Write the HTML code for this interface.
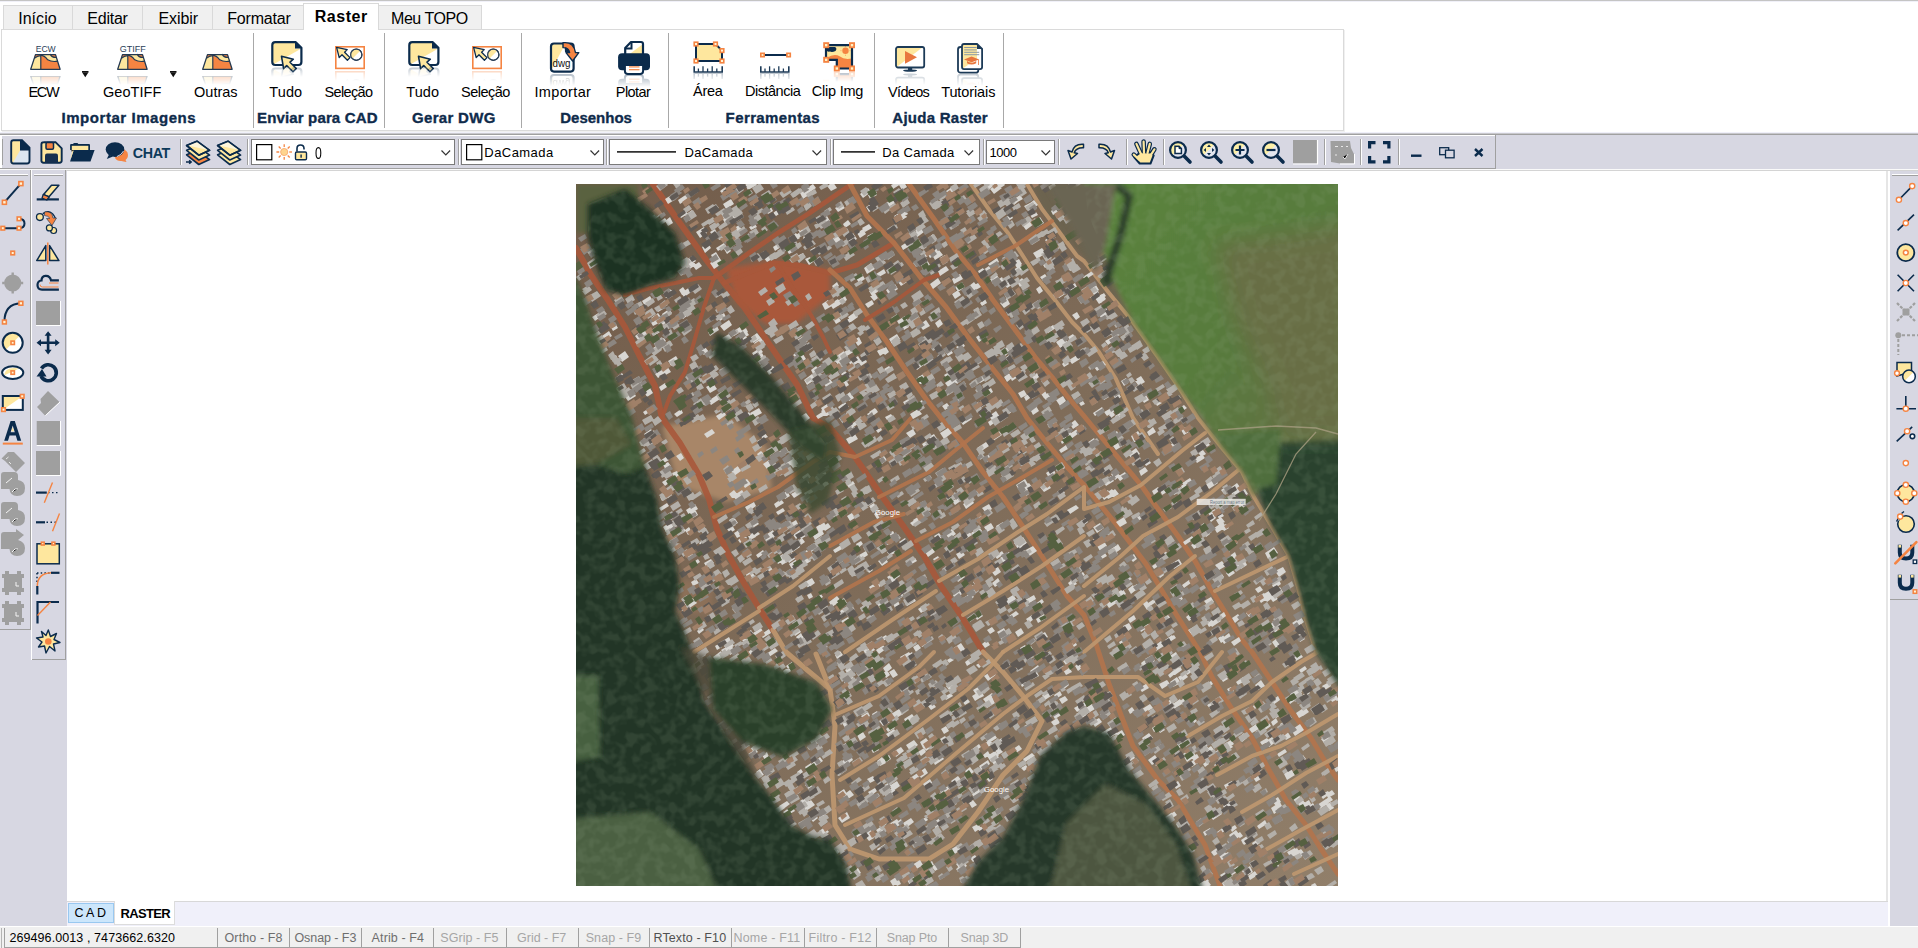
<!DOCTYPE html>
<html><head><meta charset="utf-8"><style>
*{box-sizing:border-box;margin:0;padding:0}
html,body{width:1918px;height:948px;overflow:hidden;background:#fff;font-family:"Liberation Sans", sans-serif}
.a{position:absolute}
.t{position:absolute;white-space:pre}
svg{position:absolute;overflow:visible}
</style></head><body>
<svg style="left:576px;top:184px" width="762" height="702" viewBox="0 0 762 702"><defs>
<clipPath id="cl"><rect width="762" height="702"/></clipPath>
<filter id="bl2" x="-5%" y="-5%" width="110%" height="110%"><feGaussianBlur stdDeviation="2.5"/></filter>
<filter id="bl8" x="-20%" y="-20%" width="140%" height="140%"><feGaussianBlur stdDeviation="10"/></filter>
<filter id="bl1"><feGaussianBlur stdDeviation="0.5"/></filter>
<filter id="leaf" x="0" y="0" width="100%" height="100%">
<feTurbulence type="fractalNoise" baseFrequency="0.1" numOctaves="2" seed="5" result="t"/>
<feColorMatrix in="t" type="matrix" values="0 0 0 0 0.35  0 0 0 0 0.45  0 0 0 0 0.3  -4 0 0 0 2.3" result="c"/>
<feComposite in="c" in2="SourceGraphic" operator="in"/>
</filter>
<filter id="dark" x="0" y="0" width="100%" height="100%">
<feTurbulence type="fractalNoise" baseFrequency="0.12" numOctaves="2" seed="11" result="t"/>
<feColorMatrix in="t" type="matrix" values="0 0 0 0 0  0 0 0 0 0.02  0 0 0 0 0  5 0 0 0 -2.2" result="c"/>
<feComposite in="c" in2="SourceGraphic" operator="in"/>
</filter>
</defs><g clip-path="url(#cl)">
<linearGradient id="gb" x1="0" y1="0" x2="1" y2="1"><stop offset="0" stop-color="#725c4a"/><stop offset="0.45" stop-color="#7e6b58"/><stop offset="1" stop-color="#917f6a"/></linearGradient>
<rect width="762" height="702" fill="url(#gb)"/>
<g filter="url(#bl2)">
<polygon points="0,0 62,0 62,49 0,49" fill="#5a623f"/>
<polygon points="150,84 200,76 254,86 254,112 220,140 190,140 160,118" fill="#a9583a"/>
<polygon points="86,242 150,230 190,262 196,305 150,318 102,302" fill="#a88668"/>
<polygon points="99,394 138,400 135,431 104,428" fill="#8c7058"/>
<polygon points="455,0 505,0 512,30 530,74 538,99 557,138 582,173 602,202 622,234 602,202 582,173 557,138 533,109 508,74 484,49 466,25" fill="#6c6450"/>
</g>
<polyline points="0,64 15,91 32,116 49,143 64,173 79,202 86,234 104,259 123,291 133,315 141,345 153,372 168,399 183,424 197,446" fill="none" stroke="#a8583a" stroke-width="6" stroke-linejoin="round" stroke-linecap="round" opacity="0.9" filter="url(#bl1)"/>
<polyline points="197,446 210,468 230,485 254,505" fill="none" stroke="#bf9870" stroke-width="5" stroke-linejoin="round" stroke-linecap="round" opacity="0.9" filter="url(#bl1)"/>
<polyline points="77,0 94,25 111,49 131,77 148,99 168,123 185,148 202,173 222,202 237,234 254,244 279,273 303,308 328,343 348,372 365,402 382,427 397,451 407,468" fill="none" stroke="#a8583a" stroke-width="6" stroke-linejoin="round" stroke-linecap="round" opacity="0.9" filter="url(#bl1)"/>
<polyline points="407,468 427,488 447,512 466,537 451,567 427,591 402,628 377,660 353,675 303,675 274,665 259,641 256,591 259,542 254,505 240,470" fill="none" stroke="#bf9870" stroke-width="5" stroke-linejoin="round" stroke-linecap="round" opacity="0.9" filter="url(#bl1)"/>
<polyline points="138,94 128,123 118,158 109,188 94,212 86,234" fill="none" stroke="#a8583a" stroke-width="4" stroke-linejoin="round" stroke-linecap="round" opacity="0.9" filter="url(#bl1)"/>
<polyline points="49,111 74,104 99,99 123,94 138,94" fill="none" stroke="#a8583a" stroke-width="4" stroke-linejoin="round" stroke-linecap="round" opacity="0.9" filter="url(#bl1)"/>
<polyline points="138,94 173,69 202,49 232,30 254,15 276,0" fill="none" stroke="#a8583a" stroke-width="5" stroke-linejoin="round" stroke-linecap="round" opacity="0.9" filter="url(#bl1)"/>
<polyline points="148,99 197,79 222,81 254,89 281,81 318,59" fill="none" stroke="#a8583a" stroke-width="5" stroke-linejoin="round" stroke-linecap="round" opacity="0.9" filter="url(#bl1)"/>
<polyline points="202,81 217,104 235,131 247,153 254,168" fill="none" stroke="#a8583a" stroke-width="4" stroke-linejoin="round" stroke-linecap="round" opacity="0.9" filter="url(#bl1)"/>
<polyline points="254,86 274,104 291,131 311,158 331,188 350,215 365,234 387,259 407,288 427,313 447,343 469,377 491,412 508,431 520,460 533,500 557,562 582,596 602,616 614,636 629,661 644,702" fill="none" stroke="#b3744e" stroke-width="5" stroke-linejoin="round" stroke-linecap="round" opacity="0.9" filter="url(#bl1)"/>
<polyline points="274,0 291,32 318,59 345,94 370,123 392,153 417,185 437,210 451,234 471,259 491,283 508,301 540,340 570,380 600,430 624,468 636,493 656,525 676,554 693,586 710,616 730,641 745,665 762,690" fill="none" stroke="#b3744e" stroke-width="5" stroke-linejoin="round" stroke-linecap="round" opacity="0.9" filter="url(#bl1)"/>
<polyline points="333,0 358,35 380,67 400,91 417,116 437,143 459,173 476,193 491,212 508,232 540,271 565,301 582,325 602,352 619,377 636,407 651,431 666,456 676,468 696,498 715,527 735,554 750,579 762,596" fill="none" stroke="#b3744e" stroke-width="5" stroke-linejoin="round" stroke-linecap="round" opacity="0.9" filter="url(#bl1)"/>
<polyline points="395,0 414,27 432,49 447,72 461,94 479,116 496,138 508,150 523,168 540,195 557,234 582,270" fill="none" stroke="#bf9870" stroke-width="4" stroke-linejoin="round" stroke-linecap="round" opacity="0.9" filter="url(#bl1)"/>
<polyline points="451,0 466,25 484,49 501,72 508,77 533,109 557,138 582,173 602,202 622,234 646,264 666,288 678,313 696,343 713,372 723,407 730,436 740,468" fill="none" stroke="#bf9870" stroke-width="4" stroke-linejoin="round" stroke-linecap="round" opacity="0.9" filter="url(#bl1)"/>
<polyline points="289,136 318,118 348,96 363,91" fill="none" stroke="#a8583a" stroke-width="4" stroke-linejoin="round" stroke-linecap="round" opacity="0.9" filter="url(#bl1)"/>
<polyline points="402,81 439,62 476,37" fill="none" stroke="#b3744e" stroke-width="4" stroke-linejoin="round" stroke-linecap="round" opacity="0.9" filter="url(#bl1)"/>
<polyline points="138,333 173,318 202,303 237,278 254,268 279,273 316,256 335,234" fill="none" stroke="#b3744e" stroke-width="4" stroke-linejoin="round" stroke-linecap="round" opacity="0.9" filter="url(#bl1)"/>
<polyline points="303,313 353,288 382,264 407,244" fill="none" stroke="#b3744e" stroke-width="4" stroke-linejoin="round" stroke-linecap="round" opacity="0.9" filter="url(#bl1)"/>
<polyline points="254,362 298,338 328,330" fill="none" stroke="#b3744e" stroke-width="4" stroke-linejoin="round" stroke-linecap="round" opacity="0.9" filter="url(#bl1)"/>
<polyline points="340,357 377,338 412,313 447,293 476,276" fill="none" stroke="#b3744e" stroke-width="4" stroke-linejoin="round" stroke-linecap="round" opacity="0.9" filter="url(#bl1)"/>
<polyline points="254,414 303,387 335,367" fill="none" stroke="#b3744e" stroke-width="4" stroke-linejoin="round" stroke-linecap="round" opacity="0.9" filter="url(#bl1)"/>
<polyline points="363,397 402,375 442,348 471,330 508,303 508,325 533,318 565,301 607,266 629,249" fill="none" stroke="#bf9870" stroke-width="4" stroke-linejoin="round" stroke-linecap="round" opacity="0.9" filter="url(#bl1)"/>
<polyline points="269,468 316,436 360,407" fill="none" stroke="#bf9870" stroke-width="4" stroke-linejoin="round" stroke-linecap="round" opacity="0.9" filter="url(#bl1)"/>
<polyline points="387,431 427,407 466,382 508,352" fill="none" stroke="#bf9870" stroke-width="4" stroke-linejoin="round" stroke-linecap="round" opacity="0.9" filter="url(#bl1)"/>
<polyline points="427,468 464,444 508,412" fill="none" stroke="#bf9870" stroke-width="4" stroke-linejoin="round" stroke-linecap="round" opacity="0.9" filter="url(#bl1)"/>
<polyline points="183,424 217,402 254,372" fill="none" stroke="#bf9870" stroke-width="4" stroke-linejoin="round" stroke-linecap="round" opacity="0.9" filter="url(#bl1)"/>
<polyline points="118,468 153,446 183,427" fill="none" stroke="#bf9870" stroke-width="4" stroke-linejoin="round" stroke-linecap="round" opacity="0.9" filter="url(#bl1)"/>
<polyline points="508,402 545,372 567,352 602,333 636,308 666,283" fill="none" stroke="#bf9870" stroke-width="4" stroke-linejoin="round" stroke-linecap="round" opacity="0.9" filter="url(#bl1)"/>
<polyline points="508,468 557,427 594,392 619,372" fill="none" stroke="#bf9870" stroke-width="4" stroke-linejoin="round" stroke-linecap="round" opacity="0.9" filter="url(#bl1)"/>
<polyline points="639,407 681,387 713,372" fill="none" stroke="#bf9870" stroke-width="4" stroke-linejoin="round" stroke-linecap="round" opacity="0.9" filter="url(#bl1)"/>
<polyline points="261,530 303,512 343,483 358,468" fill="none" stroke="#bf9870" stroke-width="4" stroke-linejoin="round" stroke-linecap="round" opacity="0.9" filter="url(#bl1)"/>
<polyline points="264,596 303,572 353,535 392,505 414,483 427,468" fill="none" stroke="#bf9870" stroke-width="4" stroke-linejoin="round" stroke-linecap="round" opacity="0.9" filter="url(#bl1)"/>
<polyline points="269,641 328,614 377,572 427,530 451,512 476,495 508,493 562,493 589,512 622,498 646,468" fill="none" stroke="#bf9870" stroke-width="4" stroke-linejoin="round" stroke-linecap="round" opacity="0.9" filter="url(#bl1)"/>
<polyline points="612,552 646,532 676,517 696,498 725,478 742,468" fill="none" stroke="#bf9870" stroke-width="4" stroke-linejoin="round" stroke-linecap="round" opacity="0.9" filter="url(#bl1)"/>
<polyline points="641,591 676,572 705,562 730,549 762,530" fill="none" stroke="#bf9870" stroke-width="4" stroke-linejoin="round" stroke-linecap="round" opacity="0.9" filter="url(#bl1)"/>
<polyline points="666,628 696,611 730,589 762,572" fill="none" stroke="#bf9870" stroke-width="4" stroke-linejoin="round" stroke-linecap="round" opacity="0.9" filter="url(#bl1)"/>
<polyline points="691,665 725,646 762,626" fill="none" stroke="#bf9870" stroke-width="4" stroke-linejoin="round" stroke-linecap="round" opacity="0.9" filter="url(#bl1)"/>
<polyline points="718,690 762,670" fill="none" stroke="#bf9870" stroke-width="4" stroke-linejoin="round" stroke-linecap="round" opacity="0.9" filter="url(#bl1)"/>
<g filter="url(#bl1)">
<path d="M439 448l6 -4 3 5 -6 4zM173 341l7 -5 3 4 -8 5zM521 362l7 -5 3 5 -7 5zM301 665l8 -5 2 4 -8 5zM89 310l5 -3 2 4 -4 3zM197 29l8 -6 3 4 -8 5zM316 641l9 -6 2 4 -8 5zM696 401l7 -5 2 4 -7 5zM217 351l5 -4 3 4 -5 4zM481 284l6 -3 2 3 -6 4zM358 352l5 -3 3 4 -5 4zM197 63l6 -4 2 4 -6 4zM516 538l7 -4 3 4 -7 5zM562 215l7 -5 2 3 -7 4zM271 301l6 -4 2 3 -6 4zM311 368l6 -4 3 4 -6 4zM92 177l8 -5 3 5 -8 5zM440 272l5 -4 3 5 -5 4zM190 470l9 -6 3 3 -9 6zM266 577l9 -5 2 4 -8 6zM245 224l6 -4 3 5 -6 4zM741 621l9 -6 3 4 -9 6zM508 525l8 -5 3 5 -8 5zM171 567l7 -5 4 6 -8 5zM356 575l8 -6 4 6 -9 6zM450 435l6 -4 2 4 -5 4zM503 219l4 -2 2 3 -4 2zM464 303l7 -5 4 6 -7 4zM305 166l5 -3 3 5 -4 3zM469 56l9 -6 2 3 -9 6zM267 40l5 -4 3 4 -6 4zM163 563l6 -4 2 3 -6 4zM282 178l7 -4 2 4 -6 4zM103 345l4 -2 3 4 -5 3zM369 349l7 -4 4 5 -7 5zM316 412l8 -6 4 6 -8 5zM190 27l5 -4 2 4 -5 3zM657 322l9 -6 4 6 -9 5zM262 634l9 -6 3 6 -8 5zM594 498l7 -5 4 6 -8 4zM124 167l5 -4 4 5 -5 3zM135 71l5 -3 3 5 -5 4zM378 196l5 -3 2 4 -4 3zM200 328l7 -4 2 3 -7 4zM377 311l5 -3 2 4 -5 3zM88 111l8 -5 2 3 -8 5zM222 46l6 -3 2 3 -5 4zM83 203l6 -4 2 4 -6 4zM376 110l6 -4 3 5 -6 4zM519 114l7 -4 3 6 -6 4zM16 133l8 -5 2 4 -7 5zM412 80l9 -6 2 4 -8 5zM719 506l4 -3 3 5 -4 2zM340 195l7 -5 4 6 -7 4zM243 633l4 -3 4 5 -5 3zM380 163l7 -4 2 3 -6 4zM383 287l7 -5 2 4 -7 5zM462 265l5 -4 2 4 -5 3zM337 336l8 -5 3 5 -8 5zM537 262l8 -5 3 4 -8 5zM395 349l8 -6 4 5 -9 6zM583 540l4 -3 3 4 -5 3zM364 607l8 -5 2 4 -7 5zM676 592l5 -3 4 6 -5 3zM637 614l7 -5 2 4 -6 4zM42 172l7 -5 4 6 -7 5zM253 418l8 -6 4 5 -9 6zM529 310l7 -5 4 6 -8 4zM342 568l6 -4 2 4 -5 4zM552 526l4 -3 3 4 -5 3zM569 475l7 -4 3 6 -6 4zM419 566l4 -3 4 5 -5 3zM128 250l8 -5 3 4 -8 5zM690 557l6 -4 4 5 -7 5zM552 270l8 -6 4 6 -8 5zM535 308l4 -3 4 5 -5 3zM354 100l8 -6 3 5 -8 6zM218 277l4 -2 3 5 -4 3zM73 257l5 -3 4 5 -6 3zM64 148l5 -4 4 6 -6 4zM526 213l5 -3 2 3 -5 3zM307 484l6 -5 3 5 -6 5zM647 564l7 -5 3 4 -8 5zM444 464l5 -3 2 3 -5 4zM493 400l6 -3 2 3 -6 3zM83 324l8 -5 2 3 -8 5zM173 350l7 -4 4 4 -8 5zM59 152l4 -3 3 4 -4 3zM555 252l7 -5 4 6 -8 5zM166 151l5 -3 2 3 -5 3zM239 293l7 -4 2 4 -6 4zM584 306l4 -3 3 5 -5 3zM256 175l4 -3 3 3 -5 4zM270 255l9 -5 3 5 -9 5zM445 304l8 -5 3 4 -8 5zM467 213l5 -4 3 4 -5 3zM147 415l5 -3 2 4 -5 3zM293 107l8 -5 3 4 -8 6zM569 421l9 -6 2 3 -9 6zM89 15l8 -5 3 5 -8 5zM686 411l7 -4 3 6 -6 4zM186 571l5 -3 2 5 -4 3zM415 253l8 -6 3 4 -9 6zM134 48l5 -3 2 4 -4 3zM642 454l5 -3 3 5 -5 3zM479 109l9 -5 3 5 -8 5zM487 486l6 -3 3 5 -6 3zM336 681l8 -5 3 5 -8 5zM701 570l8 -5 2 3 -8 5zM699 387l8 -4 3 5 -7 5zM327 474l9 -6 2 4 -9 5zM35 174l5 -3 2 4 -5 3zM84 156l4 -2 2 3 -4 3zM525 549l10 -6 2 4 -9 6zM296 530l5 -3 2 3 -5 4zM443 497l4 -3 4 6 -5 3zM180 588l4 -3 4 6 -5 2zM442 209l6 -3 3 5 -6 3zM115 398l5 -3 3 4 -6 3zM284 10l8 -6 3 4 -8 6zM750 621l5 -3 3 6 -5 3zM437 86l8 -5 3 4 -8 5zM169 1l8 -6 4 6 -9 5zM428 193l5 -4 3 5 -5 4zM539 550l7 -4 3 5 -7 4zM332 378l7 -4 2 3 -7 4zM552 405l5 -4 3 5 -5 4zM457 69l9 -5 4 5 -9 6zM109 370l5 -3 4 5 -5 3zM567 420l4 -3 4 6 -4 3zM329 419l8 -6 3 4 -9 5zM96 289l5 -2 2 4 -4 3zM320 262l9 -6 2 3 -9 6zM746 502l7 -4 2 4 -6 4zM715 668l6 -4 3 5 -6 3zM409 2l8 -5 2 4 -7 5zM492 251l9 -6 2 4 -8 6zM415 387l7 -4 3 5 -6 4zM601 560l8 -6 3 4 -9 6zM203 622l8 -5 3 3 -8 6zM609 488l9 -6 2 3 -9 6zM679 501l6 -5 4 6 -7 4zM621 262l9 -6 4 5 -10 6zM430 226l6 -4 2 4 -5 4zM166 155l4 -3 2 4 -4 3zM407 515l9 -6 4 5 -9 6zM717 615l6 -4 3 6 -5 3zM323 1l5 -3 3 5 -5 3zM528 228l9 -5 2 4 -8 5zM562 443l8 -6 4 5 -9 6zM695 517l7 -5 2 4 -7 5zM243 291l6 -4 2 4 -6 4zM404 119l5 -4 2 4 -5 3zM310 550l8 -5 3 5 -7 5zM337 180l8 -5 4 5 -8 6zM380 680l9 -6 2 4 -8 6zM334 230l8 -5 4 5 -9 5zM656 382l9 -6 3 4 -9 6zM517 343l7 -4 4 5 -7 5zM396 610l9 -6 2 4 -9 6zM589 456l7 -5 2 3 -7 5zM356 683l5 -4 3 5 -5 3zM605 302l4 -3 4 6 -5 3zM543 458l7 -4 2 4 -7 4zM280 360l5 -3 2 3 -5 4zM284 424l7 -5 2 4 -7 4zM632 334l6 -4 2 4 -5 4zM406 324l7 -4 3 5 -6 4zM576 382l6 -4 2 3 -6 4zM441 98l5 -4 4 5 -6 4zM352 54l5 -4 4 5 -6 4zM134 79l9 -6 4 6 -9 6zM653 688l9 -6 2 4 -9 6zM516 108l5 -3 2 4 -5 3zM695 538l5 -4 2 4 -5 4zM644 493l5 -4 3 6 -5 3zM145 30l7 -5 4 5 -8 5zM500 530l7 -4 4 5 -7 4zM676 659l6 -4 2 4 -6 4zM497 1l6 -4 2 3 -6 4zM224 370l7 -4 2 3 -7 4zM590 456l8 -5 2 3 -8 5zM556 403l5 -3 3 4 -5 3zM398 221l7 -5 4 5 -7 5zM283 371l7 -4 2 4 -6 4zM310 19l6 -4 3 4 -6 4zM592 473l8 -5 2 4 -7 5zM305 637l8 -5 3 4 -8 6zM470 289l7 -5 3 6 -7 4zM109 31l7 -5 4 5 -7 5zM522 113l6 -4 2 3 -6 4zM343 141l7 -5 4 6 -7 4zM270 54l7 -5 4 6 -7 4zM188 354l7 -4 3 4 -7 5zM121 447l5 -4 2 3 -5 4zM128 379l7 -4 3 4 -7 5zM607 570l7 -5 3 5 -7 5zM507 93l9 -6 2 3 -9 6zM393 102l5 -4 3 4 -5 3zM628 417l7 -4 3 5 -6 4zM632 329l7 -4 2 3 -7 4zM164 453l7 -5 4 6 -7 5zM221 72l6 -3 2 3 -5 4zM137 473l8 -6 3 5 -8 5zM293 104l6 -4 2 4 -6 4zM581 368l7 -4 3 5 -7 4zM576 307l6 -4 2 3 -6 5zM318 585l6 -4 2 4 -6 4zM228 425l7 -4 2 3 -7 4zM165 298l6 -3 4 5 -6 4zM251 2l6 -4 4 6 -6 3zM289 503l6 -4 2 4 -6 3zM278 156l5 -3 3 6 -4 3zM199 625l8 -5 2 4 -7 5zM62 201l6 -4 3 4 -7 4zM522 115l6 -3 2 3 -5 4zM156 148l8 -5 2 4 -8 5zM566 554l7 -5 4 5 -8 5zM308 356l4 -3 4 6 -5 2zM319 698l4 -2 2 4 -4 2zM131 194l5 -3 4 6 -5 3zM717 670l8 -5 4 5 -8 5zM672 525l8 -5 2 3 -8 5zM502 244l5 -3 3 5 -5 3zM604 517l7 -5 3 5 -7 4zM627 648l7 -4 2 3 -7 5zM401 114l6 -4 2 3 -6 4zM109 80l7 -5 4 6 -8 5zM226 293l6 -4 3 4 -6 4zM723 486l6 -4 2 3 -6 4zM653 651l7 -5 3 4 -8 5zM654 644l5 -3 2 3 -5 4zM694 414l5 -3 3 4 -5 3zM454 225l6 -3 3 5 -6 4zM139 462l5 -3 2 4 -5 3zM410 594l4 -3 3 4 -4 3zM409 559l5 -3 3 4 -5 3zM259 24l7 -4 3 4 -7 4zM695 677l6 -4 3 5 -5 4zM737 486l5 -3 2 3 -4 3zM421 448l7 -4 2 4 -6 4zM82 188l9 -6 4 6 -9 5zM234 66l5 -3 2 3 -4 4zM635 668l7 -5 3 5 -7 4zM317 568l8 -5 3 4 -8 6zM349 368l7 -4 3 4 -7 5zM103 106l4 -3 4 6 -5 2zM352 522l5 -3 3 4 -5 3zM350 681l6 -4 2 4 -6 4zM396 512l8 -5 3 5 -8 5zM465 210l4 -3 3 5 -4 2zM368 513l7 -4 2 3 -7 4zM693 441l8 -5 3 5 -8 5zM430 33l5 -3 2 4 -5 3zM188 352l9 -6 3 6 -8 5zM641 331l4 -3 3 4 -5 3zM571 248l6 -5 3 5 -7 4zM75 134l7 -5 3 4 -7 5zM438 359l9 -6 4 6 -9 6zM475 538l6 -4 3 5 -6 3zM262 223l7 -5 4 5 -8 5zM663 553l5 -4 3 5 -5 4zM613 579l6 -4 3 4 -6 4zM387 414l8 -5 3 4 -8 5zM401 195l7 -4 3 4 -7 4zM272 133l7 -5 3 5 -7 5zM394 674l5 -3 3 4 -5 3zM486 249l6 -4 3 4 -6 4zM614 536l4 -3 3 4 -4 3zM334 339l8 -5 2 3 -7 5zM728 619l5 -3 2 4 -4 3zM535 290l5 -3 4 5 -5 4zM615 361l5 -3 3 4 -5 3zM126 63l6 -4 3 5 -6 5zM173 43l6 -3 2 3 -6 3zM344 637l6 -4 2 3 -6 4zM237 187l7 -5 3 4 -7 5zM84 313l4 -3 3 4 -5 3zM98 230l7 -5 2 4 -6 4zM243 647l6 -4 4 5 -7 4zM322 98l6 -4 3 4 -6 4zM545 197l5 -3 2 5 -4 3zM105 109l9 -6 3 4 -9 6zM67 255l9 -5 3 5 -9 6zM155 287l7 -5 3 5 -7 5zM408 492l9 -6 3 5 -8 6zM86 298l5 -3 3 3 -5 4zM578 579l7 -4 1 3 -6 4zM308 140l6 -3 3 4 -6 3zM184 251l4 -3 4 5 -5 2zM107 122l6 -4 3 4 -6 4zM80 124l6 -4 3 4 -7 4zM103 31l7 -4 2 3 -7 4zM624 565l6 -4 3 4 -6 4zM597 487l7 -5 2 4 -7 5zM696 617l6 -4 3 5 -5 4zM500 392l7 -4 2 3 -7 4zM565 214l5 -3 3 5 -5 3zM300 598l5 -3 3 5 -4 3zM472 3l6 -4 2 3 -6 4zM169 390l6 -4 3 6 -5 3zM177 449l8 -5 3 5 -8 5zM414 82l7 -4 3 5 -7 4zM559 197l6 -3 3 4 -6 3zM145 458l8 -5 2 4 -7 4zM396 643l6 -3 3 4 -6 4zM323 31l5 -3 3 5 -5 3zM342 196l9 -6 3 4 -9 6zM650 389l6 -4 3 4 -6 4zM639 672l9 -5 4 5 -9 6zM287 466l8 -6 4 6 -9 5zM581 390l5 -3 2 4 -4 3zM464 93l5 -3 3 4 -5 3zM550 573l6 -4 3 5 -6 4zM645 306l6 -4 3 4 -6 4zM246 343l6 -4 3 4 -6 4zM169 323l9 -5 2 4 -8 6zM246 120l6 -4 4 6 -7 4zM308 185l5 -3 3 3 -5 4zM610 433l5 -4 3 5 -5 3zM146 154l7 -4 3 4 -7 4zM412 238l6 -4 3 3 -7 5zM402 645l7 -4 2 4 -6 4zM457 38l7 -5 4 6 -7 4zM303 537l7 -5 4 6 -7 4zM313 399l6 -4 3 4 -6 4zM720 575l7 -4 3 4 -7 4zM722 620l5 -4 4 6 -5 3zM419 372l7 -5 2 3 -7 5zM259 177l8 -5 3 5 -7 5zM402 511l4 -3 2 4 -4 2zM340 220l6 -4 2 4 -5 4zM615 573l6 -3 3 5 -5 3zM158 349l5 -3 4 5 -6 3zM328 535l8 -5 4 5 -9 6zM301 577l5 -4 4 6 -6 3zM144 142l9 -6 3 5 -8 6zM84 277l7 -5 2 4 -7 4zM433 432l7 -5 3 3 -8 5zM392 575l7 -4 3 5 -7 4zM434 193l6 -4 2 4 -6 4zM174 229l9 -5 3 5 -9 5zM213 380l8 -5 3 5 -8 5zM292 608l7 -4 2 3 -6 5zM644 691l7 -4 3 5 -6 4zM376 95l8 -5 3 5 -9 5zM398 431l6 -3 3 4 -6 4zM242 38l9 -6 3 5 -9 6zM309 233l6 -3 2 3 -6 3zM132 217l9 -6 3 4 -9 6zM221 174l6 -4 3 5 -6 4zM608 573l9 -6 3 5 -9 6zM131 513l6 -4 3 4 -6 4zM646 699l5 -3 2 4 -5 3zM326 143l5 -4 2 4 -5 3zM537 211l5 -3 3 5 -5 3zM83 38l6 -4 2 3 -6 4zM602 493l7 -4 3 4 -7 5zM380 370l6 -3 3 4 -6 4zM711 668l8 -4 3 5 -7 5zM535 365l7 -5 3 5 -7 5zM359 637l5 -3 3 5 -5 3zM572 576l7 -5 4 6 -7 4zM421 2l6 -4 2 3 -6 4zM207 628l9 -6 3 5 -9 5zM597 600l5 -3 3 5 -5 3zM68 208l6 -4 3 5 -6 4zM628 567l7 -5 4 5 -8 5zM750 610l6 -4 3 4 -7 4zM140 64l8 -5 2 3 -8 5zM658 310l10 -6 2 3 -9 6zM307 489l4 -3 3 5 -4 3zM153 310l5 -4 4 5 -6 3zM294 112l5 -3 3 5 -4 3zM490 4l9 -6 2 4 -9 5zM117 82l6 -4 3 4 -6 4zM337 50l8 -6 3 4 -8 6zM670 429l6 -4 3 4 -6 4zM240 413l5 -3 2 3 -5 3zM240 232l9 -6 2 4 -9 5zM386 517l5 -3 3 4 -5 3zM289 652l5 -4 4 6 -5 3zM539 413l7 -4 2 3 -7 5zM606 401l7 -5 2 3 -7 5zM621 344l7 -5 3 5 -7 5zM486 180l4 -4 3 4 -5 3zM699 407l5 -4 3 5 -5 4zM589 633l9 -6 3 4 -9 6zM313 488l5 -3 4 6 -5 3zM477 334l5 -3 2 4 -4 3zM655 654l9 -6 3 4 -9 6zM245 227l6 -4 3 5 -5 4zM531 550l7 -5 3 4 -7 5zM423 451l7 -4 4 5 -8 5zM447 575l9 -6 3 3 -10 6zM257 135l5 -3 3 5 -5 3zM491 104l8 -5 3 6 -7 5zM417 99l9 -6 2 4 -9 5zM648 560l7 -4 3 4 -7 5zM529 418l9 -5 4 5 -9 6zM375 597l7 -5 4 5 -7 5zM263 234l8 -5 4 5 -8 6zM607 358l9 -6 2 3 -9 6zM567 277l5 -3 3 5 -5 3zM114 9l6 -4 2 3 -6 4zM316 408l5 -3 4 5 -5 3zM514 358l8 -6 2 3 -8 6zM368 166l5 -3 4 6 -5 3zM364 74l5 -3 3 4 -5 4zM307 575l6 -4 2 4 -6 4zM517 229l9 -6 2 3 -9 6zM221 156l8 -5 3 6 -7 5zM727 507l4 -3 3 5 -4 3zM157 312l9 -6 4 6 -9 5zM147 20l8 -5 3 5 -8 5zM369 199l9 -6 3 5 -9 5zM645 343l5 -3 3 4 -5 3zM211 67l4 -3 2 4 -4 2zM343 73l7 -4 2 3 -7 4zM305 454l5 -3 2 3 -5 3zM408 520l9 -5 2 4 -8 5zM595 521l9 -6 2 5 -8 5zM411 446l5 -3 3 4 -5 3zM262 201l8 -5 3 5 -8 5zM587 521l8 -6 4 6 -8 5zM313 640l8 -5 3 5 -8 5zM688 413l7 -5 3 5 -7 5zM581 544l4 -3 4 5 -5 3zM89 37l5 -4 3 6 -5 3zM480 216l7 -4 3 5 -6 5zM558 335l7 -4 2 3 -7 4zM462 516l7 -5 3 3 -8 5zM229 398l7 -4 3 5 -7 5zM291 230l9 -5 2 3 -8 6zM257 366l8 -5 3 3 -9 5zM149 34l7 -5 4 6 -7 4zM258 665l7 -5 3 5 -7 5zM662 381l7 -4 2 4 -6 4zM318 9l6 -4 3 4 -6 4zM346 260l9 -6 3 5 -9 6zM395 103l7 -4 3 4 -7 4zM286 44l7 -4 3 4 -7 4zM370 502l5 -4 3 5 -5 3zM153 336l5 -3 4 6 -6 3zM116 379l6 -4 2 3 -6 4zM221 588l4 -3 2 3 -4 3zM563 504l7 -4 3 4 -7 4zM563 287l6 -4 3 4 -7 5zM140 473l6 -3 1 3 -5 3zM330 561l8 -5 4 5 -8 6zM618 262l6 -3 3 5 -6 3zM271 332l8 -5 3 5 -8 5zM379 393l6 -5 4 5 -7 5zM294 563l5 -3 4 6 -6 3zM429 416l8 -5 4 5 -8 5zM346 561l6 -4 4 6 -6 4zM598 416l5 -3 2 4 -5 3zM207 487l6 -4 2 4 -6 4zM314 697l6 -4 3 5 -6 4zM624 559l6 -4 4 5 -7 4zM335 62l8 -6 4 6 -9 5zM344 80l7 -4 3 5 -7 4zM172 468l4 -3 2 3 -4 3zM225 232l5 -3 4 5 -5 4zM357 375l5 -3 3 5 -5 3zM315 1l8 -4 2 3 -8 5zM412 652l5 -3 2 4 -4 3zM717 472l6 -4 4 5 -7 4zM385 238l9 -6 2 3 -9 6zM358 642l4 -3 2 3 -4 3zM310 608l7 -5 3 5 -6 5zM220 453l5 -4 2 4 -5 3zM79 190l7 -5 3 4 -7 5zM419 558l7 -4 3 5 -7 5zM493 176l8 -5 3 4 -8 5zM77 186l8 -5 4 6 -8 5zM148 65l4 -3 3 5 -4 3zM189 385l5 -3 3 4 -5 3zM559 256l6 -4 3 5 -6 4zM235 186l5 -4 3 4 -6 4zM600 226l8 -5 3 3 -9 6zM259 172l8 -6 3 5 -8 6zM229 399l6 -4 3 4 -6 4zM227 54l7 -4 2 3 -7 5zM293 403l9 -6 3 5 -9 6zM565 479l5 -4 3 4 -6 4zM228 6l9 -6 3 4 -9 6zM351 69l9 -6 3 6 -9 5zM261 173l8 -5 3 5 -7 5zM217 147l8 -5 2 3 -8 5zM679 405l5 -3 3 4 -5 3zM278 649l6 -4 4 5 -6 4zM229 271l6 -4 4 5 -7 5zM449 466l6 -4 3 5 -6 4zM464 451l5 -3 3 5 -5 3zM483 266l7 -5 2 4 -7 4zM217 171l5 -4 3 4 -5 3zM364 249l8 -5 4 5 -8 6zM660 498l7 -5 2 4 -7 4zM511 106l9 -5 3 5 -8 6zM298 330l5 -4 4 6 -6 3zM151 345l5 -4 3 5 -5 3zM221 457l6 -5 4 6 -7 4zM448 542l6 -3 2 3 -5 4zM263 324l6 -4 3 4 -6 4zM339 46l6 -4 2 3 -6 4zM449 416l9 -5 2 4 -8 5zM376 317l8 -4 2 3 -7 5zM212 54l8 -5 4 5 -8 5zM379 103l7 -5 3 5 -7 5zM484 256l5 -4 3 4 -6 4zM381 684l8 -5 2 3 -8 5zM301 420l4 -3 3 5 -4 2zM371 476l5 -3 2 3 -5 3zM695 682l6 -4 2 4 -6 4zM290 23l8 -5 3 4 -8 6zM237 352l9 -6 2 4 -9 6zM170 392l6 -4 3 4 -6 4zM684 558l7 -4 2 3 -7 4zM592 491l6 -5 2 3 -6 5zM667 497l4 -3 3 4 -5 3zM596 415l8 -5 3 5 -8 5zM460 105l4 -3 3 5 -4 3zM533 231l4 -3 2 3 -4 3zM645 455l8 -6 3 6 -8 5zM75 148l6 -4 3 4 -6 4zM177 175l9 -6 3 5 -9 5zM344 558l6 -4 4 5 -7 5zM666 658l6 -4 2 3 -6 4zM353 253l5 -3 3 5 -5 3zM638 581l8 -5 2 4 -7 5zM325 62l9 -6 3 4 -10 6zM274 241l9 -6 2 3 -9 6zM539 232l5 -3 2 3 -5 4zM521 360l5 -3 4 5 -6 4zM606 299l8 -5 2 3 -8 5zM212 341l8 -5 2 4 -7 5zM549 395l4 -3 3 3 -5 3zM704 540l5 -3 3 6 -5 3zM646 357l5 -3 3 6 -5 3zM729 624l8 -5 3 5 -8 5zM715 546l9 -6 4 6 -9 6zM475 529l8 -5 4 6 -8 5zM678 664l6 -3 2 2 -6 4zM379 216l6 -5 2 4 -6 4zM470 146l7 -5 3 3 -8 5zM566 525l8 -5 3 4 -8 5zM445 309l6 -4 2 5 -5 4zM448 367l9 -5 4 5 -9 6zM220 348l8 -5 3 6 -7 5zM315 530l8 -5 4 5 -8 5zM411 572l8 -5 4 5 -8 6zM656 434l6 -4 3 4 -6 5zM155 46l8 -5 3 5 -8 5zM498 524l9 -5 2 4 -8 5zM262 418l6 -4 3 5 -6 4zM454 487l8 -6 3 5 -8 5zM655 308l8 -5 3 3 -9 6zM233 632l5 -3 4 5 -5 4zM287 645l5 -3 4 5 -6 4zM416 399l6 -5 3 5 -6 4zM356 71l7 -5 4 5 -8 5zM631 521l8 -5 3 5 -7 5zM456 193l5 -4 2 4 -5 4zM467 464l4 -3 3 4 -5 3zM217 449l6 -4 2 3 -6 4zM164 148l6 -4 2 4 -6 4zM374 666l8 -5 3 5 -8 5zM454 31l6 -3 2 3 -6 3zM66 117l8 -5 3 5 -8 5zM265 562l5 -3 3 5 -4 3zM445 584l5 -3 2 3 -4 3zM169 450l6 -4 2 3 -6 4zM84 137l8 -5 2 4 -7 5zM527 297l8 -5 3 5 -8 5zM403 582l9 -6 2 4 -9 6zM577 463l8 -6 3 5 -8 5zM570 537l9 -6 2 3 -9 6zM323 358l6 -4 4 5 -6 4zM156 422l8 -6 2 3 -9 6zM681 642l8 -6 2 4 -8 5zM353 517l5 -3 2 3 -5 3zM26 152l7 -5 3 5 -7 4zM220 51l7 -5 3 4 -8 4zM401 264l9 -6 3 4 -9 6zM342 425l6 -4 3 4 -6 4zM653 305l8 -6 3 4 -9 6zM522 129l9 -5 3 5 -9 5zM103 129l5 -3 3 6 -4 3zM87 281l5 -3 3 4 -5 4zM494 240l5 -4 4 5 -6 4zM437 565l6 -4 3 4 -6 4zM647 622l7 -5 3 5 -7 5zM229 601l5 -3 3 5 -4 3zM595 380l8 -5 3 5 -8 5zM370 7l6 -4 2 4 -5 4zM571 210l4 -3 2 3 -4 3zM312 463l9 -5 2 4 -8 5zM260 118l9 -6 2 4 -9 6zM148 462l7 -5 3 5 -7 4zM265 578l8 -5 1 3 -7 5zM628 502l7 -5 2 3 -7 5zM49 213l8 -6 3 5 -8 5zM281 551l6 -3 3 5 -6 4zM181 270l4 -3 3 3 -5 3zM174 50l6 -4 2 3 -6 4zM269 486l6 -4 2 3 -6 4zM389 587l5 -4 4 5 -6 4zM425 483l7 -5 2 3 -7 5zM144 7l8 -6 4 6 -8 5zM204 377l6 -4 3 4 -7 4zM145 466l7 -4 2 4 -6 4zM151 465l5 -3 3 6 -5 3zM219 359l7 -5 3 4 -7 5zM280 498l5 -2 2 3 -5 3zM587 434l5 -3 4 5 -6 4zM714 510l8 -6 4 6 -9 5zM86 130l7 -5 3 4 -8 5zM331 696l6 -4 3 5 -6 4zM165 458l5 -3 3 4 -5 4zM248 292l6 -4 2 4 -6 4zM389 344l8 -4 2 3 -8 5zM681 413l7 -4 3 6 -6 4zM491 326l9 -5 3 3 -9 6zM184 451l9 -6 2 4 -8 5zM492 399l5 -4 3 4 -5 4zM467 81l6 -4 2 3 -6 4zM272 244l5 -3 2 3 -5 3zM724 528l6 -4 3 4 -6 4zM579 218l5 -3 2 4 -5 3zM105 127l6 -4 3 5 -6 4zM529 157l9 -5 2 3 -8 6zM40 205l5 -4 3 5 -5 3zM630 300l9 -6 3 5 -9 6zM448 22l6 -3 2 3 -5 4zM311 393l10 -6 3 5 -9 6zM209 278l8 -5 3 4 -8 6zM179 324l4 -3 3 5 -4 3zM376 465l9 -6 4 6 -9 6zM226 298l5 -3 3 5 -5 3zM484 502l7 -5 2 4 -6 5zM720 529l6 -4 4 5 -7 4zM228 309l9 -5 2 3 -9 5zM426 167l5 -4 3 5 -5 4zM447 42l8 -6 3 4 -8 6zM721 452l4 -3 4 6 -5 3zM505 337l5 -3 2 4 -4 3zM365 545l5 -3 3 5 -5 3zM270 211l4 -3 4 6 -5 3zM420 342l7 -4 3 4 -8 4zM178 159l7 -5 3 4 -8 5zM368 191l5 -3 3 5 -4 3zM259 471l5 -4 3 4 -6 4zM187 73l5 -4 4 6 -5 3zM228 196l8 -6 4 5 -9 6zM213 365l9 -6 2 4 -9 6zM666 687l8 -5 3 6 -8 5zM400 153l7 -4 3 4 -7 5zM285 532l7 -4 2 4 -6 4zM481 308l5 -4 3 5 -5 4zM206 310l5 -3 3 5 -5 3zM262 609l6 -4 3 5 -6 4zM552 435l6 -4 2 4 -6 4zM638 344l9 -6 3 5 -9 6zM364 555l5 -3 3 4 -5 3zM256 54l5 -3 4 5 -5 4zM269 137l5 -3 2 3 -5 3zM34 142l5 -3 3 5 -5 3zM560 195l5 -3 4 6 -5 3zM450 22l8 -6 4 5 -9 6zM540 409l7 -4 3 5 -6 4zM289 120l7 -4 2 4 -6 4zM706 551l5 -4 4 6 -5 3zM435 17l9 -6 3 4 -9 5zM524 372l5 -3 2 3 -5 3zM397 398l4 -3 2 3 -4 3zM366 222l5 -3 3 4 -5 3zM393 619l4 -3 4 5 -5 3zM665 656l6 -4 2 4 -6 4zM411 556l8 -5 2 3 -8 5zM576 544l7 -5 3 4 -8 5zM313 349l4 -2 3 5 -4 2zM229 75l5 -2 3 5 -4 3zM698 440l6 -4 3 6 -5 4zM266 539l8 -6 3 5 -8 6zM655 458l8 -5 2 4 -7 5zM662 309l7 -4 3 5 -7 4zM622 268l5 -2 3 4 -5 3zM343 459l5 -2 2 4 -4 2zM273 178l9 -6 3 5 -10 6zM268 168l8 -5 3 4 -8 5zM480 158l8 -5 4 6 -8 5zM87 109l7 -4 3 4 -7 4zM744 611l8 -4 2 3 -7 5zM214 280l9 -6 3 5 -9 5zM499 482l4 -3 3 5 -4 3zM327 639l8 -5 3 4 -8 6zM408 274l7 -5 3 5 -7 4zM268 498l8 -6 3 4 -9 6zM318 32l5 -3 4 5 -5 3zM240 343l8 -5 3 6 -8 5zM639 579l5 -3 3 4 -5 4zM487 477l8 -5 2 4 -7 5zM87 343l9 -6 3 6 -9 5zM140 232l8 -5 2 4 -7 5zM478 511l6 -4 2 4 -6 4zM758 584l5 -4 3 5 -6 3zM441 366l5 -4 3 4 -5 3zM602 554l5 -3 3 4 -5 3zM720 516l8 -6 3 4 -9 6zM241 302l9 -6 3 4 -9 6zM415 576l7 -4 3 5 -7 4zM433 418l5 -3 3 4 -6 3zM697 447l9 -6 2 3 -9 6zM362 87l8 -5 3 4 -9 6zM93 301l5 -3 2 4 -4 3zM492 153l5 -3 2 3 -5 3zM377 411l7 -5 2 4 -7 5zM264 329l5 -3 3 3 -6 4zM568 447l5 -4 2 3 -5 4zM395 402l7 -4 3 4 -7 5zM174 154l7 -5 4 5 -8 5zM424 119l7 -5 3 6 -6 4zM120 472l7 -5 3 4 -7 5zM293 322l5 -3 3 6 -4 3zM313 155l8 -5 3 5 -8 5zM424 374l9 -6 3 5 -9 6zM409 554l7 -5 4 5 -8 5zM291 52l6 -3 3 4 -6 4zM190 186l7 -4 3 4 -7 5zM327 218l7 -4 2 3 -7 4zM120 48l8 -5 3 6 -7 5zM483 515l6 -3 3 4 -6 4zM330 249l7 -4 3 5 -6 4zM648 601l8 -4 2 3 -8 5zM596 308l9 -5 2 3 -9 5zM310 545l6 -5 3 4 -7 4zM210 373l6 -4 4 5 -7 5zM199 375l8 -5 3 5 -8 5zM162 356l7 -5 2 3 -7 5zM123 359l7 -5 4 5 -8 5zM334 594l9 -6 3 3 -9 6zM634 631l9 -6 3 5 -9 6zM532 253l9 -6 2 4 -9 6zM165 233l8 -5 2 3 -7 5zM288 84l7 -5 4 6 -8 5zM227 53l7 -5 4 5 -8 5zM406 460l5 -4 3 5 -5 3zM293 9l5 -4 3 4 -6 4zM102 16l9 -6 2 4 -9 6zM227 622l8 -6 4 5 -9 6zM621 699l9 -6 3 4 -9 6zM697 530l6 -3 2 4 -5 3zM491 463l8 -6 2 4 -8 5zM198 320l7 -5 3 4 -8 5zM708 590l7 -5 4 6 -8 5zM408 343l7 -4 3 5 -7 4zM513 80l6 -4 4 5 -6 4zM618 275l8 -5 3 4 -8 5zM511 259l7 -5 3 6 -7 4zM181 257l6 -3 3 4 -6 4zM397 506l5 -3 4 6 -5 3zM689 369l9 -6 4 6 -10 6zM466 511l9 -6 3 5 -9 6zM324 473l9 -5 3 5 -8 6zM540 338l8 -5 3 6 -7 4zM510 109l5 -3 4 5 -5 3zM229 583l6 -4 3 4 -7 4zM696 458l4 -3 4 6 -4 3zM280 94l6 -4 3 5 -6 4zM460 435l8 -5 3 4 -9 5zM215 310l9 -5 2 4 -8 5zM347 600l7 -5 3 5 -7 5zM695 624l9 -6 3 6 -9 6zM342 589l7 -5 3 5 -7 5zM288 483l9 -6 3 5 -9 6zM684 541l7 -5 4 6 -7 5zM324 29l5 -4 3 5 -5 3zM749 616l5 -4 3 4 -6 4zM210 482l6 -4 2 4 -6 3zM100 272l5 -3 3 5 -4 3zM300 466l7 -5 3 4 -7 5zM481 34l6 -4 2 3 -5 4zM651 505l4 -2 3 4 -4 3zM644 673l8 -5 4 5 -8 5zM281 49l6 -4 3 5 -6 4zM265 190l4 -3 3 3 -5 3zM547 442l6 -3 3 5 -5 4zM389 478l7 -5 3 4 -8 5zM712 516l7 -5 2 4 -7 5zM224 9l5 -3 4 5 -6 4zM109 420l8 -6 4 5 -9 6zM77 164l8 -5 3 4 -8 5zM641 433l7 -5 2 4 -7 5zM395 566l8 -6 2 3 -8 6zM594 261l6 -4 4 6 -6 4zM754 515l6 -4 3 5 -6 3zM633 438l9 -6 3 5 -9 6zM270 443l4 -3 2 3 -4 3zM109 346l4 -3 3 5 -4 3zM583 500l8 -4 3 4 -8 5zM187 280l6 -4 4 5 -6 4zM400 481l8 -5 2 3 -7 5zM113 329l6 -4 3 6 -5 3zM290 384l4 -2 3 4 -4 3zM627 580l4 -3 2 3 -4 3zM492 84l5 -4 2 4 -5 3zM525 311l7 -5 3 5 -7 5zM291 595l6 -3 3 4 -6 3zM414 95l7 -4 3 5 -7 4zM745 555l6 -4 3 4 -6 4zM625 702l7 -5 3 4 -8 5zM498 247l6 -4 2 3 -6 4zM302 377l7 -4 3 5 -6 4zM130 203l7 -4 4 6 -7 4zM427 175l6 -4 3 5 -6 4zM260 588l9 -6 2 4 -9 6zM180 371l7 -5 2 3 -7 5zM261 429l7 -5 4 6 -8 5zM641 648l7 -5 2 3 -7 5zM289 649l6 -4 2 4 -6 4zM317 420l5 -3 2 4 -5 3zM248 228l8 -6 3 5 -8 5zM475 27l4 -3 3 4 -5 3zM312 642l5 -3 3 5 -5 4zM299 245l5 -3 2 4 -4 3zM266 612l8 -6 4 5 -9 6zM387 320l9 -5 2 4 -8 6zM612 446l7 -4 4 5 -7 4zM74 137l7 -5 4 6 -8 4zM640 336l5 -3 4 5 -6 3zM172 352l5 -3 3 4 -6 3zM630 438l7 -4 3 5 -7 4zM541 293l8 -5 2 4 -7 5zM414 5l9 -6 3 5 -8 6zM142 133l6 -4 2 4 -6 4zM222 350l5 -3 3 5 -5 3zM716 439l9 -6 3 5 -8 6zM236 579l8 -6 3 4 -9 6zM176 169l8 -5 3 4 -8 6zM293 228l6 -4 2 3 -6 4zM605 246l4 -3 4 5 -5 3zM265 437l7 -4 3 4 -7 4zM639 381l7 -4 4 5 -7 4zM110 326l9 -6 3 5 -9 6zM458 421l8 -6 2 3 -8 6zM413 232l7 -5 4 6 -7 5zM600 640l9 -5 2 3 -9 6zM652 373l7 -5 2 5 -6 4zM440 301l9 -6 3 5 -9 6zM406 209l9 -5 2 4 -8 5zM638 569l4 -3 4 6 -5 3zM292 11l6 -4 3 4 -7 4zM402 87l5 -3 2 4 -5 3zM435 17l6 -4 2 4 -5 4zM68 250l7 -5 4 6 -8 4zM76 32l8 -5 2 3 -8 6zM386 352l7 -5 3 4 -8 5zM39 194l7 -5 2 3 -7 5zM627 349l5 -3 2 4 -4 3zM146 34l7 -5 3 6 -7 4zM232 363l6 -4 3 5 -6 4zM400 604l5 -4 3 5 -5 4zM337 463l5 -3 3 4 -5 4zM639 394l7 -4 2 3 -6 5zM678 363l6 -4 3 4 -6 4zM384 468l4 -3 4 6 -5 3zM506 520l6 -5 2 4 -6 4zM256 102l5 -4 2 4 -5 3zM407 571l5 -4 2 4 -5 3zM673 545l7 -5 3 5 -7 4zM361 637l6 -4 3 5 -6 4zM437 78l6 -3 3 5 -5 4zM107 78l9 -6 4 5 -9 6zM496 131l5 -3 3 5 -4 3zM300 90l8 -5 2 4 -7 4zM327 539l8 -4 2 4 -7 4zM216 64l5 -3 2 3 -5 3zM735 701l4 -2 2 3 -4 3zM359 139l5 -4 3 5 -5 4zM313 602l8 -5 3 5 -7 5zM306 603l7 -5 2 3 -7 5zM672 692l7 -5 3 4 -8 5zM518 183l9 -6 3 4 -9 6zM231 411l4 -2 2 4 -4 2zM226 375l5 -4 4 6 -6 4zM428 100l8 -5 3 4 -8 5zM207 366l5 -4 3 5 -5 3zM132 148l9 -6 2 4 -9 6zM224 617l6 -4 4 5 -7 5zM453 493l8 -5 2 4 -8 4zM303 275l5 -3 3 4 -5 4zM301 167l6 -4 3 5 -6 4zM274 689l8 -5 3 5 -8 5zM321 137l8 -5 3 5 -8 5zM67 228l8 -5 2 3 -8 5zM342 193l9 -5 3 5 -9 5zM254 120l8 -5 3 5 -8 5zM310 106l9 -6 3 5 -9 6zM553 373l5 -3 3 5 -4 3zM407 86l6 -4 4 6 -6 4zM300 646l6 -4 2 4 -5 4zM448 213l8 -5 2 3 -8 6zM247 199l7 -4 3 4 -7 4zM380 685l8 -5 2 3 -8 5z" fill="#d8d6d2"/>
<path d="M298 684l5 -3 3 6 -4 2zM105 82l6 -4 4 5 -6 4zM290 469l5 -3 3 4 -5 3zM670 672l5 -3 2 3 -5 4zM679 548l9 -6 3 5 -8 6zM365 60l5 -3 2 4 -4 3zM654 489l5 -4 3 4 -6 4zM583 375l8 -6 3 4 -9 5zM644 566l8 -5 4 5 -9 5zM334 658l10 -6 3 6 -9 6zM688 550l8 -6 3 5 -8 5zM595 233l9 -5 3 6 -8 5zM297 342l9 -6 4 6 -9 6zM325 362l6 -4 2 4 -6 4zM80 113l4 -3 3 4 -5 3zM185 11l8 -5 3 4 -8 6zM636 612l8 -5 2 4 -8 4zM219 322l5 -3 3 4 -5 3zM411 173l9 -6 3 4 -9 5zM495 503l9 -5 3 4 -9 5zM525 161l4 -3 3 4 -5 2zM199 472l8 -5 3 5 -7 5zM344 576l9 -6 3 5 -9 6zM552 317l8 -6 4 5 -8 6zM495 211l7 -4 3 4 -7 5zM143 64l6 -4 2 3 -6 4zM90 353l8 -5 3 6 -7 5zM678 333l7 -5 2 3 -7 5zM700 579l9 -5 3 6 -8 5zM502 266l6 -4 3 4 -6 4zM264 669l4 -3 4 6 -5 3zM355 263l9 -6 2 4 -8 5zM252 192l9 -6 3 5 -9 5zM693 446l9 -5 2 3 -9 5zM185 45l4 -3 3 4 -4 3zM427 263l8 -6 2 4 -8 5zM182 108l7 -5 3 4 -7 5zM453 458l5 -4 2 3 -5 4zM483 63l5 -3 3 5 -5 3zM266 292l9 -5 3 6 -8 5zM164 285l8 -6 3 4 -9 5zM300 364l7 -4 2 3 -6 4zM589 358l4 -3 3 5 -4 3zM647 699l8 -5 4 5 -8 6zM382 224l5 -3 2 3 -4 3zM170 458l4 -2 2 3 -4 2zM563 230l9 -5 2 4 -8 5zM328 509l7 -5 3 4 -7 5zM527 516l5 -3 3 5 -5 3zM613 446l8 -6 3 5 -8 5zM240 297l4 -3 3 4 -5 3zM371 559l5 -4 2 5 -5 3zM570 529l7 -5 3 4 -8 5zM436 88l7 -4 3 5 -6 4zM140 211l8 -5 4 6 -8 5zM114 173l6 -3 3 4 -6 4zM327 139l7 -5 2 3 -7 5zM370 683l4 -3 3 5 -4 3zM627 365l6 -4 4 6 -7 4zM314 296l8 -5 2 4 -8 5zM220 384l5 -3 3 5 -4 3zM258 107l9 -5 3 5 -9 6zM418 580l5 -4 4 5 -6 4zM276 578l8 -5 3 4 -9 5zM309 72l8 -5 2 4 -7 5zM629 570l9 -5 3 4 -9 6zM643 566l8 -5 3 6 -7 5zM670 366l6 -4 3 5 -6 4zM478 552l5 -3 3 4 -5 4zM451 278l5 -3 4 5 -5 3zM424 450l9 -6 3 5 -9 6zM335 112l9 -6 4 6 -9 6zM543 136l4 -3 4 5 -5 3zM360 201l5 -4 3 4 -6 3zM750 702l9 -6 2 3 -9 6zM396 130l7 -4 3 5 -6 4zM440 141l5 -3 3 5 -4 3zM635 428l7 -5 3 5 -7 5zM233 170l5 -4 3 5 -6 3zM442 8l6 -4 3 5 -6 4zM419 344l6 -4 4 6 -6 4zM77 158l9 -5 3 5 -9 6zM313 551l8 -6 3 5 -8 5zM339 322l8 -5 3 4 -8 5zM434 407l5 -3 4 6 -5 3zM389 364l8 -5 2 4 -7 5zM620 696l8 -6 3 4 -9 6zM216 360l7 -5 2 4 -6 4zM595 216l8 -5 2 3 -8 5zM504 138l7 -4 3 4 -7 5zM582 227l8 -5 2 4 -7 5zM197 70l9 -5 3 4 -9 6zM365 557l6 -4 2 3 -5 4zM264 172l5 -4 2 4 -5 4zM255 110l8 -5 2 4 -8 5zM333 588l8 -5 2 3 -8 5zM443 258l6 -4 3 5 -5 3zM288 462l8 -5 2 4 -7 5zM185 594l6 -4 3 5 -6 4zM556 500l5 -3 2 3 -5 3zM147 213l6 -4 2 3 -6 4zM32 171l5 -4 3 6 -5 3zM693 525l5 -3 3 5 -5 3zM482 382l6 -3 2 3 -6 3zM224 620l5 -3 3 5 -5 3zM337 79l6 -4 3 5 -6 3zM485 441l9 -6 3 5 -9 6zM561 228l5 -3 4 5 -5 4zM276 386l6 -4 4 6 -6 4zM426 244l5 -3 2 3 -5 4zM137 388l5 -3 4 5 -6 3zM612 665l5 -2 2 4 -4 2zM377 614l8 -5 2 3 -8 5zM295 614l7 -5 2 3 -7 5zM263 387l6 -4 2 3 -6 4zM363 258l5 -4 3 4 -6 3zM56 125l7 -5 3 6 -7 5zM452 56l8 -6 4 6 -8 5zM494 542l6 -3 4 5 -6 4zM108 124l8 -5 4 6 -8 5zM574 450l5 -4 4 6 -5 4zM428 110l8 -5 4 5 -9 6zM69 119l8 -5 2 4 -7 5zM237 295l9 -6 2 4 -9 6zM645 358l7 -5 4 6 -7 4zM475 521l6 -4 3 5 -6 4zM356 507l7 -5 2 4 -6 5zM398 367l7 -4 3 5 -7 5zM631 574l4 -3 3 3 -5 3zM514 258l7 -4 2 3 -7 5zM431 40l5 -4 3 5 -5 4zM426 226l6 -3 3 5 -6 4zM294 23l6 -4 3 5 -6 4zM754 660l7 -5 3 4 -7 5zM258 664l7 -5 2 3 -7 5zM501 114l5 -3 4 5 -5 4zM374 376l5 -3 3 4 -5 3zM404 356l6 -4 2 4 -6 3zM367 555l7 -4 3 5 -7 4zM197 21l6 -4 3 5 -6 4zM513 106l6 -3 2 3 -6 4zM326 579l8 -5 4 5 -9 6zM457 321l6 -4 2 4 -6 4zM640 435l5 -4 2 3 -5 4zM392 476l9 -6 3 4 -9 6zM565 450l6 -4 3 5 -6 4zM127 219l4 -3 3 3 -5 3zM146 226l7 -4 2 3 -7 4zM294 272l10 -6 2 4 -9 5zM633 448l8 -5 2 4 -8 5zM204 255l9 -5 3 4 -9 6zM426 249l9 -5 2 3 -9 6zM255 276l8 -5 3 4 -8 5zM243 3l7 -5 3 4 -8 4zM441 281l7 -5 3 5 -7 4zM655 699l8 -6 4 6 -8 6zM256 133l6 -4 3 4 -7 4zM329 140l8 -5 2 3 -8 5zM670 341l7 -5 2 4 -7 4zM737 497l5 -3 4 5 -5 4zM523 420l7 -4 2 4 -6 5zM333 496l5 -4 3 4 -6 4zM186 179l4 -2 3 5 -4 2zM734 482l6 -4 3 5 -5 4zM212 268l8 -5 3 3 -8 6zM353 658l7 -4 2 3 -7 4zM341 222l5 -3 3 5 -5 3zM302 475l5 -2 3 5 -4 3zM342 160l9 -6 3 4 -9 6zM258 469l4 -3 3 4 -4 3zM341 395l8 -5 2 4 -8 5zM393 409l8 -5 2 3 -8 6zM430 128l7 -5 3 4 -8 5zM434 250l8 -5 3 4 -8 5zM362 13l8 -5 2 4 -8 5zM550 191l4 -3 2 3 -4 3zM151 219l7 -5 3 4 -8 5zM624 503l9 -6 3 6 -9 5zM364 178l7 -5 2 4 -7 5zM467 73l6 -4 3 5 -6 4zM49 115l7 -5 3 6 -7 4zM642 575l6 -4 3 4 -6 4zM749 511l8 -5 4 5 -8 5zM346 282l8 -5 4 5 -8 6zM363 293l9 -6 3 5 -9 6zM394 577l8 -6 2 4 -8 6zM325 267l7 -5 4 5 -8 6zM688 387l8 -5 3 5 -8 5zM566 166l6 -4 2 5 -5 3zM499 517l9 -6 3 4 -9 6zM644 555l7 -4 3 4 -7 5zM406 193l6 -4 3 5 -6 4zM142 43l8 -6 2 4 -8 5zM754 495l6 -3 2 4 -5 3zM726 671l8 -5 3 4 -8 6zM372 506l5 -3 4 4 -6 4zM408 519l5 -3 3 5 -5 3zM543 511l6 -4 3 6 -5 4zM87 131l7 -5 2 4 -7 5zM290 385l5 -4 2 3 -6 4zM270 424l6 -4 3 6 -5 3zM150 125l5 -4 4 6 -5 3zM666 361l6 -4 4 6 -6 4zM629 688l4 -3 4 5 -5 3zM115 105l7 -5 4 5 -7 5zM242 639l8 -5 2 4 -7 5zM143 470l6 -5 4 6 -7 4zM240 38l7 -5 4 5 -8 5zM287 471l4 -3 2 4 -4 2zM364 513l5 -4 3 5 -6 3zM493 475l8 -5 3 5 -7 5zM394 471l9 -6 3 5 -9 6zM642 609l7 -4 2 4 -6 4zM114 197l9 -5 3 5 -8 6zM299 418l6 -3 2 3 -6 3zM284 7l6 -4 4 5 -6 4zM89 149l6 -4 2 5 -5 3zM362 692l4 -3 3 4 -5 3zM471 547l8 -6 3 5 -9 5zM332 696l5 -3 2 5 -4 3zM65 259l6 -4 3 4 -6 4zM267 236l8 -5 3 4 -8 5zM252 294l9 -6 3 4 -9 6zM510 349l7 -4 2 4 -6 4zM97 340l8 -5 2 4 -7 4zM164 310l7 -4 4 5 -8 5zM402 604l5 -3 3 6 -5 3zM472 85l5 -4 2 4 -5 3zM595 319l5 -3 3 5 -5 4zM297 156l6 -3 3 5 -5 4zM292 104l5 -3 3 4 -5 4zM369 175l5 -3 3 4 -6 4zM327 540l9 -5 3 4 -9 5zM181 392l9 -5 2 3 -8 6zM287 304l6 -3 3 6 -5 3zM312 23l7 -4 3 5 -6 5zM93 332l5 -3 2 4 -5 2zM741 627l9 -6 4 5 -9 6zM613 390l5 -2 3 5 -5 3zM280 489l8 -5 3 5 -8 5zM603 592l8 -6 4 5 -9 6zM247 596l5 -4 3 4 -6 4zM379 172l6 -4 4 6 -6 4zM244 652l6 -4 3 3 -6 4zM237 77l7 -5 3 5 -7 5zM310 597l8 -5 3 4 -8 6zM240 427l10 -6 2 4 -9 6zM352 572l5 -3 2 3 -5 4zM289 205l6 -4 3 5 -6 4zM192 72l7 -4 3 5 -7 4zM433 625l9 -5 3 4 -9 6zM370 314l9 -6 3 5 -9 6zM225 47l7 -5 3 5 -7 5zM507 375l8 -5 2 3 -7 5zM657 550l8 -5 2 4 -8 5zM147 218l6 -3 2 3 -6 4zM230 10l9 -5 2 4 -9 5zM85 258l5 -3 2 3 -4 3zM529 167l7 -5 3 6 -7 4zM309 526l4 -3 4 5 -4 3zM387 694l5 -3 2 3 -5 3zM465 70l7 -4 3 4 -7 4zM88 160l6 -4 3 5 -6 4zM331 570l5 -3 3 5 -5 3zM114 183l6 -4 4 6 -6 4zM158 233l6 -4 4 5 -7 4zM269 490l7 -4 3 5 -7 4zM192 149l9 -5 3 4 -9 6zM570 238l4 -3 4 6 -4 3zM262 130l6 -4 4 6 -7 4zM120 442l8 -5 3 5 -8 5zM601 286l5 -3 3 5 -5 3zM98 116l6 -4 2 3 -6 4zM404 554l7 -5 2 3 -7 5zM576 487l6 -4 3 4 -6 4zM628 324l9 -5 2 4 -8 5zM302 605l8 -5 3 4 -8 6zM682 525l6 -4 3 4 -6 4zM550 580l5 -3 2 3 -4 3zM520 501l7 -4 3 4 -7 5zM262 418l5 -3 3 6 -4 3zM279 700l7 -4 4 6 -7 4zM637 287l7 -5 4 5 -7 5zM453 255l4 -3 3 5 -4 2zM155 54l7 -5 2 3 -7 5zM413 630l9 -6 3 5 -9 6zM324 19l7 -5 3 5 -7 5zM240 620l7 -4 2 3 -7 4zM460 567l5 -3 4 5 -5 3zM628 473l8 -5 2 4 -7 5zM230 596l8 -5 3 4 -8 5zM625 434l5 -3 3 4 -5 4zM199 104l8 -5 3 6 -7 5zM288 144l4 -3 3 4 -5 2zM634 519l6 -4 2 3 -6 4zM193 404l8 -5 2 3 -7 5zM262 623l8 -5 2 3 -8 5zM268 18l6 -4 3 4 -6 5zM0 93l5 -4 3 4 -5 4zM403 408l5 -3 3 5 -4 3zM484 200l9 -6 3 4 -9 6zM201 343l9 -6 2 4 -9 5zM615 332l8 -6 3 4 -9 6zM318 649l6 -4 3 6 -5 3zM166 458l5 -3 2 4 -5 3zM325 406l9 -6 3 5 -9 6zM357 500l4 -3 3 4 -4 3zM452 576l6 -4 3 4 -6 5zM187 587l9 -5 3 5 -8 6zM515 411l5 -3 2 3 -4 3zM418 645l6 -5 3 5 -6 4zM350 658l6 -4 2 3 -7 4zM468 339l7 -5 3 4 -7 5zM688 458l5 -3 3 5 -5 3zM268 482l7 -5 3 5 -7 4zM623 566l7 -5 3 5 -7 5zM252 229l8 -6 4 5 -9 6zM302 365l6 -4 3 6 -5 3zM264 505l4 -2 3 4 -4 3zM108 128l5 -3 3 5 -5 3zM434 615l5 -4 3 5 -5 3zM395 574l5 -3 2 3 -5 4zM566 566l6 -4 4 5 -7 5zM549 314l6 -4 3 6 -5 4zM315 157l6 -5 4 5 -7 5zM501 345l4 -3 4 6 -5 3zM390 29l5 -4 3 5 -5 3zM117 220l8 -6 4 6 -9 5zM677 397l7 -4 2 3 -6 5zM193 144l6 -4 3 6 -5 3zM439 485l6 -4 2 4 -6 3zM588 472l5 -3 2 4 -4 3zM388 551l8 -5 2 4 -8 5zM368 207l9 -6 4 5 -10 6zM633 530l9 -5 2 3 -8 6zM734 525l9 -6 3 5 -8 6zM179 28l7 -4 2 3 -7 4zM383 536l5 -3 2 3 -5 4zM311 235l6 -4 3 4 -7 4zM90 362l8 -5 3 5 -8 5zM512 283l5 -3 2 5 -4 3zM267 686l8 -5 3 5 -8 5zM380 529l8 -5 3 5 -8 5zM538 141l7 -5 2 3 -7 5zM518 125l7 -4 4 5 -7 5zM353 87l4 -3 3 4 -5 3zM679 630l8 -5 3 4 -8 5zM414 93l6 -5 2 3 -6 5zM99 305l5 -3 3 4 -5 3zM317 8l6 -4 3 4 -6 4zM373 74l8 -5 2 4 -8 6zM141 336l9 -6 2 4 -9 6zM597 237l9 -5 2 3 -9 5zM435 418l10 -5 3 5 -9 6zM618 307l6 -5 3 5 -6 4zM589 620l5 -4 4 6 -6 3zM585 232l10 -6 3 5 -9 6zM695 556l10 -6 3 5 -9 6zM365 589l5 -4 3 4 -6 3zM245 571l9 -6 3 4 -10 6zM402 271l4 -2 3 4 -5 3zM285 419l7 -4 4 5 -7 4zM628 624l6 -4 4 6 -6 4zM549 584l6 -4 3 4 -6 4zM337 450l5 -4 2 3 -5 4zM434 130l7 -5 2 4 -7 5zM558 253l8 -5 4 5 -8 5zM440 359l7 -5 3 4 -7 5zM266 554l6 -4 2 5 -5 3zM437 542l5 -3 2 4 -4 4zM489 476l5 -4 2 4 -5 3zM244 627l9 -6 3 5 -8 6zM399 178l5 -3 2 3 -5 3zM738 486l7 -5 2 4 -7 4zM207 340l7 -4 4 6 -7 4zM669 527l7 -5 2 3 -7 5zM491 82l7 -4 3 4 -8 4zM103 332l5 -3 3 5 -4 3zM419 418l5 -3 3 4 -5 3zM528 395l8 -5 4 6 -8 5zM517 60l6 -3 2 3 -6 3zM298 694l9 -5 2 4 -8 5zM430 162l6 -4 3 5 -6 4zM410 287l7 -5 4 6 -8 5zM664 421l8 -5 3 4 -8 5zM520 400l9 -6 2 4 -8 5zM352 552l4 -3 4 5 -5 3zM202 268l7 -4 2 4 -6 4zM517 78l7 -4 3 6 -6 4zM130 380l6 -4 3 6 -5 3zM403 231l5 -3 3 5 -4 3zM477 359l6 -5 4 6 -6 4zM727 694l8 -5 2 4 -8 5zM382 680l8 -6 3 4 -9 6zM419 520l5 -3 2 3 -5 3zM478 283l8 -5 3 5 -8 5zM444 102l7 -4 3 4 -7 5zM283 487l8 -6 3 5 -8 5zM325 652l9 -6 3 4 -10 6zM307 498l5 -3 3 4 -6 3zM629 297l6 -5 3 4 -7 4zM220 74l7 -5 3 4 -7 6zM426 95l7 -4 3 5 -6 4zM149 33l7 -5 2 4 -7 5zM213 640l5 -3 3 3 -6 4zM337 117l5 -4 4 5 -6 4zM135 184l5 -3 3 4 -5 4zM394 360l6 -4 2 3 -6 4zM324 477l8 -5 4 6 -8 5zM460 517l7 -5 3 4 -8 5zM432 72l7 -5 4 5 -8 5zM650 614l7 -5 2 3 -7 5zM160 48l8 -6 3 5 -8 6zM354 612l5 -4 3 5 -5 3zM323 646l8 -6 3 4 -9 6zM519 310l7 -4 2 3 -7 5zM281 192l8 -6 4 5 -9 6zM471 240l8 -4 2 3 -8 5zM176 563l7 -4 3 4 -8 5zM288 319l9 -6 3 4 -9 6zM736 506l7 -4 2 4 -6 4zM424 82l7 -4 2 3 -6 5zM158 6l7 -5 3 5 -7 5zM387 317l9 -6 3 5 -9 6zM331 50l7 -5 4 6 -8 4zM290 467l5 -2 2 3 -5 3zM479 97l5 -2 3 5 -4 3zM55 201l7 -5 3 5 -7 4zM426 612l5 -3 3 4 -5 3zM449 278l9 -6 2 4 -9 6zM12 112l9 -5 4 5 -9 6zM542 171l6 -4 4 5 -7 4zM191 371l9 -6 2 3 -9 6zM635 560l9 -6 3 5 -9 6zM324 121l5 -3 3 4 -5 3zM437 606l8 -5 3 4 -8 5zM95 141l5 -4 4 5 -6 4zM178 590l5 -3 4 5 -5 3zM693 521l4 -3 4 5 -5 3zM178 33l5 -3 3 5 -5 3zM16 151l8 -5 2 3 -8 5zM338 549l9 -6 3 6 -8 6zM273 556l6 -3 3 5 -5 4zM547 581l5 -3 3 4 -5 3zM579 473l8 -5 3 5 -7 5zM374 3l6 -4 3 5 -6 4zM333 479l5 -3 3 5 -5 3zM293 205l7 -5 4 6 -7 4zM677 585l6 -4 3 5 -6 3zM280 243l8 -5 3 4 -8 5zM418 560l7 -4 3 4 -7 4zM590 544l8 -5 3 5 -8 5zM125 40l8 -5 2 3 -8 5zM388 281l7 -4 2 4 -6 4zM478 483l8 -5 2 5 -7 4zM692 374l7 -4 2 4 -7 4zM453 191l5 -4 2 4 -5 3zM646 307l9 -5 2 4 -8 5zM723 521l9 -6 3 4 -9 6zM501 168l6 -4 2 5 -5 3zM241 38l5 -4 2 4 -5 3zM157 30l7 -5 3 4 -8 5zM130 191l9 -6 4 6 -9 6zM464 302l6 -4 2 4 -5 4zM614 268l8 -5 3 5 -8 5zM480 33l5 -3 3 5 -4 3zM187 473l5 -4 2 3 -5 4zM229 651l9 -6 4 5 -10 6zM649 314l9 -5 2 4 -8 6zM333 585l5 -3 2 3 -5 4zM148 461l8 -6 3 4 -9 5zM383 694l4 -2 3 4 -5 3zM323 406l6 -4 3 4 -7 4zM518 310l7 -4 2 3 -6 4zM6 107l7 -5 3 4 -7 5zM121 469l9 -6 3 5 -9 6zM236 626l6 -4 3 5 -6 4zM103 145l7 -5 3 5 -7 4zM151 27l10 -6 3 6 -9 6zM636 657l5 -4 3 5 -5 3zM747 558l6 -4 3 5 -6 4zM420 160l6 -4 3 6 -6 3zM747 662l8 -5 2 4 -7 5zM512 183l9 -6 2 3 -9 6zM674 539l6 -5 3 4 -7 4zM395 132l7 -4 2 3 -6 5zM283 204l8 -5 3 5 -7 5zM490 373l7 -5 3 5 -7 5zM399 206l6 -4 2 4 -6 3zM332 305l4 -3 3 5 -4 2zM707 404l6 -4 2 4 -6 4zM299 500l7 -4 2 3 -6 4zM253 177l9 -6 2 4 -9 5zM590 209l4 -3 3 4 -4 3zM479 144l6 -4 3 4 -7 5zM580 487l6 -4 4 6 -6 4zM639 571l8 -5 2 3 -8 6zM246 178l7 -5 3 4 -7 5zM367 37l8 -5 2 4 -7 5zM324 527l7 -4 2 3 -7 5zM366 385l4 -3 2 4 -4 3zM647 367l4 -3 3 4 -5 3zM324 506l8 -5 2 3 -8 5zM6 105l5 -3 2 4 -4 3zM409 645l8 -5 3 4 -8 5zM674 414l5 -3 3 5 -5 3zM434 406l7 -4 3 4 -7 4zM622 597l5 -4 3 5 -5 3zM357 301l8 -5 2 3 -7 5zM466 530l10 -6 3 6 -9 6zM421 425l7 -4 3 5 -7 4zM492 0l7 -4 3 5 -6 5zM642 320l8 -5 4 5 -9 5zM222 593l9 -6 3 4 -10 6zM265 315l5 -3 3 5 -5 4zM142 51l8 -5 3 4 -8 6zM173 155l6 -4 2 4 -6 4zM239 34l5 -3 4 5 -6 4zM133 24l7 -4 3 4 -7 4zM37 178l7 -5 2 3 -7 5zM509 284l7 -5 2 4 -7 4zM212 392l8 -5 3 5 -8 5zM218 146l7 -4 2 3 -7 4zM333 149l9 -6 3 6 -8 5zM361 18l5 -4 3 4 -6 4zM239 563l5 -4 3 5 -5 3zM369 499l6 -4 3 5 -6 4zM287 614l9 -6 4 5 -9 6zM213 62l7 -5 2 3 -7 5zM452 148l9 -6 3 5 -9 6zM624 504l8 -5 3 5 -8 5zM646 303l5 -3 2 4 -4 3zM222 639l9 -5 3 5 -8 6zM558 214l9 -5 4 6 -9 5zM372 284l7 -4 3 4 -7 5zM614 487l8 -5 3 5 -8 6zM38 116l7 -5 3 5 -7 5zM409 438l6 -3 3 4 -6 3zM318 82l8 -4 2 3 -7 5zM20 155l6 -4 4 6 -6 4zM394 185l8 -5 2 3 -9 5zM657 384l9 -5 3 3 -9 6zM56 196l7 -4 3 6 -6 4zM181 176l8 -5 3 5 -8 5zM700 576l7 -4 2 3 -7 5zM657 380l9 -6 2 3 -9 6zM271 501l6 -4 3 5 -6 3zM258 293l5 -3 3 4 -5 3zM243 356l9 -6 3 6 -8 5zM669 533l8 -5 3 6 -7 5zM259 307l6 -4 3 4 -7 4zM738 686l7 -4 3 5 -6 4zM405 480l8 -5 2 4 -8 5zM203 9l9 -6 4 5 -9 6zM636 395l9 -6 3 5 -8 6zM335 534l6 -4 3 5 -6 4zM446 127l6 -4 2 4 -5 4zM552 195l4 -2 3 4 -4 3zM407 64l5 -4 4 5 -6 4zM534 149l9 -5 4 5 -9 6zM411 530l8 -6 3 5 -8 6zM335 130l5 -3 3 6 -4 3zM396 345l7 -4 2 3 -7 5zM433 131l5 -4 2 3 -5 4zM86 163l4 -3 3 5 -4 3zM176 443l8 -5 3 5 -8 5zM293 662l8 -5 3 4 -8 6zM292 548l7 -4 2 2 -8 5zM242 462l6 -5 4 6 -6 4zM428 225l8 -5 3 4 -8 6zM658 410l7 -4 2 3 -7 5zM270 184l8 -5 2 4 -7 5zM268 163l8 -6 3 5 -8 5zM532 131l6 -4 4 5 -7 4zM322 458l5 -3 3 5 -4 3zM348 175l5 -4 3 4 -6 4zM399 335l6 -4 2 4 -5 4zM360 242l6 -4 4 6 -6 4zM266 425l5 -3 3 4 -5 3zM275 353l7 -4 4 5 -8 5zM655 571l5 -3 4 5 -6 4zM380 625l8 -5 3 5 -8 5zM468 156l8 -5 3 5 -8 5zM281 149l5 -3 2 3 -4 3zM513 537l6 -3 2 3 -6 4zM171 439l6 -4 2 3 -6 4zM447 475l9 -6 2 4 -9 6zM201 354l7 -5 4 5 -8 5zM330 263l8 -4 2 3 -7 5zM315 81l7 -5 3 4 -8 5zM427 292l8 -4 3 4 -8 5zM165 476l7 -5 4 6 -8 5zM587 438l7 -4 2 3 -7 4zM422 168l7 -5 3 4 -7 5zM285 259l9 -6 3 6 -8 5zM349 155l4 -3 4 5 -5 4zM127 372l4 -3 3 5 -5 2zM751 495l6 -4 3 4 -7 4zM323 202l7 -4 3 5 -7 4zM637 628l7 -5 4 5 -8 5zM743 550l9 -5 4 5 -9 6zM259 378l8 -5 2 3 -7 5zM356 655l9 -6 3 6 -8 5zM376 354l8 -6 2 4 -8 5zM182 305l8 -5 2 4 -8 5zM413 584l6 -4 3 5 -5 4zM169 341l9 -6 3 4 -9 6zM291 493l6 -3 3 6 -5 3zM222 343l9 -6 3 5 -9 6zM607 558l6 -4 3 5 -6 4zM643 663l7 -4 4 5 -7 4zM297 651l8 -5 3 5 -8 5zM104 146l8 -5 4 5 -8 6zM73 147l7 -4 3 5 -6 4zM558 160l6 -4 3 6 -6 4zM356 646l6 -4 4 6 -6 4zM144 443l6 -3 2 3 -6 4zM284 306l6 -4 4 5 -6 4zM68 177l8 -6 3 5 -8 5zM663 691l6 -4 3 3 -7 5zM355 164l9 -5 2 3 -9 5zM161 159l6 -3 3 4 -6 3zM145 111l6 -4 3 4 -6 4zM242 635l8 -6 3 5 -8 5zM410 285l6 -4 2 4 -6 4zM176 19l5 -4 2 4 -5 3zM273 303l5 -3 4 6 -5 3zM484 246l7 -5 3 4 -7 5zM403 5l7 -5 4 6 -8 5zM327 416l7 -5 4 6 -8 5zM588 356l7 -5 4 6 -7 4zM468 488l7 -4 3 5 -7 4zM349 628l5 -4 3 5 -5 3zM380 678l7 -4 3 4 -7 4zM707 536l7 -5 2 3 -7 5zM226 163l7 -5 4 6 -7 4zM40 204l8 -5 3 5 -8 5zM381 604l6 -3 3 5 -5 4zM399 225l5 -3 2 3 -5 4zM717 494l9 -6 3 4 -9 6zM211 142l9 -6 3 5 -9 5zM390 111l7 -4 2 3 -6 5zM207 599l6 -4 3 4 -6 4zM555 279l5 -4 2 4 -5 3zM393 573l9 -6 4 6 -9 6zM655 322l6 -3 3 4 -6 4zM374 503l6 -4 3 5 -6 4zM216 9l9 -5 2 3 -8 6zM259 212l8 -5 3 5 -8 6zM275 498l6 -4 3 6 -5 4zM156 8l6 -4 2 3 -6 4zM63 258l5 -3 3 3 -6 4zM590 470l5 -4 2 3 -5 4zM200 367l6 -4 3 4 -6 4zM220 459l8 -6 4 6 -9 5zM157 35l9 -6 2 4 -9 6zM579 205l8 -5 2 3 -8 5zM213 572l8 -5 2 3 -8 5zM601 481l6 -4 2 3 -6 4zM288 478l8 -5 3 5 -7 5zM694 426l5 -3 3 4 -5 3zM370 455l8 -6 3 5 -8 6zM409 397l7 -5 2 4 -7 4zM267 193l6 -4 4 5 -6 4zM188 147l7 -5 3 3 -8 5zM360 652l5 -3 4 5 -6 3zM300 255l5 -4 2 4 -4 3zM322 663l8 -5 2 4 -8 5zM209 118l9 -6 3 4 -9 6zM300 455l6 -3 2 3 -5 4zM539 418l6 -4 4 6 -6 4zM211 305l7 -5 4 5 -8 5zM230 372l6 -4 3 4 -6 5zM474 77l5 -4 2 4 -5 4zM633 456l7 -4 2 4 -6 4zM262 482l5 -2 3 4 -5 3zM107 295l5 -3 4 6 -5 3zM525 512l9 -5 3 5 -8 6zM344 423l6 -4 3 5 -6 4zM405 230l8 -6 2 4 -8 5zM406 201l5 -3 3 4 -6 3zM263 493l8 -5 3 5 -8 5zM431 184l7 -4 2 3 -7 4zM584 485l8 -5 2 3 -8 5zM354 431l6 -4 2 4 -6 3zM512 199l5 -3 3 5 -4 3zM472 520l7 -4 2 3 -7 5zM120 345l7 -5 3 5 -7 4zM134 392l6 -4 3 6 -6 4zM309 195l9 -6 3 5 -9 5zM348 253l6 -4 2 3 -6 4zM615 449l9 -5 2 3 -9 6zM409 408l7 -5 4 6 -7 5zM644 356l8 -5 4 5 -8 5zM675 604l8 -5 3 5 -7 5zM368 364l6 -4 4 6 -6 4zM340 434l9 -6 2 3 -9 6zM64 154l9 -6 2 4 -9 5zM590 528l7 -5 3 5 -7 4zM192 462l8 -6 3 5 -8 5zM487 35l9 -6 3 5 -9 6zM332 215l6 -4 2 4 -6 4zM506 267l8 -5 4 6 -9 5zM59 158l8 -6 4 5 -9 6zM684 536l7 -5 3 5 -7 5zM255 51l9 -6 3 5 -9 5zM380 662l5 -3 3 3 -6 3zM616 480l5 -4 3 5 -5 4zM687 680l9 -5 2 3 -9 5zM631 608l7 -4 4 5 -7 5zM462 451l4 -3 4 6 -4 3zM330 567l9 -6 3 4 -9 6zM409 200l8 -6 3 5 -8 5zM204 344l6 -4 3 5 -6 4zM359 289l8 -5 3 4 -8 5zM234 452l8 -6 3 4 -8 6zM576 565l9 -5 2 4 -8 6zM208 372l4 -2 4 5 -4 3zM256 104l5 -3 2 3 -5 3zM276 687l4 -2 4 5 -5 3zM447 419l5 -3 3 5 -5 3zM192 139l6 -5 4 6 -7 4zM416 52l8 -5 3 3 -9 6zM638 287l6 -4 4 5 -6 4zM271 657l7 -4 4 5 -7 5zM514 59l6 -4 3 4 -6 4zM399 308l5 -4 4 6 -6 3zM212 74l9 -5 3 5 -8 5zM698 449l7 -5 3 3 -8 5zM535 554l6 -4 2 3 -6 4zM475 152l6 -4 3 4 -6 4zM460 51l6 -4 3 4 -7 4zM430 78l7 -5 4 6 -7 4zM151 397l8 -6 4 6 -8 5zM391 295l6 -3 2 4 -6 4zM534 469l4 -3 3 4 -4 3zM89 347l5 -3 3 3 -5 4zM283 208l5 -3 4 5 -5 3zM492 272l5 -3 2 3 -4 3zM342 127l5 -3 3 5 -5 3zM284 171l7 -5 3 4 -8 5zM654 378l8 -5 4 5 -9 6zM131 37l6 -4 3 4 -7 4zM236 190l7 -5 4 6 -8 5zM257 401l9 -6 2 4 -9 6zM370 530l7 -5 2 4 -6 4zM155 368l5 -3 3 5 -4 3zM336 520l7 -5 4 6 -8 5zM71 251l7 -5 4 6 -8 4zM556 205l9 -6 2 3 -9 6zM222 402l8 -5 3 4 -8 5zM100 206l5 -3 3 4 -5 3zM321 399l5 -3 3 3 -6 4zM358 613l7 -5 2 3 -7 5zM751 551l7 -4 2 4 -6 4zM218 307l5 -3 3 3 -5 3zM105 130l9 -6 3 3 -10 6zM147 285l5 -4 3 6 -5 3zM679 664l7 -4 2 3 -7 4zM627 422l9 -6 3 5 -9 6zM241 68l6 -5 2 3 -6 5zM214 593l9 -5 3 5 -9 6zM254 434l9 -6 2 4 -9 5zM488 113l4 -3 2 4 -4 3zM395 566l6 -4 3 5 -6 4zM466 566l8 -6 3 5 -9 5zM189 147l7 -5 3 4 -7 5zM252 493l5 -3 2 3 -5 4zM321 265l7 -4 3 5 -6 4zM212 448l4 -3 4 5 -5 3zM41 210l8 -5 3 5 -8 5zM259 183l8 -5 2 4 -8 5zM576 217l5 -3 3 4 -5 3zM305 419l6 -4 2 3 -6 4zM410 399l4 -3 3 5 -4 3zM143 186l7 -4 3 4 -7 4zM522 197l9 -6 2 4 -9 6zM683 441l9 -6 3 5 -9 6zM334 133l6 -5 4 6 -7 4zM440 0l7 -4 3 5 -7 4zM586 435l5 -3 4 5 -6 4zM419 29l9 -6 3 6 -9 6zM339 507l5 -3 2 4 -5 3zM316 160l7 -4 2 3 -7 4zM209 27l8 -4 2 3 -8 5zM138 111l7 -4 2 3 -7 4zM688 641l5 -3 3 5 -5 3zM230 598l7 -5 3 5 -7 5zM398 586l5 -3 4 5 -5 3zM594 405l7 -5 3 4 -7 4zM345 176l4 -3 4 6 -5 3zM193 279l5 -3 3 5 -5 3zM141 52l4 -2 3 3 -5 3zM444 252l7 -5 4 6 -7 4zM326 570l4 -2 4 5 -5 3zM114 235l8 -5 3 4 -8 5zM441 580l7 -4 3 4 -7 4zM254 328l7 -5 4 6 -7 5zM591 523l6 -4 2 3 -6 4zM505 47l6 -4 3 3 -6 4zM464 49l7 -4 2 3 -6 5zM718 672l6 -3 2 4 -5 3zM601 499l5 -4 3 5 -5 4zM402 268l4 -3 3 4 -5 3zM524 296l8 -4 3 4 -8 5zM466 509l5 -3 2 3 -5 3zM547 462l6 -4 3 5 -6 4zM212 362l6 -4 4 6 -7 4zM103 61l9 -5 3 4 -9 5zM678 584l9 -6 2 4 -9 6zM307 608l4 -3 4 6 -5 3zM344 646l8 -5 2 4 -7 5zM558 411l8 -6 4 5 -9 6zM548 148l7 -5 2 4 -7 5zM208 375l6 -4 3 3 -7 5zM666 598l9 -6 2 4 -8 6zM179 161l8 -5 3 5 -8 5zM731 692l5 -3 3 4 -6 3zM536 412l6 -5 4 6 -7 4zM656 422l7 -4 3 4 -7 4zM378 118l9 -6 3 4 -9 6zM287 363l6 -4 2 4 -6 4zM531 539l9 -6 2 5 -8 5zM161 374l5 -4 3 5 -5 4zM420 31l8 -6 3 5 -8 6zM444 38l8 -6 3 5 -8 6zM750 498l8 -6 3 5 -8 5zM745 589l7 -5 2 4 -7 5zM645 693l9 -6 3 5 -9 6zM395 198l6 -4 4 4 -7 5zM595 441l5 -3 2 3 -5 3zM374 82l5 -3 3 4 -5 3zM380 306l5 -3 4 5 -5 3zM301 79l7 -4 2 4 -7 4zM720 446l5 -4 4 6 -5 3zM282 433l6 -4 2 4 -6 4zM216 606l6 -4 3 6 -6 4zM235 607l7 -5 4 6 -8 5zM326 362l9 -6 3 5 -9 6zM476 334l6 -3 2 4 -5 3zM115 487l9 -6 2 4 -9 6zM397 1l7 -5 2 4 -7 4zM596 227l6 -4 2 4 -6 3zM189 383l4 -3 2 4 -4 3zM600 307l5 -4 2 4 -5 4zM380 598l9 -6 3 5 -10 6zM285 194l9 -5 3 4 -8 6zM176 4l8 -5 4 6 -8 5zM248 65l6 -4 2 3 -6 4zM701 543l7 -5 2 4 -7 5zM308 187l8 -5 2 4 -8 5zM613 314l9 -6 2 4 -9 5zM83 288l8 -5 3 6 -8 5zM411 286l8 -5 3 4 -8 6zM139 126l5 -4 3 4 -6 3zM639 444l4 -2 4 5 -5 3zM640 617l9 -6 2 3 -9 6zM638 397l6 -4 2 4 -6 4zM543 231l5 -3 2 4 -5 3zM283 322l6 -4 4 5 -6 4zM315 535l6 -4 2 4 -5 4zM452 185l5 -3 2 3 -5 3zM658 598l6 -3 3 4 -6 4zM604 615l7 -5 2 4 -6 4zM197 482l4 -3 3 4 -5 3zM105 369l6 -4 2 4 -6 4zM415 236l7 -4 4 5 -7 5zM563 513l5 -3 4 5 -6 4zM112 118l6 -4 4 5 -7 4zM329 377l8 -5 3 3 -9 6zM247 395l5 -3 3 5 -4 3zM273 389l8 -5 3 5 -8 4zM435 385l7 -5 3 5 -7 5zM490 506l7 -4 2 3 -7 5zM163 562l8 -5 3 5 -8 5zM353 19l6 -3 3 6 -5 3zM488 80l9 -6 3 6 -8 5zM512 531l8 -5 3 5 -8 5zM620 538l6 -4 3 4 -6 4zM312 277l7 -4 3 5 -6 5zM600 607l4 -3 4 6 -5 2zM421 18l7 -4 4 5 -8 5zM542 325l5 -3 2 4 -4 3zM388 183l6 -4 3 6 -5 3zM426 74l5 -3 3 5 -5 3zM624 438l6 -3 3 4 -6 4zM105 425l7 -5 4 6 -8 4zM94 365l9 -6 2 4 -9 6zM595 483l8 -6 3 4 -9 6zM639 515l5 -3 4 5 -5 3zM695 410l9 -6 3 5 -8 6zM155 557l5 -3 2 4 -5 3zM514 217l5 -3 3 4 -5 3zM638 398l5 -3 3 5 -4 4zM638 551l6 -4 3 5 -6 4zM373 619l5 -4 3 5 -5 3zM517 63l5 -3 3 5 -5 3zM258 130l6 -3 3 4 -6 4zM261 665l8 -5 3 4 -8 5zM261 536l7 -5 4 5 -7 5zM511 57l6 -3 3 5 -5 4zM329 462l7 -5 2 4 -7 5zM269 298l5 -3 2 4 -5 3zM533 368l5 -4 4 6 -5 3zM195 285l5 -3 3 6 -4 3zM644 563l7 -5 3 5 -7 4zM638 322l8 -5 3 4 -8 5zM306 426l8 -6 3 6 -8 5zM398 658l6 -3 4 5 -6 4zM154 149l7 -4 2 4 -7 4zM94 322l8 -5 3 5 -8 5zM68 257l4 -3 4 6 -5 3zM152 57l9 -6 4 6 -9 6zM443 87l7 -5 3 4 -8 6zM40 180l4 -3 2 3 -4 3zM389 136l6 -4 3 4 -7 5zM605 639l5 -4 4 6 -6 4zM364 642l6 -4 3 5 -6 4zM67 281l9 -6 4 6 -9 5zM178 162l8 -5 3 6 -7 5zM645 492l7 -5 3 4 -8 5zM491 201l5 -3 4 5 -5 4zM229 112l4 -3 3 5 -4 3zM245 433l8 -6 3 5 -8 6zM627 575l6 -4 3 6 -5 3zM507 52l7 -4 4 5 -8 5zM491 369l10 -5 2 3 -9 6zM385 172l7 -4 4 5 -7 5zM294 325l6 -5 3 5 -6 4zM92 359l6 -4 3 5 -6 4zM453 211l5 -4 3 5 -5 3zM624 502l7 -4 3 5 -7 4zM272 475l8 -6 3 4 -9 5zM500 340l6 -4 3 6 -5 3zM643 544l8 -5 3 6 -7 5zM182 464l8 -5 3 5 -8 5zM235 373l9 -6 2 4 -8 6zM460 471l7 -4 4 5 -7 5zM664 495l9 -6 3 5 -9 5zM510 266l8 -5 3 6 -7 4zM234 557l7 -4 3 5 -7 5zM290 258l9 -6 2 5 -9 6zM555 332l8 -4 2 3 -8 5zM468 80l7 -5 4 6 -8 5zM86 142l8 -6 4 6 -9 5zM190 266l9 -5 4 5 -9 6zM375 343l7 -4 2 3 -7 5zM651 678l4 -3 4 6 -5 3zM87 333l9 -6 3 4 -9 6zM380 203l8 -6 2 3 -8 6zM66 236l9 -5 3 5 -9 5zM240 66l6 -4 3 5 -6 3zM417 544l7 -5 3 4 -7 4zM621 586l6 -4 3 5 -6 4zM187 600l8 -6 3 6 -8 5zM536 466l9 -6 3 5 -9 5zM678 493l5 -4 3 4 -6 4zM565 558l5 -3 4 5 -5 3zM488 405l9 -6 3 5 -9 6zM714 497l6 -4 3 5 -6 4zM262 130l7 -5 4 6 -8 4zM241 65l6 -4 3 4 -6 4zM285 524l9 -6 3 4 -9 6zM265 511l8 -4 3 5 -7 5zM549 571l7 -4 3 5 -6 4zM219 415l6 -5 3 5 -6 4zM624 258l8 -5 3 5 -8 5zM427 284l8 -5 2 3 -8 5zM443 187l5 -3 2 4 -5 3zM433 99l9 -6 3 5 -9 6zM343 36l6 -4 4 5 -7 4zM281 144l5 -3 3 4 -5 3zM157 230l8 -5 3 5 -7 5zM581 248l6 -3 2 3 -6 4zM504 166l6 -3 2 3 -6 4zM624 684l4 -3 3 5 -4 3zM180 73l8 -6 3 6 -8 5zM301 296l6 -4 2 3 -6 4zM662 553l9 -5 3 4 -9 6zM683 396l5 -3 4 5 -5 4zM537 253l7 -4 4 5 -7 4zM381 297l7 -5 3 5 -7 4zM262 489l5 -3 4 6 -5 2zM131 432l6 -4 3 5 -6 3zM344 76l5 -3 3 4 -5 4zM451 594l7 -5 2 4 -7 4zM332 53l6 -4 3 4 -6 4zM229 315l5 -3 3 4 -6 3zM590 205l9 -5 3 5 -8 6zM355 20l7 -4 4 6 -7 4zM545 326l5 -3 3 5 -5 2zM280 540l8 -5 3 5 -7 5zM728 465l8 -5 4 5 -9 5zM301 185l5 -3 3 5 -5 3zM333 141l9 -5 2 4 -8 5zM124 357l7 -5 3 5 -7 5zM520 396l10 -6 2 4 -9 6zM443 98l8 -5 3 4 -8 5zM124 403l9 -5 2 3 -8 6zM414 168l8 -6 4 6 -9 5zM342 322l7 -4 3 5 -6 4zM593 255l4 -3 4 5 -5 3zM261 537l8 -5 2 3 -8 5zM613 565l6 -4 3 6 -5 3zM366 507l4 -3 3 3 -5 3zM228 615l8 -6 3 4 -8 5zM245 553l6 -4 3 4 -6 4zM202 577l8 -5 3 5 -8 5zM171 326l4 -3 4 5 -5 3zM156 425l4 -3 3 5 -4 2zM290 434l7 -5 2 4 -7 4zM345 490l5 -3 2 3 -4 3zM327 503l7 -4 2 3 -7 5zM465 561l8 -5 3 4 -8 6zM365 478l5 -3 3 5 -4 3zM138 368l8 -5 4 5 -8 5zM701 625l8 -5 2 3 -8 5zM748 514l7 -5 4 5 -8 5zM188 455l5 -4 4 6 -5 3zM137 367l8 -5 2 3 -8 5zM543 228l8 -5 2 3 -8 6zM260 21l5 -4 3 5 -5 3zM468 520l5 -4 2 3 -6 4zM214 10l9 -6 3 4 -9 6zM362 453l4 -3 4 4 -5 4zM54 200l4 -2 4 6 -5 2zM454 198l6 -4 2 4 -6 3zM706 480l8 -5 2 4 -7 5zM405 58l4 -3 4 6 -4 2zM62 268l6 -4 2 3 -6 4zM11 68l7 -4 2 4 -6 4zM544 153l6 -4 3 4 -6 4zM500 442l6 -4 3 4 -6 4zM541 484l6 -4 2 3 -6 5zM131 171l8 -5 2 4 -7 5zM268 537l6 -5 3 5 -6 4zM598 569l5 -3 2 4 -4 3zM150 239l6 -3 2 3 -6 4zM125 347l5 -3 3 5 -5 3zM348 175l6 -4 4 5 -6 4zM334 126l9 -6 3 6 -9 5zM673 652l7 -5 2 4 -6 5zM438 273l9 -6 2 3 -9 6zM406 67l8 -5 2 3 -8 6zM272 142l5 -3 4 5 -6 3zM306 645l8 -5 3 3 -9 6zM687 421l4 -3 4 6 -5 3zM500 157l5 -4 3 5 -5 4zM303 642l5 -3 2 4 -5 3zM366 632l8 -5 2 4 -7 5zM251 384l8 -5 3 6 -7 5zM320 311l6 -4 2 3 -6 4zM324 691l8 -5 4 6 -8 5zM117 480l6 -4 4 5 -6 4zM248 27l6 -4 2 3 -6 4zM614 517l6 -4 3 4 -6 4zM113 181l6 -4 2 3 -6 4zM20 131l8 -5 3 4 -8 6zM598 535l8 -6 2 4 -7 5zM112 211l5 -3 2 3 -5 3zM390 27l6 -3 4 5 -6 4zM421 28l4 -3 3 5 -4 3zM457 273l7 -4 3 4 -7 5zM687 465l5 -3 2 3 -5 3zM352 500l4 -3 3 4 -5 3zM569 239l9 -5 3 5 -9 5zM384 139l9 -6 2 4 -8 5zM493 84l7 -4 3 5 -6 4zM564 172l5 -4 4 6 -5 3zM665 480l5 -3 3 4 -5 4zM528 132l6 -4 3 4 -6 4zM426 480l5 -3 3 5 -4 3zM211 349l7 -4 2 3 -7 4zM477 142l9 -6 3 5 -9 6zM221 625l6 -4 2 4 -5 4zM354 129l9 -6 2 5 -8 5zM289 94l5 -3 3 5 -5 3zM207 370l7 -5 2 3 -7 5zM98 349l8 -6 3 5 -9 5zM240 185l5 -4 4 6 -6 4zM632 627l7 -4 3 4 -7 5zM227 63l8 -6 2 4 -8 5zM436 530l5 -3 3 5 -5 4zM403 30l5 -4 3 4 -6 4zM441 267l9 -5 3 5 -8 5zM86 290l7 -5 4 6 -7 4zM352 54l6 -4 4 6 -6 4zM557 590l7 -5 4 5 -8 5zM212 597l6 -3 2 3 -5 4zM75 278l8 -5 3 4 -9 6zM343 347l6 -3 2 3 -6 3zM432 338l5 -4 3 5 -5 3zM213 390l9 -6 3 6 -8 5zM330 461l9 -6 2 5 -8 5zM139 404l4 -2 3 4 -4 3zM298 102l9 -5 3 4 -9 6zM620 638l5 -4 3 5 -5 4zM270 242l4 -3 2 4 -4 3zM126 192l6 -4 2 4 -5 4zM590 634l6 -4 3 6 -6 4zM343 690l7 -4 3 5 -6 4zM492 439l7 -4 3 4 -7 5zM277 527l9 -5 4 5 -9 6zM486 161l7 -5 4 6 -7 5zM378 599l5 -3 2 3 -4 3zM439 411l5 -3 3 4 -5 3zM214 574l4 -3 4 5 -5 3zM88 109l5 -3 4 6 -5 3zM706 587l7 -5 2 3 -7 5zM299 74l8 -4 3 5 -7 5zM716 513l8 -5 3 4 -8 6zM176 237l6 -5 4 5 -7 5zM579 523l8 -5 3 3 -8 6zM121 477l5 -4 2 4 -5 4zM471 476l6 -5 3 5 -6 4zM436 541l5 -3 3 5 -5 3zM234 362l6 -4 3 5 -6 4zM90 333l5 -3 3 4 -5 4zM454 78l9 -5 2 4 -8 5zM619 359l6 -4 4 5 -7 4zM95 358l4 -3 3 5 -4 3zM523 76l6 -4 2 3 -6 4zM580 389l10 -6 2 4 -9 6zM478 251l8 -5 3 4 -8 5zM636 292l8 -5 3 4 -8 6zM151 291l6 -3 3 4 -6 4zM436 616l8 -5 2 3 -8 5zM176 263l7 -4 3 4 -7 5zM231 58l5 -3 4 5 -5 3zM76 237l6 -5 4 5 -7 5zM206 65l5 -3 2 3 -5 3zM587 241l8 -5 3 3 -8 6zM369 185l5 -3 4 5 -6 4zM362 332l6 -4 2 4 -5 3zM228 332l4 -3 4 5 -5 3zM330 211l5 -4 2 4 -5 4zM109 193l8 -5 4 5 -8 5zM347 295l7 -4 2 3 -7 4zM475 155l5 -3 2 4 -4 3zM310 596l9 -6 3 5 -9 6zM440 165l6 -5 3 5 -6 4zM495 84l6 -4 4 5 -7 4zM546 330l8 -5 3 5 -8 5zM166 220l7 -5 2 3 -7 5zM397 126l5 -3 2 3 -5 3zM715 421l7 -4 3 4 -7 5zM486 176l6 -5 3 6 -6 4zM571 424l4 -3 3 4 -5 3zM661 639l5 -3 3 4 -5 3zM80 2l9 -5 3 4 -8 6zM629 604l8 -5 3 4 -8 5zM538 168l6 -4 3 5 -5 4zM666 479l4 -3 2 3 -4 3zM568 463l8 -6 3 4 -9 5zM278 378l9 -6 2 3 -10 6zM722 500l9 -6 2 3 -9 6zM418 220l7 -5 3 5 -7 5zM391 434l7 -5 3 4 -7 5zM361 172l7 -5 2 4 -7 5zM321 276l8 -5 3 6 -8 5zM133 42l8 -5 3 4 -8 6zM400 507l5 -3 3 5 -5 3zM562 559l7 -5 3 5 -7 5zM474 334l6 -4 4 5 -6 4zM356 81l6 -3 3 4 -5 4zM209 582l8 -6 3 5 -8 5zM568 397l5 -3 3 4 -5 3zM575 604l6 -4 2 5 -5 3zM383 14l5 -3 3 4 -5 4zM579 419l8 -5 4 5 -8 5zM562 403l6 -4 3 5 -6 4zM308 454l8 -5 3 6 -7 4zM551 164l7 -4 3 5 -7 4zM672 353l8 -5 2 4 -7 5zM517 64l8 -5 4 5 -9 6zM278 100l7 -4 2 3 -7 4zM271 69l4 -3 4 5 -5 3zM273 94l7 -5 3 4 -8 5zM531 462l7 -5 2 4 -7 4zM47 207l6 -4 3 6 -5 3zM222 379l6 -4 4 6 -7 4zM224 43l6 -4 3 4 -6 4zM408 169l8 -5 3 4 -8 5zM72 178l8 -6 3 4 -9 6zM184 182l6 -4 2 3 -6 4zM548 511l6 -4 2 4 -5 3zM171 9l4 -3 2 3 -4 3zM122 233l5 -3 3 5 -5 3zM177 16l5 -3 2 3 -5 3zM407 -1l4 -2 3 4 -4 3zM177 34l5 -4 2 3 -5 4zM425 291l8 -5 3 4 -8 5zM525 286l9 -6 3 5 -9 6zM260 587l7 -5 3 5 -7 5zM244 425l7 -4 2 3 -7 4zM253 391l9 -5 2 4 -8 5zM460 122l7 -5 3 4 -8 5zM337 340l9 -6 2 3 -9 6zM453 122l9 -6 3 4 -9 6zM280 236l5 -4 3 5 -5 3zM572 601l8 -6 3 4 -9 5zM513 539l7 -4 2 3 -7 4zM105 415l6 -4 3 5 -6 4zM302 399l6 -4 3 4 -6 4zM352 133l7 -5 3 6 -7 4zM449 23l8 -5 4 6 -8 5zM137 447l6 -4 2 4 -6 4zM297 545l6 -4 2 4 -6 4zM300 598l7 -5 4 5 -8 5zM263 117l4 -3 3 4 -4 3zM711 658l6 -4 4 5 -6 5zM653 619l5 -3 4 5 -5 3zM682 521l5 -4 3 3 -6 4zM421 562l7 -5 3 5 -7 4zM377 244l7 -4 2 4 -7 4zM598 362l5 -3 3 4 -5 4zM369 303l7 -4 2 4 -6 4zM404 504l7 -4 3 5 -6 5zM335 242l4 -3 3 4 -5 3zM151 294l7 -5 3 5 -7 5zM172 387l7 -4 3 3 -7 5zM226 458l7 -5 3 5 -7 4zM260 479l6 -3 3 4 -6 4zM299 579l5 -3 2 4 -5 3zM78 124l7 -4 2 4 -6 4zM549 581l5 -3 2 4 -4 3zM344 331l8 -6 3 5 -8 5zM380 313l8 -5 3 5 -7 5zM320 657l5 -4 3 5 -5 3zM602 410l8 -5 2 3 -8 6zM729 495l7 -4 3 4 -7 4zM212 615l9 -6 3 6 -9 5zM640 324l8 -6 4 5 -9 6zM286 642l9 -6 4 6 -9 5zM556 276l7 -5 2 4 -7 5zM375 540l7 -4 2 3 -7 5zM713 644l6 -5 3 5 -6 4zM199 259l6 -4 3 4 -7 4zM623 404l5 -3 2 3 -5 3zM379 281l6 -3 3 5 -6 4zM695 398l9 -6 2 4 -9 5zM270 499l8 -5 3 5 -8 6zM587 325l7 -4 2 3 -7 4zM362 259l9 -6 3 5 -9 6zM455 37l4 -3 4 6 -4 3zM153 337l4 -3 2 3 -4 3zM348 458l8 -6 2 3 -8 6zM343 327l9 -6 3 5 -8 5zM390 486l8 -5 4 5 -8 5zM545 482l5 -4 3 5 -5 4zM277 332l5 -3 2 3 -5 3zM709 514l8 -5 2 3 -8 5zM538 451l7 -5 3 4 -8 5zM542 449l5 -3 3 5 -4 3zM158 461l7 -4 2 3 -7 4zM339 44l8 -5 3 4 -8 5zM270 444l7 -4 3 5 -7 5zM457 262l6 -4 3 5 -6 3zM238 357l8 -5 3 4 -8 5zM697 435l8 -5 2 4 -8 5zM267 72l7 -4 3 4 -7 5zM340 449l4 -3 4 5 -5 3zM548 241l9 -6 3 5 -9 6zM345 518l8 -5 3 5 -8 5zM176 461l5 -4 3 4 -5 4zM645 538l4 -3 4 5 -5 3zM208 389l6 -4 3 4 -6 4zM693 529l9 -5 4 6 -9 5zM106 79l6 -4 2 4 -6 4zM310 223l6 -4 3 4 -7 4zM242 41l7 -4 3 4 -7 4zM431 426l9 -6 2 3 -9 6zM445 602l4 -3 4 5 -5 3zM637 546l8 -5 4 4 -9 6zM650 360l9 -5 3 4 -9 5zM117 457l6 -4 4 6 -6 4zM508 146l7 -4 2 3 -6 4zM412 370l9 -5 3 5 -8 6zM271 385l5 -4 4 6 -6 4zM303 635l5 -3 4 5 -5 3zM684 608l6 -4 2 4 -5 3zM114 358l7 -4 3 4 -7 5zM225 628l6 -3 2 4 -5 4zM425 570l5 -3 3 5 -5 3zM285 604l7 -4 2 4 -6 4zM90 350l4 -3 4 5 -5 3zM330 318l8 -5 3 5 -8 5zM681 444l6 -4 2 4 -6 4zM440 3l7 -4 3 4 -7 5zM290 83l5 -4 4 4 -6 4zM392 604l5 -3 4 6 -5 3zM482 547l8 -5 3 5 -8 5zM471 48l8 -5 3 5 -7 5zM446 370l8 -5 2 3 -8 5zM577 278l6 -4 3 5 -5 4zM507 358l6 -3 4 5 -6 4zM438 163l7 -4 4 5 -7 5zM547 270l7 -5 3 4 -7 5zM317 353l5 -3 3 4 -5 4zM146 388l5 -3 3 5 -5 4zM396 442l9 -6 4 6 -9 6zM600 551l9 -6 3 6 -9 5zM214 449l8 -5 2 3 -8 5zM428 19l8 -5 3 5 -7 5zM152 52l9 -6 3 5 -9 6zM400 524l8 -5 2 4 -7 5zM483 443l9 -6 3 4 -9 6zM343 62l9 -6 2 3 -9 6zM80 179l4 -3 3 5 -4 2zM144 420l7 -5 3 3 -8 5zM262 431l9 -6 2 4 -9 5zM194 615l7 -5 4 6 -7 4zM412 587l9 -6 2 4 -9 5zM283 144l5 -3 3 4 -5 3zM167 359l8 -5 3 5 -8 5zM345 234l6 -4 2 3 -6 4zM300 215l8 -5 2 3 -8 5zM699 556l9 -6 3 4 -9 5zM582 244l7 -4 2 3 -7 5zM480 310l6 -4 4 6 -6 4zM641 491l8 -5 4 5 -8 5zM248 398l4 -3 3 4 -5 3zM679 656l7 -4 2 4 -6 4zM370 541l7 -5 3 4 -8 5zM283 527l6 -4 3 5 -6 3zM434 600l8 -5 3 6 -7 5zM228 340l5 -4 3 4 -6 3zM268 491l8 -6 4 6 -8 5zM531 350l6 -4 3 5 -6 4zM499 22l7 -4 2 4 -6 4zM414 575l6 -4 2 4 -6 4zM143 209l7 -4 2 3 -6 4zM400 265l6 -4 2 3 -6 4zM275 599l8 -6 3 3 -9 6zM534 236l8 -5 3 4 -8 5zM273 496l5 -3 4 5 -5 3zM423 583l5 -4 2 3 -5 4zM385 571l8 -5 2 3 -8 5zM229 196l5 -3 2 2 -5 4zM730 487l8 -6 4 6 -9 5zM614 527l6 -3 2 3 -6 4zM377 523l7 -5 2 4 -7 4zM206 288l8 -6 4 6 -9 5zM149 544l6 -3 3 5 -5 3zM521 301l8 -5 2 3 -8 5zM581 578l7 -5 2 3 -7 5zM89 305l6 -4 3 5 -6 4zM275 309l5 -3 3 5 -5 3zM335 537l5 -3 2 3 -5 3zM465 228l8 -6 3 5 -8 5zM306 498l6 -4 3 6 -5 3zM129 25l8 -5 4 5 -9 5zM231 563l6 -4 2 4 -6 3zM405 636l6 -3 3 4 -6 4zM201 283l9 -5 4 5 -9 6zM23 165l6 -4 3 5 -6 4zM678 350l9 -6 3 5 -9 5zM279 618l8 -5 3 6 -7 5zM247 452l8 -6 3 4 -9 5zM313 268l9 -6 4 6 -9 6zM107 447l7 -4 2 4 -7 4zM466 492l6 -3 2 3 -5 4zM232 53l4 -3 2 4 -4 2zM494 396l5 -3 3 4 -5 3zM488 476l9 -6 3 4 -9 6zM115 313l9 -6 2 3 -9 6zM401 34l8 -5 3 5 -7 5zM306 26l6 -3 2 3 -5 4zM720 505l7 -4 2 4 -6 4zM294 475l8 -5 4 6 -8 5zM520 90l6 -4 3 4 -6 4zM281 382l9 -5 4 6 -9 5zM661 439l5 -3 3 4 -6 3zM138 227l5 -3 2 3 -5 3zM528 455l6 -4 2 4 -5 4zM189 478l6 -4 2 3 -6 4zM103 78l8 -5 4 5 -9 6zM436 23l7 -4 2 4 -7 4zM519 70l8 -5 3 4 -8 5zM424 265l7 -4 3 5 -7 4zM437 356l8 -5 3 5 -8 6zM372 635l4 -3 4 5 -5 3zM625 350l9 -6 2 4 -9 6zM284 461l5 -3 3 6 -5 3zM679 363l5 -4 3 5 -5 3zM124 195l7 -5 3 6 -7 4zM600 639l5 -3 3 5 -4 3zM618 359l9 -6 3 5 -9 6zM158 66l6 -3 3 5 -5 4zM195 441l9 -6 3 5 -9 6zM665 497l6 -4 3 5 -6 4zM321 208l4 -3 3 5 -4 3zM468 470l6 -3 2 3 -5 4zM99 3l5 -3 3 5 -4 3zM604 490l7 -5 2 3 -7 5zM71 175l7 -5 4 6 -7 4zM35 175l5 -3 2 3 -5 3zM219 61l5 -3 2 4 -4 3zM479 347l8 -5 2 3 -8 6zM595 229l5 -4 2 4 -5 3zM203 482l4 -3 3 4 -4 3zM91 306l8 -6 3 4 -9 5zM605 587l8 -5 2 4 -7 5zM448 35l5 -3 3 4 -5 3zM465 197l5 -3 4 5 -5 4zM284 424l7 -4 2 4 -7 4zM349 493l5 -3 2 3 -5 3zM11 79l7 -5 4 6 -8 5zM375 533l8 -5 2 3 -8 6zM211 602l5 -3 3 5 -5 3zM422 233l7 -5 3 5 -7 5zM435 388l8 -5 2 3 -8 5zM281 37l4 -3 4 5 -5 3zM201 67l9 -6 2 4 -9 6zM507 418l8 -6 3 5 -8 5zM698 635l6 -4 3 5 -7 4zM93 178l5 -3 3 5 -4 3zM610 534l4 -3 4 6 -5 3zM614 492l7 -4 3 4 -7 5zM449 538l10 -6 3 5 -10 6zM628 392l9 -5 2 3 -9 6zM409 328l5 -3 3 4 -5 4zM320 576l8 -6 3 5 -8 5zM450 578l7 -5 3 5 -7 5zM458 452l8 -5 3 6 -8 5zM440 193l8 -5 4 5 -9 5zM280 465l9 -6 3 4 -9 6zM342 74l6 -3 3 4 -6 4zM647 358l7 -4 3 4 -7 5zM752 555l5 -3 3 5 -5 4zM334 535l6 -4 3 6 -6 4zM719 617l6 -5 3 4 -7 5zM733 614l4 -3 3 5 -4 3zM248 450l9 -5 3 5 -9 5zM385 615l7 -4 3 5 -7 5zM94 338l8 -5 4 5 -8 6zM546 402l8 -5 3 3 -9 6zM342 30l5 -4 3 6 -5 4zM198 599l7 -5 4 6 -8 5zM209 437l8 -6 3 5 -8 5zM84 120l5 -4 3 5 -5 3zM101 87l8 -5 4 5 -8 5zM343 61l5 -3 3 5 -4 3zM139 30l9 -6 3 3 -9 6zM593 514l5 -4 4 6 -6 4zM660 377l7 -5 4 5 -8 5zM312 101l5 -3 2 4 -4 3zM153 475l9 -6 2 3 -9 6zM216 221l8 -6 2 4 -8 5zM534 408l7 -5 2 4 -7 4zM586 473l4 -3 3 4 -5 3zM750 546l6 -4 3 4 -6 4zM315 134l6 -4 2 3 -6 4zM396 441l8 -5 2 4 -7 5zM239 553l5 -3 3 3 -5 3zM620 605l9 -6 4 5 -9 6zM448 504l9 -6 2 3 -9 6zM200 287l9 -5 4 5 -9 5zM139 542l9 -6 3 6 -8 6zM414 561l7 -5 3 6 -7 4zM365 78l4 -3 3 3 -5 3zM68 129l8 -5 4 6 -8 5zM216 388l10 -6 3 5 -9 6zM503 395l8 -5 2 3 -8 5zM477 111l8 -6 3 4 -8 6zM545 243l9 -6 2 4 -9 5zM354 500l6 -4 2 4 -5 4zM149 397l9 -5 2 4 -8 5zM468 146l6 -4 3 3 -7 5zM594 408l8 -5 3 5 -8 5zM356 481l9 -6 2 4 -8 6zM707 403l9 -6 2 5 -8 5zM268 516l5 -4 4 6 -5 3zM665 527l8 -4 2 3 -7 5zM566 460l8 -6 3 4 -9 6zM474 379l8 -5 3 5 -7 5zM334 570l7 -5 3 5 -7 4zM249 181l6 -5 3 4 -7 4zM364 506l5 -3 3 4 -5 3zM311 45l8 -5 2 3 -8 5zM482 503l4 -3 4 6 -4 2zM521 247l9 -6 3 5 -9 5zM145 416l6 -4 3 4 -6 4zM236 652l9 -6 2 4 -8 5zM332 307l8 -6 4 6 -9 6zM205 372l5 -3 2 4 -5 3zM397 586l5 -3 3 4 -5 3zM274 376l9 -5 2 3 -9 6zM661 511l8 -5 2 4 -7 5zM515 145l7 -4 3 5 -7 4zM584 614l9 -6 3 4 -9 5zM227 21l6 -4 3 5 -6 5zM500 384l8 -5 3 5 -8 5zM316 451l6 -3 2 3 -6 4zM148 469l5 -4 3 4 -6 3zM224 163l6 -4 4 5 -7 4zM543 146l9 -6 2 4 -9 6zM408 224l9 -6 3 5 -9 6zM222 628l6 -4 2 3 -6 4zM754 619l7 -4 2 4 -7 4zM169 370l5 -3 2 4 -5 3zM334 63l5 -4 3 5 -5 4zM74 167l9 -6 3 5 -8 6zM179 273l7 -4 3 5 -6 4zM97 0l6 -3 2 3 -5 4zM277 128l7 -4 3 4 -7 5zM610 482l9 -6 4 6 -9 5zM246 214l8 -5 2 3 -8 5zM746 488l6 -4 3 5 -6 4zM265 48l6 -4 3 5 -6 4zM46 211l9 -6 2 4 -9 6zM83 311l9 -6 4 6 -9 6zM589 449l7 -5 3 4 -7 5zM417 163l5 -3 2 5 -4 3zM349 259l5 -3 4 5 -5 3zM238 41l5 -3 2 4 -5 3zM305 608l8 -5 3 4 -9 5zM222 622l5 -3 3 4 -5 3zM166 378l8 -5 3 4 -8 5zM673 679l5 -3 3 5 -5 3zM310 86l8 -5 3 3 -9 6zM270 146l7 -5 2 4 -7 4zM401 140l5 -3 3 5 -5 3zM344 495l8 -5 2 3 -8 6zM83 133l5 -3 3 4 -5 3zM691 651l8 -5 2 4 -7 5zM393 200l5 -4 3 5 -5 3zM730 537l8 -4 3 5 -7 5zM283 541l8 -5 3 5 -8 5zM603 460l5 -3 3 4 -5 3zM344 155l8 -5 2 4 -7 5zM173 48l7 -4 3 5 -6 4zM353 211l9 -5 3 5 -9 5zM138 133l7 -4 3 4 -7 4zM176 220l5 -4 2 5 -4 3zM263 360l9 -6 3 6 -9 6zM155 48l5 -3 2 3 -5 3zM312 86l9 -6 3 5 -9 6zM745 649l8 -6 2 3 -8 6zM75 272l5 -3 4 5 -6 3zM144 209l6 -4 2 5 -5 3zM458 560l8 -5 4 6 -9 5zM235 196l7 -4 3 5 -7 4zM543 381l5 -4 4 5 -6 4zM531 367l5 -3 3 4 -6 3zM345 424l8 -5 2 4 -7 5zM348 632l9 -6 2 3 -9 6zM370 290l5 -3 3 5 -4 3zM415 639l5 -4 3 4 -6 4zM311 210l7 -4 3 4 -7 5zM208 610l9 -6 3 5 -9 6zM177 387l8 -4 2 3 -7 5zM351 562l4 -3 3 4 -4 3zM190 117l6 -4 3 5 -6 4zM336 494l7 -4 3 5 -7 5zM371 41l8 -5 4 5 -8 5zM156 409l5 -3 3 4 -6 3zM275 692l7 -4 3 3 -7 5zM121 480l5 -3 3 3 -6 4zM409 220l8 -5 3 4 -8 6zM310 373l5 -4 2 3 -6 4zM527 151l9 -5 2 3 -9 5zM270 228l7 -5 3 5 -7 5zM58 121l7 -4 2 4 -6 4zM668 347l5 -3 2 3 -5 3zM696 438l4 -3 3 4 -5 3zM675 585l7 -4 4 5 -7 5zM742 524l7 -4 3 5 -6 4zM426 14l5 -3 3 5 -5 2zM349 688l7 -5 3 5 -7 5zM261 579l5 -3 2 4 -5 3zM374 497l8 -6 4 6 -9 5zM314 43l6 -3 2 4 -5 3zM356 330l8 -5 3 5 -8 5zM570 356l6 -4 4 5 -6 4zM197 156l9 -5 2 4 -8 5zM173 255l5 -4 3 6 -5 3zM609 423l8 -5 3 5 -8 6zM533 469l5 -3 2 3 -4 3zM638 546l5 -3 3 5 -4 3zM174 394l5 -3 3 3 -6 4zM434 341l5 -4 3 5 -5 4zM232 421l7 -5 3 5 -7 4zM174 74l8 -5 2 3 -8 6zM349 194l7 -5 3 6 -7 4zM352 577l9 -5 3 3 -9 6zM264 59l7 -4 3 4 -7 4zM392 663l8 -6 2 4 -7 5zM502 527l8 -5 4 6 -8 5zM235 175l8 -5 4 5 -8 6zM509 168l10 -6 3 5 -9 6zM506 194l8 -6 3 5 -8 5zM328 437l9 -5 2 3 -8 5zM216 439l8 -5 3 5 -8 5zM709 698l7 -5 4 6 -7 4zM384 46l5 -3 3 5 -5 3zM109 31l8 -5 4 6 -8 5zM120 203l5 -4 3 5 -6 3zM733 608l8 -5 2 4 -7 5zM422 458l6 -3 2 3 -6 3zM505 106l9 -6 3 4 -9 6zM117 393l7 -4 2 3 -7 5zM96 330l9 -6 2 3 -9 6zM347 697l8 -5 3 5 -8 5zM725 564l7 -5 2 3 -7 5zM444 183l5 -3 3 4 -5 3zM343 69l5 -3 3 4 -5 3zM556 577l4 -3 3 3 -5 3zM450 124l5 -4 2 3 -5 4zM279 238l4 -2 4 4 -5 3zM626 326l6 -4 4 6 -6 3zM217 151l6 -4 3 5 -6 4zM110 312l7 -4 3 5 -7 4zM363 532l9 -6 2 3 -9 6zM351 259l9 -6 3 5 -9 6zM482 96l4 -3 4 5 -5 3zM203 254l8 -5 3 4 -8 6zM282 319l4 -3 4 5 -5 3zM202 269l8 -6 3 5 -9 5zM418 378l7 -4 2 4 -6 4zM229 142l7 -5 3 4 -7 5zM199 59l8 -5 3 5 -8 5zM705 666l7 -5 3 4 -7 4zM512 108l7 -5 3 4 -8 4zM492 156l7 -5 2 4 -7 4zM339 180l7 -5 2 3 -7 5zM151 341l6 -4 3 4 -7 4zM522 90l7 -5 3 5 -7 5zM554 466l6 -4 3 4 -6 4zM250 226l6 -4 3 4 -6 4zM589 618l5 -3 3 5 -4 3zM327 601l7 -5 3 6 -6 4zM646 552l5 -3 3 5 -5 3zM107 25l6 -4 3 4 -6 4zM330 58l8 -6 4 5 -9 6zM290 201l6 -4 4 5 -7 4zM651 657l7 -5 3 5 -8 4zM234 221l7 -5 2 4 -7 5zM562 483l4 -3 2 4 -4 3zM414 560l8 -6 3 5 -8 6zM508 279l7 -4 2 3 -7 4zM428 633l9 -6 3 5 -9 6zM519 271l6 -4 2 3 -6 4zM389 56l9 -6 3 4 -9 6zM290 349l4 -3 4 5 -5 3zM251 277l8 -5 2 3 -8 5zM498 532l5 -4 4 6 -6 3zM168 53l5 -4 2 4 -5 3zM623 447l6 -4 2 3 -7 4zM653 469l7 -5 4 6 -8 5zM193 615l9 -6 2 3 -9 6zM594 475l7 -5 4 5 -8 5zM476 63l7 -4 3 4 -7 4zM169 222l6 -3 3 5 -5 4zM481 61l6 -4 2 4 -6 3zM311 401l6 -3 2 3 -6 4zM80 136l7 -5 4 5 -8 5zM448 439l5 -3 4 6 -5 3zM203 390l5 -3 2 3 -5 4zM519 311l7 -5 3 5 -6 5zM316 627l5 -4 3 3 -6 4zM725 523l8 -5 2 4 -8 5zM524 530l8 -5 3 5 -8 6zM458 511l7 -5 3 3 -8 5z" fill="#b3afa9"/>
<path d="M274 41l7 -4 2 3 -7 4zM320 580l5 -3 2 4 -5 3zM514 300l6 -4 3 5 -6 3zM550 203l9 -5 2 3 -9 6zM367 27l8 -5 3 6 -8 5zM185 274l5 -3 2 4 -4 3zM73 254l5 -3 3 6 -4 2zM164 159l5 -3 3 3 -5 4zM625 689l7 -5 3 4 -8 5zM94 11l9 -6 3 4 -9 6zM218 169l8 -4 2 3 -7 5zM264 321l7 -4 4 5 -7 5zM134 4l9 -6 2 4 -8 5zM548 390l6 -3 3 4 -6 4zM422 174l6 -4 3 5 -5 4zM462 355l7 -5 3 5 -7 5zM520 297l5 -3 4 6 -5 3zM358 655l4 -3 4 5 -5 3zM473 516l8 -5 2 3 -8 6zM378 586l9 -5 3 5 -8 5zM420 441l8 -5 3 5 -7 5zM367 17l4 -3 3 4 -4 3zM216 260l6 -4 4 6 -6 4zM191 400l9 -6 3 6 -9 5zM545 455l8 -5 2 4 -8 5zM229 15l7 -4 3 5 -7 4zM606 519l8 -6 3 5 -8 6zM414 44l5 -3 2 4 -4 3zM210 217l9 -6 3 4 -9 6zM348 113l4 -3 3 5 -4 3zM473 215l6 -4 3 4 -6 4zM498 314l6 -4 2 3 -6 4zM367 165l8 -5 4 5 -8 5zM479 253l9 -6 3 5 -9 6zM296 559l5 -4 4 6 -5 4zM77 250l5 -3 3 4 -5 4zM592 282l6 -3 2 3 -6 3zM554 176l8 -6 2 3 -8 6zM103 140l8 -5 2 5 -7 5zM639 523l6 -5 3 6 -6 4zM198 388l6 -4 4 5 -7 4zM541 257l5 -3 4 5 -6 4zM328 542l6 -4 3 5 -6 4zM15 144l5 -4 4 6 -6 3zM285 620l5 -3 3 4 -5 3zM377 444l7 -4 2 3 -7 5zM303 521l8 -6 3 4 -9 6zM341 221l8 -5 2 3 -8 5zM591 501l8 -5 2 4 -7 5zM587 569l7 -5 3 4 -8 5zM263 448l9 -5 3 5 -8 6zM546 197l5 -3 3 4 -5 3zM596 588l5 -3 4 5 -5 3zM280 295l9 -6 2 4 -9 6zM471 238l8 -5 3 4 -9 5zM396 541l6 -4 2 4 -5 4zM599 232l6 -3 3 3 -6 4zM225 3l5 -3 3 6 -5 3zM450 477l5 -3 4 5 -6 3zM226 296l6 -4 2 4 -5 4zM428 27l5 -4 4 6 -5 3zM366 42l6 -4 3 4 -6 4zM510 102l9 -5 2 4 -8 5zM247 426l9 -6 3 5 -9 6zM141 127l8 -5 3 4 -8 5zM335 68l8 -5 4 5 -9 6zM339 239l8 -5 3 4 -8 5zM105 155l4 -3 4 5 -5 3zM146 55l5 -3 3 5 -5 3zM279 417l4 -3 3 4 -4 3zM660 670l7 -5 3 5 -7 4zM144 12l7 -4 3 4 -7 5zM659 503l5 -3 2 4 -5 2zM588 237l5 -3 3 4 -5 3zM690 573l9 -5 2 3 -9 5zM726 656l5 -4 3 4 -5 4zM274 372l5 -3 2 4 -4 3zM214 215l8 -5 2 4 -8 4zM306 203l5 -4 3 3 -6 4zM536 323l7 -4 3 5 -7 4zM322 639l4 -3 2 3 -4 3zM447 247l9 -6 3 5 -9 6zM71 263l6 -4 3 4 -6 4zM666 677l6 -4 3 4 -7 4zM475 422l6 -3 4 5 -6 4zM487 374l9 -6 3 4 -9 6zM339 269l4 -2 4 5 -5 3zM234 632l9 -6 2 4 -8 6zM635 401l7 -5 3 4 -8 5zM588 200l4 -3 4 5 -5 3zM521 519l9 -6 3 5 -9 6zM507 167l5 -4 3 4 -5 4zM586 589l6 -3 2 3 -6 4zM626 634l5 -3 2 4 -5 3zM498 261l7 -4 3 4 -7 5zM628 274l5 -3 4 5 -5 4zM448 149l6 -4 3 5 -5 4zM445 30l5 -3 3 4 -5 3zM436 273l6 -4 2 3 -6 4zM421 541l9 -5 3 5 -8 6zM98 6l8 -6 3 4 -9 6zM415 657l6 -4 4 6 -6 4zM585 302l8 -6 2 3 -8 6zM99 132l7 -5 3 6 -7 4zM250 348l7 -5 3 4 -7 4zM376 446l5 -4 4 5 -6 4zM424 288l8 -6 4 6 -9 5zM366 625l5 -4 3 5 -5 4zM307 102l9 -6 2 3 -9 6zM396 431l8 -5 2 4 -8 5zM73 251l8 -6 3 5 -8 5zM242 171l8 -6 2 4 -8 5zM276 500l5 -4 3 4 -6 4zM447 324l6 -4 4 5 -7 5zM356 625l7 -4 3 4 -7 4zM560 281l5 -3 3 5 -4 3zM425 39l7 -5 4 5 -8 5zM233 180l8 -6 3 5 -8 5zM149 37l7 -5 3 4 -7 5zM274 561l5 -3 4 6 -5 3zM335 616l5 -3 3 4 -5 3zM219 164l7 -5 3 4 -8 5zM411 65l6 -4 4 5 -7 4zM223 49l7 -4 2 3 -7 5zM596 419l7 -5 2 4 -7 4zM348 645l4 -3 4 6 -4 3zM684 523l8 -5 3 5 -8 5zM188 589l6 -4 2 4 -6 3zM369 10l4 -3 4 6 -5 3zM703 628l7 -5 2 4 -7 4zM722 625l5 -3 3 5 -5 3zM98 237l5 -3 2 4 -4 3zM532 430l6 -4 2 4 -5 3zM167 442l6 -4 2 4 -6 4zM151 9l8 -5 4 5 -9 5zM674 375l4 -3 3 3 -5 3zM91 140l7 -4 3 5 -7 4zM419 576l6 -4 3 5 -6 4zM400 74l8 -5 3 4 -9 5zM274 378l9 -5 2 3 -9 6zM157 57l6 -3 3 5 -5 4zM387 17l7 -5 3 6 -6 4zM728 539l8 -6 3 5 -8 5zM663 414l5 -4 2 3 -5 4zM708 681l5 -4 3 4 -5 3zM502 396l5 -3 2 4 -5 3zM385 106l9 -5 4 5 -9 6zM382 365l6 -4 3 6 -6 3zM358 501l8 -6 3 4 -8 6zM78 160l9 -5 3 4 -9 5zM495 268l8 -5 2 3 -8 6zM432 74l7 -5 3 6 -7 4zM421 101l8 -5 3 5 -7 5zM455 182l5 -4 3 4 -6 4zM635 648l4 -3 4 6 -5 3zM603 475l5 -3 3 4 -5 3zM143 222l6 -4 3 3 -7 5zM330 682l7 -4 3 6 -6 4zM264 443l9 -6 3 4 -9 6zM261 374l8 -6 4 5 -9 6zM598 403l6 -4 4 6 -7 4zM595 360l4 -3 4 6 -4 2zM196 428l5 -4 3 6 -5 3zM276 646l9 -6 4 6 -9 6zM645 626l5 -3 2 5 -4 3zM684 431l10 -6 3 5 -9 6zM609 480l8 -6 2 4 -8 5zM419 284l5 -3 2 3 -5 4zM428 5l7 -4 3 6 -6 4zM378 403l7 -4 3 4 -7 5zM631 317l7 -4 3 5 -6 5zM751 645l5 -3 3 4 -5 4zM707 572l7 -4 2 3 -7 5zM391 339l6 -4 3 4 -6 4zM591 362l5 -3 4 5 -6 4zM251 76l8 -5 3 5 -8 5zM434 226l5 -3 2 4 -4 2zM529 364l9 -6 3 3 -10 6zM463 121l6 -5 3 4 -7 5zM512 383l7 -5 3 6 -7 4zM695 635l9 -5 3 6 -8 5zM266 570l4 -3 3 4 -5 3zM363 265l7 -5 2 4 -7 5zM188 583l7 -4 4 4 -7 5zM146 27l8 -5 3 5 -8 5zM490 261l6 -4 2 3 -6 5zM232 52l9 -6 3 4 -9 6zM306 464l7 -4 3 4 -7 4zM667 686l5 -3 3 5 -5 3zM485 462l7 -5 2 3 -7 5zM548 258l5 -3 3 4 -5 4zM319 660l8 -6 3 4 -9 5zM523 413l8 -5 3 4 -8 5zM607 348l5 -3 2 3 -5 3zM616 428l5 -3 4 6 -5 3zM631 616l5 -3 4 5 -6 4zM189 16l4 -3 4 5 -5 3zM473 421l8 -6 4 5 -9 6zM486 465l9 -5 3 5 -9 6zM369 235l9 -6 4 6 -9 6zM129 54l6 -4 2 3 -6 4zM228 345l6 -4 3 4 -6 4zM438 9l6 -4 3 4 -7 4zM302 72l8 -5 4 5 -8 5zM464 232l7 -4 4 6 -7 4zM691 399l9 -6 2 3 -10 6zM415 511l9 -6 3 5 -9 6zM532 372l7 -5 3 4 -7 5zM242 199l9 -6 3 5 -9 5zM284 648l9 -6 2 4 -9 6zM498 216l7 -4 3 4 -7 4zM351 640l8 -5 4 5 -9 6zM390 409l7 -5 3 6 -6 4zM263 292l5 -3 4 6 -5 3zM341 502l6 -4 3 5 -6 4zM368 27l8 -6 2 4 -8 5zM546 241l8 -5 4 5 -9 6zM376 466l5 -3 3 5 -5 3zM525 347l7 -5 2 4 -6 4zM345 454l7 -5 4 6 -7 5zM94 299l6 -4 3 4 -7 4zM483 240l4 -3 3 4 -5 3zM125 214l7 -4 4 5 -7 5zM320 646l5 -4 4 6 -6 3zM83 31l5 -3 2 3 -5 4zM128 170l7 -5 2 5 -6 4zM398 389l7 -4 3 4 -7 4zM111 374l8 -5 2 3 -8 5zM272 619l8 -5 2 5 -7 4zM397 211l8 -5 3 5 -8 5zM313 663l6 -4 2 4 -5 4zM405 402l5 -3 4 6 -5 3zM330 692l6 -4 3 4 -6 4zM355 332l7 -5 4 5 -8 5zM151 242l5 -3 2 4 -4 3zM4 65l9 -5 3 5 -8 6zM198 357l4 -3 3 4 -5 3zM362 638l7 -4 3 5 -7 4zM166 462l5 -3 2 3 -5 3zM378 394l5 -3 2 3 -4 3zM448 372l4 -3 2 3 -4 3zM453 57l8 -5 2 4 -8 5zM398 240l9 -6 2 4 -9 6zM405 590l10 -6 3 5 -9 6zM757 561l5 -4 4 5 -6 4zM49 121l7 -5 2 4 -6 5zM401 273l4 -3 2 3 -5 3zM433 605l5 -3 3 4 -5 4zM76 185l9 -5 3 5 -9 5zM122 168l4 -3 3 4 -5 3zM347 329l5 -3 3 5 -5 3zM598 534l7 -4 4 6 -7 4zM86 151l5 -3 3 4 -5 3zM679 396l7 -5 2 3 -7 5zM267 677l7 -5 3 4 -7 5zM450 459l7 -5 2 3 -7 5zM435 128l6 -4 2 3 -6 4zM370 229l7 -5 4 5 -8 5zM525 90l6 -4 4 5 -6 4zM385 499l7 -5 2 4 -7 5zM456 520l6 -4 3 5 -5 4zM720 453l6 -3 3 4 -6 4zM623 555l9 -5 4 5 -9 5zM646 374l8 -4 2 4 -7 5zM397 336l5 -3 2 3 -5 3zM309 497l6 -4 3 4 -6 4zM64 257l9 -6 3 4 -9 6zM661 433l7 -5 3 4 -7 5zM490 390l5 -4 2 3 -5 4zM479 22l5 -3 3 5 -5 3zM80 333l9 -6 3 4 -9 6zM316 353l5 -2 3 5 -4 3zM499 365l4 -3 4 6 -4 3zM570 475l6 -4 3 5 -6 4zM229 635l7 -4 2 4 -7 4zM578 195l7 -4 3 4 -8 4zM1 87l6 -4 2 4 -6 4zM476 383l8 -5 3 4 -8 5zM201 387l4 -2 4 5 -4 3zM373 470l5 -4 4 6 -6 3zM432 516l7 -5 3 5 -8 4zM384 403l7 -5 2 3 -7 5zM560 395l5 -3 2 4 -4 3zM519 128l9 -6 3 5 -9 6zM187 352l4 -3 3 4 -5 3zM387 414l7 -4 3 5 -6 4zM208 363l5 -4 2 3 -5 4zM659 505l5 -4 3 5 -5 3zM700 456l7 -5 4 5 -7 5zM460 459l6 -4 2 3 -6 4zM503 178l7 -4 3 5 -7 5zM717 431l9 -5 3 6 -8 5zM619 675l8 -5 3 4 -8 5zM425 220l8 -5 2 3 -8 5zM266 673l9 -6 3 4 -9 6zM639 569l8 -5 3 5 -8 5zM450 155l5 -3 3 5 -5 3zM285 479l9 -5 2 4 -8 5zM183 237l7 -4 3 3 -8 5zM490 4l8 -5 3 4 -8 6zM331 218l8 -5 4 6 -8 5zM712 546l6 -4 3 4 -6 4zM412 650l4 -2 4 5 -5 3zM755 507l7 -5 4 6 -8 5zM664 506l6 -4 3 5 -6 3zM511 260l8 -5 3 4 -8 5zM376 153l5 -4 4 6 -6 3zM188 26l5 -3 2 4 -5 3zM262 616l9 -5 3 5 -9 5zM303 478l9 -6 3 4 -9 6zM546 522l5 -3 3 3 -6 4zM686 630l8 -5 3 4 -9 6zM640 292l9 -6 3 5 -9 6zM717 468l5 -3 2 3 -4 3zM622 591l8 -6 2 5 -8 5zM280 494l6 -4 2 4 -6 4zM477 451l5 -3 3 4 -5 4zM464 129l7 -4 3 5 -6 5zM180 236l9 -6 2 3 -9 6zM147 222l4 -3 3 4 -5 3zM567 355l9 -6 4 6 -9 6zM557 550l8 -5 2 3 -8 5zM450 223l8 -6 4 5 -8 6zM277 321l7 -4 4 5 -7 5zM429 435l7 -4 3 5 -6 4zM379 166l6 -4 4 5 -7 4zM401 39l9 -6 2 4 -9 5zM77 156l6 -3 2 4 -5 3zM434 438l5 -4 3 4 -6 4zM268 573l7 -4 2 4 -6 4zM427 433l5 -3 4 5 -5 3zM300 176l7 -4 3 4 -7 4zM442 598l7 -5 3 4 -7 5zM622 374l6 -4 3 5 -6 4zM106 87l7 -4 2 3 -7 5zM558 482l5 -3 2 3 -5 3zM116 18l7 -5 3 6 -6 4zM313 312l9 -5 2 3 -8 6zM407 455l6 -4 3 5 -6 3zM565 361l8 -5 3 4 -8 5zM314 657l9 -6 3 5 -9 6zM450 543l4 -3 4 5 -5 3zM274 208l8 -6 3 4 -9 6zM172 36l5 -3 3 5 -5 3zM277 499l5 -3 4 5 -6 3zM403 386l5 -3 2 3 -5 4zM311 104l7 -5 3 5 -7 4zM703 416l8 -6 3 5 -8 5zM391 664l6 -4 2 3 -6 4zM297 619l6 -4 3 5 -6 4zM293 540l7 -4 4 5 -7 5zM706 682l6 -4 3 4 -6 4zM64 199l5 -3 3 4 -5 3zM61 151l4 -3 3 4 -5 2zM38 153l7 -4 2 3 -7 4zM226 347l9 -6 4 6 -9 6zM313 300l6 -5 2 4 -6 4zM185 27l6 -5 3 5 -6 4zM446 425l4 -3 2 3 -4 3zM684 563l9 -6 2 4 -9 6zM560 468l7 -4 3 4 -7 4zM258 60l8 -5 3 5 -8 5zM518 354l6 -4 4 5 -7 4zM289 194l4 -3 3 6 -4 3zM185 473l7 -5 3 6 -7 5zM668 326l9 -5 2 3 -8 6zM111 332l8 -4 2 3 -7 5zM305 268l4 -3 3 4 -5 3zM246 258l7 -6 3 5 -8 5zM388 234l7 -5 2 4 -7 4zM482 547l9 -6 4 6 -9 6zM242 419l5 -4 3 5 -5 4zM326 412l7 -4 2 3 -7 4zM426 186l5 -3 3 6 -5 3zM606 406l5 -3 4 5 -6 3zM363 693l9 -6 2 3 -10 6zM403 634l5 -3 3 5 -5 3zM490 342l5 -2 3 5 -4 3zM691 387l8 -4 3 5 -7 4zM372 193l7 -4 3 5 -6 4zM675 495l9 -5 3 4 -9 6zM659 638l9 -6 3 5 -8 6zM635 446l7 -5 2 4 -6 4zM247 468l4 -2 4 5 -5 3zM472 180l8 -5 3 4 -8 5zM166 368l6 -4 2 5 -5 3zM223 339l7 -4 3 5 -6 4zM303 521l9 -6 3 6 -8 6zM319 580l6 -4 2 4 -6 4zM228 181l8 -5 2 4 -8 5zM377 585l8 -5 3 5 -8 5zM89 230l5 -3 3 6 -4 3zM667 586l9 -6 3 5 -9 5zM683 459l9 -6 4 5 -9 6zM407 328l5 -3 3 4 -5 3zM240 291l6 -4 4 5 -6 4zM109 11l5 -3 3 4 -5 3zM600 465l5 -4 3 4 -6 3zM673 431l6 -4 3 5 -6 3zM247 73l8 -5 2 3 -7 5zM523 349l8 -5 3 5 -8 5zM271 162l7 -4 3 6 -6 4zM510 388l8 -6 3 4 -9 5zM447 545l5 -4 3 3 -6 4zM378 120l5 -4 4 6 -6 3zM121 414l9 -6 3 5 -9 5zM303 376l7 -4 2 3 -6 5zM322 632l9 -6 2 4 -8 5zM100 337l4 -3 3 5 -4 3zM260 73l7 -4 3 3 -7 5zM499 158l8 -6 4 5 -9 6zM348 173l7 -4 3 5 -7 4zM408 88l9 -5 3 4 -9 6zM337 264l5 -3 3 4 -5 3zM143 224l6 -4 4 6 -7 4zM357 432l6 -4 3 5 -6 4zM532 294l6 -3 2 3 -6 4zM538 540l5 -3 2 3 -5 3zM467 71l5 -4 3 4 -6 3zM596 230l8 -5 2 3 -8 5zM286 600l6 -4 2 4 -5 4zM361 313l4 -3 3 4 -5 3zM403 299l7 -4 2 3 -7 4zM279 390l7 -5 3 4 -7 6zM288 246l7 -5 3 4 -8 5zM238 577l4 -3 3 4 -4 3zM222 640l9 -6 3 5 -9 6zM488 233l7 -4 2 5 -6 4zM390 311l9 -6 3 5 -9 6zM582 386l6 -3 2 3 -6 4zM681 692l5 -3 3 4 -5 4zM556 587l8 -6 2 4 -8 5zM565 566l8 -4 3 5 -7 5zM447 15l7 -5 3 6 -7 4zM643 450l9 -6 2 3 -9 6zM219 468l8 -5 2 3 -8 5zM701 665l9 -6 4 5 -10 6zM715 679l6 -4 2 3 -6 4zM284 192l5 -3 3 5 -5 3zM478 523l6 -4 3 5 -6 4zM640 667l8 -5 3 5 -8 6zM93 139l9 -6 2 4 -9 6zM413 82l8 -5 3 5 -8 5zM450 265l5 -3 3 6 -4 3zM168 559l4 -3 2 4 -4 3zM515 327l7 -5 3 5 -7 4zM254 438l9 -6 3 5 -9 6zM264 563l7 -4 3 6 -6 3zM302 24l9 -6 3 6 -8 5zM295 690l7 -5 3 5 -7 4zM406 192l8 -5 2 3 -8 5zM286 506l4 -3 3 5 -4 3zM745 551l7 -4 3 5 -7 4zM251 221l5 -4 3 4 -6 4zM384 596l4 -3 4 5 -5 3zM543 399l9 -5 3 4 -9 6zM222 191l6 -4 3 5 -6 4zM311 521l5 -3 3 4 -5 3zM311 205l5 -3 2 4 -4 3zM520 181l6 -4 4 6 -6 4zM688 362l7 -5 3 5 -7 5zM600 420l9 -6 3 4 -9 6zM674 489l6 -4 3 4 -6 4zM329 380l5 -4 3 4 -5 3zM95 332l6 -4 3 4 -6 3zM350 509l9 -5 3 5 -9 6zM345 59l5 -3 3 5 -5 3zM357 153l8 -5 2 4 -7 5zM307 355l4 -3 4 6 -5 3zM447 154l8 -5 4 6 -8 5zM279 605l6 -4 2 4 -6 3zM395 403l5 -3 2 3 -5 4zM463 355l5 -4 2 4 -5 3zM202 269l5 -3 3 5 -5 3zM279 487l9 -6 3 4 -9 6zM57 136l6 -4 4 6 -6 4zM715 608l5 -3 3 4 -6 3zM226 151l8 -6 2 4 -8 5zM621 557l5 -4 3 5 -5 3zM81 1l6 -4 3 5 -5 4zM174 338l6 -4 3 4 -7 4zM333 133l7 -5 3 4 -8 5zM110 290l7 -4 3 4 -7 5zM368 208l7 -5 2 3 -7 5zM316 125l5 -3 3 5 -4 3zM366 349l7 -5 3 4 -8 5zM378 210l6 -5 3 4 -7 4zM181 571l7 -4 2 3 -7 5zM271 16l6 -4 4 6 -6 4zM112 320l4 -3 4 5 -5 3zM207 111l7 -4 4 5 -7 5zM193 85l5 -3 2 3 -5 4zM304 664l6 -4 3 4 -6 4zM304 694l6 -4 3 5 -6 4zM381 284l8 -5 2 4 -7 5zM353 497l4 -2 3 4 -4 2zM707 573l5 -3 2 4 -4 3zM221 157l6 -4 3 5 -6 4zM703 666l7 -5 3 3 -8 5zM645 365l6 -3 3 5 -5 4zM221 26l5 -4 3 4 -6 4zM565 240l5 -3 2 3 -5 3zM344 72l4 -2 3 5 -4 2zM664 683l5 -4 3 4 -6 3zM13 70l4 -3 3 4 -5 3zM725 518l7 -4 3 4 -7 5zM331 45l6 -3 3 4 -6 4zM475 24l5 -4 3 4 -6 4zM487 243l8 -5 2 3 -8 5zM598 411l6 -4 3 5 -6 4zM441 546l7 -4 2 4 -6 4zM520 129l9 -6 2 4 -8 6zM392 533l5 -3 2 3 -5 4zM93 139l6 -4 3 5 -6 4zM209 449l7 -5 2 3 -7 4zM140 543l8 -5 2 3 -7 5zM662 595l6 -4 2 4 -6 4zM517 428l8 -6 3 4 -9 6zM556 528l9 -6 3 4 -9 6zM236 427l7 -4 3 4 -7 5zM244 34l5 -3 2 4 -5 3zM294 214l8 -6 4 6 -9 5zM390 337l4 -3 4 6 -5 3zM390 191l6 -4 4 6 -7 4zM474 68l7 -5 2 3 -7 5zM255 239l5 -4 4 6 -6 3zM342 383l6 -4 3 6 -5 3zM157 301l8 -5 4 5 -9 6zM626 518l5 -4 3 5 -5 3zM211 357l5 -3 3 5 -5 3zM485 153l5 -4 3 6 -4 3zM725 670l5 -3 4 5 -5 3zM289 364l9 -5 3 4 -9 6zM395 220l5 -3 3 6 -4 3zM640 315l7 -5 2 3 -7 5zM256 197l6 -3 3 5 -6 4zM545 486l7 -4 3 4 -7 5zM156 431l7 -4 3 4 -7 5zM637 386l4 -3 3 4 -4 3zM228 598l5 -3 3 6 -5 3zM347 204l7 -5 3 5 -6 5zM111 405l7 -4 3 5 -7 4zM585 268l9 -6 3 5 -9 5zM308 402l6 -4 2 4 -6 4zM730 498l5 -3 4 5 -6 4zM57 245l9 -6 3 6 -9 6zM242 50l7 -5 3 5 -8 4zM226 153l7 -5 3 6 -6 4zM568 476l5 -3 2 4 -4 3zM576 413l6 -4 2 4 -6 4zM194 376l9 -6 2 4 -9 6zM629 346l8 -5 3 4 -8 5zM260 476l9 -6 3 4 -9 6zM185 369l5 -3 3 4 -5 3zM605 465l8 -6 2 4 -8 5zM271 248l7 -5 4 5 -7 5zM599 556l6 -4 3 5 -6 4zM439 39l7 -4 2 3 -7 5zM231 51l5 -3 4 5 -5 3zM122 395l6 -5 4 5 -7 5zM282 537l8 -5 3 4 -9 5zM238 186l9 -5 3 4 -9 6zM222 16l4 -3 3 4 -4 3zM135 108l5 -3 4 5 -5 3zM143 276l8 -5 3 5 -7 5zM203 63l5 -3 3 5 -4 3zM383 663l8 -5 3 6 -8 5zM502 197l8 -5 4 5 -9 6zM665 318l6 -4 4 5 -7 4zM55 123l6 -4 4 6 -6 4zM158 564l5 -3 4 5 -6 4zM559 470l5 -3 2 4 -4 3zM472 317l6 -4 3 5 -6 3zM254 200l7 -4 3 4 -7 4zM114 193l9 -6 3 5 -9 5zM362 634l7 -4 3 5 -7 4zM535 180l8 -5 3 4 -8 5zM579 379l7 -5 4 5 -8 5zM340 78l7 -5 3 5 -7 5zM499 533l5 -3 4 5 -5 4zM412 270l8 -6 3 5 -8 6zM328 148l4 -3 3 5 -4 2zM105 123l8 -5 2 4 -8 5zM250 57l6 -4 4 6 -6 4zM697 431l7 -5 3 4 -8 5zM371 602l7 -5 3 5 -7 4zM358 680l9 -6 4 6 -9 6zM171 347l7 -4 3 3 -7 5zM194 431l5 -3 3 4 -5 3zM685 449l4 -3 3 4 -5 3zM363 388l5 -3 3 4 -5 4zM190 357l7 -4 2 3 -6 5zM501 474l8 -5 2 3 -8 6zM447 500l6 -4 3 4 -7 4zM240 48l4 -3 4 6 -5 3zM384 407l4 -3 2 3 -4 3zM450 246l5 -3 3 4 -6 3zM533 224l9 -6 2 4 -9 6zM73 136l8 -5 3 3 -9 5zM401 503l9 -6 3 5 -8 6zM387 571l10 -6 3 6 -9 6zM354 17l7 -5 2 3 -7 5zM369 584l5 -4 3 3 -6 4zM105 144l9 -5 3 5 -9 5zM270 455l6 -3 3 5 -6 3zM444 37l5 -3 2 4 -5 3zM374 396l6 -4 3 4 -6 3zM481 501l9 -6 3 5 -9 6zM555 337l6 -4 3 4 -6 4zM243 396l8 -5 3 6 -8 5zM343 432l7 -5 2 4 -7 4zM400 195l5 -3 2 4 -5 3zM299 594l7 -4 3 4 -6 4zM436 420l5 -3 3 5 -5 3zM235 305l10 -6 2 4 -9 6zM211 387l5 -3 3 5 -5 3zM519 332l7 -4 2 3 -7 5zM158 266l4 -3 3 4 -5 3zM337 78l6 -4 3 5 -5 4zM560 445l7 -5 2 4 -7 4zM342 276l6 -4 3 4 -6 4zM446 107l5 -3 3 5 -5 3zM401 210l7 -4 2 3 -7 5zM466 95l8 -5 2 4 -8 5zM172 359l6 -4 4 5 -6 4zM418 324l8 -6 4 5 -9 6zM337 313l9 -6 2 3 -9 6zM491 386l5 -3 2 3 -5 3zM262 585l6 -4 3 5 -6 4zM404 124l5 -3 2 3 -5 3zM628 557l7 -4 3 5 -6 4zM286 61l5 -2 2 4 -4 3zM482 474l9 -5 2 3 -8 6zM605 592l7 -5 3 5 -7 4zM233 209l6 -4 3 6 -6 4zM115 214l5 -3 3 5 -5 3zM379 417l8 -4 3 5 -8 5zM49 228l8 -5 3 5 -7 5zM729 538l6 -4 3 5 -6 4zM716 610l6 -4 2 3 -6 4zM264 380l7 -5 3 6 -7 4zM505 116l5 -3 4 5 -5 3zM628 691l5 -4 3 4 -6 3zM79 160l8 -5 4 5 -9 6zM70 225l8 -5 4 5 -9 6zM280 223l9 -6 3 5 -9 6zM570 207l5 -3 2 4 -4 3zM131 407l5 -4 2 3 -5 4zM605 653l7 -5 3 5 -7 4zM314 84l9 -6 2 3 -9 6zM420 400l4 -3 3 4 -4 3zM462 159l7 -5 2 4 -7 4zM70 269l6 -3 2 2 -6 4zM397 351l7 -5 3 4 -8 5zM133 391l5 -2 2 4 -4 3zM306 605l7 -5 2 3 -7 5zM513 305l9 -6 2 3 -9 6zM216 179l9 -6 4 6 -9 6zM243 285l7 -4 3 5 -7 4zM152 340l7 -4 2 3 -7 4zM250 485l8 -6 3 5 -9 5zM544 163l9 -5 3 4 -9 6zM622 535l5 -3 2 4 -4 3zM526 527l4 -3 2 4 -4 2zM387 346l6 -4 4 5 -7 4zM144 239l7 -5 2 4 -7 4zM208 463l9 -6 2 3 -9 6zM472 318l6 -3 3 4 -6 3zM349 604l8 -6 4 6 -8 5zM223 369l6 -3 2 4 -5 3zM433 188l6 -4 4 6 -7 4zM582 562l5 -3 2 4 -4 3zM169 55l4 -3 3 4 -5 3zM617 420l5 -4 3 4 -6 4zM271 60l5 -3 4 6 -5 3zM365 230l6 -4 3 4 -6 4zM487 29l5 -3 3 5 -5 3zM416 435l7 -5 3 4 -8 5zM141 206l8 -5 2 3 -8 5zM289 693l5 -3 3 5 -5 3zM377 446l7 -4 3 5 -6 4zM324 646l6 -4 3 4 -6 4zM545 385l7 -5 2 4 -7 5zM325 153l8 -5 3 4 -8 6zM580 542l5 -3 4 5 -5 4zM548 375l8 -5 3 4 -8 5zM423 12l6 -3 3 5 -5 4zM33 140l5 -4 3 5 -5 3zM350 205l8 -6 3 3 -9 6zM586 525l7 -5 3 5 -7 5zM464 195l6 -3 2 3 -5 4zM61 196l8 -5 2 3 -8 5zM442 243l8 -5 2 4 -7 5zM107 117l6 -4 3 5 -6 4zM310 111l8 -6 4 5 -9 6zM371 106l7 -5 2 3 -7 5zM199 582l8 -6 4 5 -9 6zM111 462l5 -3 3 4 -5 3zM427 373l6 -4 3 5 -6 3zM696 429l7 -5 4 5 -8 5zM557 551l8 -5 3 5 -7 5zM724 518l6 -4 4 5 -7 4zM630 459l4 -3 3 4 -5 3zM215 46l4 -3 3 4 -5 3zM656 476l4 -3 2 3 -4 3zM726 514l7 -4 3 4 -7 5zM638 329l8 -5 3 4 -9 5zM280 568l6 -3 3 5 -5 3zM301 192l9 -5 2 4 -8 6zM572 474l4 -3 3 4 -4 3zM388 189l6 -4 4 6 -7 4zM430 223l6 -4 4 5 -6 4zM535 149l7 -5 3 4 -8 5zM448 147l6 -4 2 4 -5 3zM314 642l5 -3 4 5 -5 4zM308 405l5 -3 3 4 -5 3zM379 528l7 -4 3 4 -7 5zM249 235l9 -5 2 3 -8 6zM221 269l6 -3 3 4 -6 4zM500 248l9 -6 2 3 -9 6zM470 476l5 -4 2 4 -5 3zM637 552l7 -4 3 4 -7 5zM348 275l6 -4 3 4 -6 4zM230 202l7 -4 3 5 -7 4zM240 461l9 -6 3 6 -8 5zM579 520l6 -4 3 4 -6 5zM668 605l8 -6 3 5 -8 5zM163 48l7 -4 2 3 -7 5zM563 242l8 -6 2 4 -8 5zM253 328l4 -2 3 5 -4 2zM582 610l5 -3 2 3 -4 3zM332 56l8 -5 3 4 -8 5zM120 164l5 -4 3 5 -5 4zM206 580l6 -4 3 4 -7 4zM464 2l9 -6 2 4 -9 6zM69 169l8 -5 2 3 -8 5zM401 350l9 -5 2 4 -9 5zM527 347l5 -3 2 4 -5 3zM749 657l8 -5 2 4 -7 5zM267 248l8 -5 2 3 -8 5zM579 540l9 -5 3 5 -8 6zM385 612l6 -3 3 4 -6 4zM87 108l6 -4 2 4 -6 4zM611 299l7 -4 3 5 -7 4zM247 440l5 -3 2 4 -4 3zM109 89l4 -4 4 6 -5 3zM406 232l5 -3 3 5 -4 3zM186 588l8 -6 3 4 -8 5zM557 484l6 -3 2 3 -6 4zM338 177l8 -6 3 5 -8 6zM531 141l8 -5 2 3 -8 5zM486 271l9 -6 4 6 -9 6zM624 515l7 -4 2 4 -6 5zM237 366l9 -6 4 5 -9 6zM342 9l9 -5 2 3 -9 6zM326 289l8 -5 3 5 -8 5zM263 126l7 -4 4 5 -8 5zM342 397l7 -5 4 6 -7 5zM193 595l7 -5 3 5 -7 4zM376 206l6 -3 3 4 -6 3zM253 78l7 -4 4 6 -7 4zM317 412l6 -4 3 5 -6 3zM415 97l7 -4 4 5 -7 5zM539 251l7 -5 2 4 -7 5zM434 91l4 -3 2 3 -4 3zM163 297l5 -3 4 5 -6 3zM543 466l5 -3 3 6 -4 3zM269 147l4 -3 3 3 -5 3zM608 235l9 -6 3 5 -9 6zM500 392l5 -4 3 5 -5 4zM203 341l9 -5 3 5 -9 5zM257 144l8 -5 3 5 -8 5zM674 453l5 -4 4 6 -6 4zM672 459l8 -5 4 5 -9 6zM610 565l5 -3 3 5 -5 3zM425 76l9 -5 3 4 -9 6zM366 589l5 -3 2 4 -5 3zM604 236l5 -3 2 4 -4 3zM232 605l6 -4 3 5 -6 4zM468 336l5 -4 3 5 -6 3zM437 468l5 -3 2 3 -5 3zM441 475l7 -4 2 3 -7 4zM423 287l6 -4 2 3 -6 4zM359 260l5 -3 3 4 -5 4zM243 393l5 -3 4 6 -5 3zM121 425l5 -3 3 4 -5 3zM193 273l9 -6 3 4 -9 6zM186 345l5 -3 3 4 -5 3zM356 10l6 -4 3 6 -5 3zM705 404l7 -4 3 5 -7 4zM385 677l9 -6 2 3 -9 6zM628 431l5 -3 3 4 -5 3zM388 55l5 -3 2 4 -4 3zM354 162l8 -5 2 3 -8 5zM574 518l8 -5 3 4 -8 5zM500 20l7 -5 2 4 -6 5zM329 400l8 -6 3 4 -9 6zM481 436l6 -3 4 5 -6 4zM519 204l9 -6 3 5 -9 5zM332 308l6 -4 2 4 -6 4zM361 323l6 -3 2 3 -6 3zM32 135l6 -4 3 4 -6 5zM510 422l8 -5 2 4 -7 5zM353 69l5 -3 3 4 -5 4zM339 656l9 -5 3 4 -9 6zM349 200l9 -6 2 5 -8 5zM498 404l5 -3 3 4 -5 3zM261 185l9 -5 3 5 -9 5zM651 655l7 -5 4 5 -8 5zM298 411l7 -4 2 3 -7 4zM380 16l6 -4 4 5 -6 4zM281 537l6 -4 2 3 -6 4zM352 341l5 -3 3 5 -4 3zM331 444l5 -3 2 4 -4 3zM208 306l8 -5 2 4 -7 5zM671 579l8 -6 3 5 -8 6zM469 458l7 -4 2 3 -7 4zM230 364l8 -5 3 4 -8 5zM155 422l9 -6 4 6 -9 6zM538 326l5 -4 3 6 -4 3zM396 606l6 -5 2 3 -6 5zM389 457l5 -4 3 5 -6 3zM360 572l8 -5 3 4 -8 5zM561 546l4 -3 3 4 -5 3zM441 304l6 -3 3 5 -5 4zM672 456l9 -6 2 3 -9 6zM244 181l5 -3 4 5 -5 4zM323 524l8 -5 3 5 -8 5zM102 88l8 -5 2 4 -7 4zM690 618l8 -6 3 5 -8 6zM370 636l7 -5 3 4 -7 5zM170 346l7 -4 2 4 -7 4zM342 658l5 -3 2 4 -5 3zM533 540l7 -4 3 4 -7 5zM594 415l8 -5 3 6 -7 5zM402 354l9 -6 3 6 -8 5zM314 460l5 -4 2 3 -5 4zM568 466l9 -6 4 5 -9 6zM444 370l6 -4 2 4 -6 4zM246 452l6 -3 3 4 -6 4zM283 480l4 -3 2 3 -4 3zM235 371l5 -3 3 5 -4 3zM246 145l5 -3 3 4 -5 3zM161 412l6 -3 3 5 -6 3zM342 320l7 -4 3 5 -7 5zM617 597l6 -4 3 5 -6 4zM412 127l6 -4 2 4 -5 4zM374 41l9 -6 2 4 -8 6zM510 318l4 -3 3 4 -5 3zM296 153l5 -4 2 4 -4 3zM438 370l8 -5 3 4 -8 5zM326 508l5 -3 3 5 -5 3zM646 323l5 -4 2 3 -5 4zM347 462l8 -5 2 3 -8 5zM535 288l5 -4 4 5 -6 4zM388 344l5 -4 3 3 -6 4zM129 354l8 -5 3 5 -8 6zM101 407l5 -4 2 4 -5 3zM375 90l5 -3 4 5 -5 3zM519 229l8 -5 2 4 -7 5zM706 675l9 -5 3 3 -9 6zM663 364l6 -4 2 3 -6 4zM167 55l8 -6 2 4 -8 6zM244 354l7 -5 3 4 -8 5zM372 329l9 -5 2 3 -9 5zM69 163l5 -4 3 5 -5 3zM726 611l4 -3 3 4 -5 3zM310 612l5 -4 3 5 -5 3zM334 239l8 -5 2 3 -9 5zM337 660l8 -5 2 4 -8 5zM354 187l8 -5 3 4 -8 5zM218 18l7 -4 3 4 -7 5zM407 376l8 -6 3 4 -8 6zM295 191l6 -4 3 5 -6 3zM333 389l6 -4 2 3 -6 5zM558 529l8 -6 4 6 -9 5zM320 274l5 -3 3 4 -6 3zM684 608l5 -3 2 4 -4 3zM373 218l8 -4 3 5 -7 4zM318 692l6 -4 3 6 -6 3zM390 189l6 -4 2 4 -5 4zM699 627l7 -5 2 3 -7 5zM268 375l7 -5 3 6 -6 4zM384 696l5 -3 3 4 -5 3zM673 588l8 -6 2 4 -8 5zM338 640l9 -6 4 5 -9 6zM106 441l9 -6 2 4 -9 5zM486 467l7 -4 3 5 -6 5zM176 333l8 -5 3 4 -8 5zM439 496l5 -3 4 6 -5 3zM360 56l8 -5 2 3 -8 5zM294 239l9 -6 3 5 -9 5zM393 343l6 -4 3 4 -6 4zM251 483l9 -6 2 4 -9 6zM220 487l5 -3 3 5 -5 3zM569 478l6 -4 3 5 -6 4zM355 433l7 -5 2 3 -8 5zM148 548l5 -4 3 4 -5 4zM349 546l6 -4 3 4 -7 5zM669 374l9 -6 3 5 -8 6zM303 208l8 -5 3 4 -9 5zM492 452l5 -3 2 4 -4 3zM216 119l5 -3 3 4 -5 3zM669 651l9 -5 2 4 -8 5zM400 518l5 -3 3 4 -5 4zM250 332l5 -3 3 5 -5 3zM408 552l8 -5 4 4 -9 6zM515 385l7 -5 3 4 -7 5zM427 478l5 -3 3 4 -5 4zM395 108l5 -3 3 3 -6 4zM465 402l6 -4 3 5 -6 4zM61 130l6 -4 2 4 -6 3zM637 614l8 -5 2 3 -8 5zM717 576l9 -6 3 5 -9 6zM398 176l5 -4 3 5 -5 3zM500 279l9 -6 3 5 -9 6zM339 141l7 -4 3 4 -7 5zM144 541l5 -3 3 5 -5 3zM360 289l9 -6 3 5 -9 6zM358 62l6 -4 3 5 -5 4zM324 268l9 -5 2 4 -8 5zM345 365l8 -5 3 5 -7 5zM20 126l6 -4 3 4 -6 4zM330 598l7 -4 2 4 -6 4zM629 433l5 -3 3 5 -4 3zM331 621l8 -5 3 6 -8 5zM319 96l8 -6 3 4 -9 6zM183 178l8 -5 3 3 -8 5zM453 478l7 -5 3 5 -7 5zM525 275l5 -3 4 4 -6 4zM487 434l9 -5 3 5 -8 5zM355 158l4 -3 3 5 -4 3zM236 213l5 -3 2 4 -4 3zM174 465l6 -4 2 4 -5 3zM129 446l8 -5 3 5 -7 5zM381 28l5 -3 2 4 -5 3zM403 125l6 -3 3 5 -5 3zM256 284l7 -5 2 3 -7 5zM93 360l6 -3 2 3 -6 3zM719 516l6 -4 3 5 -6 3zM496 538l5 -3 3 5 -4 3zM163 24l7 -5 2 3 -7 5zM321 28l7 -5 2 4 -7 5zM432 420l8 -5 3 4 -8 5zM259 512l5 -3 3 5 -5 3zM393 681l6 -3 3 4 -6 4zM518 77l6 -4 2 4 -7 3zM224 314l8 -5 2 3 -8 6zM410 282l5 -4 3 4 -5 4zM218 622l7 -5 4 6 -7 5zM685 465l7 -5 3 5 -7 5zM208 332l7 -4 4 5 -7 5zM684 670l6 -4 2 3 -5 4zM382 4l8 -5 3 4 -8 5zM377 311l7 -4 2 4 -6 5zM573 566l6 -3 2 3 -6 4zM141 123l5 -4 4 5 -6 4zM161 346l7 -4 3 4 -7 4zM363 565l7 -5 2 4 -7 5zM252 463l9 -6 3 4 -9 6zM714 443l7 -5 4 6 -7 4zM190 574l8 -5 2 3 -8 5zM519 344l6 -4 3 4 -6 3zM259 507l8 -6 2 4 -8 5zM581 523l9 -6 3 4 -9 6zM59 127l8 -6 3 5 -9 5zM457 41l6 -4 2 4 -6 3zM309 398l5 -4 3 6 -5 3zM516 378l7 -5 2 4 -7 5zM262 549l7 -5 3 4 -8 5zM442 311l9 -5 3 3 -9 6zM680 361l4 -3 3 4 -4 3zM496 387l6 -4 3 4 -7 4zM539 140l6 -4 3 4 -6 4zM213 257l5 -3 2 3 -5 4zM425 371l6 -3 2 4 -5 4zM138 50l8 -5 3 5 -8 5zM361 103l6 -4 3 5 -6 3zM648 687l8 -5 4 5 -9 6zM613 534l4 -3 3 4 -5 3zM500 16l5 -3 4 5 -5 3zM522 135l7 -4 2 3 -7 4zM303 417l7 -4 2 3 -7 5zM338 622l5 -3 3 5 -5 4zM485 340l8 -5 2 3 -8 5zM213 147l7 -4 2 3 -7 4zM184 178l6 -4 3 5 -6 4zM425 455l8 -5 3 5 -7 5zM433 16l6 -4 3 4 -7 4zM211 361l9 -6 3 5 -9 6zM472 180l7 -5 2 4 -7 4zM495 27l4 -3 4 6 -4 3zM512 196l8 -5 2 4 -7 4zM547 576l6 -4 2 3 -6 4zM406 274l5 -3 3 5 -5 3zM154 466l8 -5 4 5 -9 6zM223 157l5 -3 3 5 -5 4zM159 425l5 -3 2 3 -5 3zM459 431l8 -6 2 4 -8 5zM394 201l5 -4 2 4 -5 3zM496 507l8 -5 4 5 -9 5zM68 244l8 -5 2 4 -8 5zM374 472l7 -4 3 4 -7 4zM614 603l6 -4 3 4 -6 4zM171 15l9 -5 2 3 -9 5zM546 422l7 -5 4 6 -8 5zM313 417l9 -6 3 5 -9 6zM429 604l9 -5 3 4 -9 6zM402 10l9 -6 4 5 -9 6zM433 136l8 -5 3 4 -8 6zM563 331l5 -4 3 6 -5 3zM116 460l8 -5 3 4 -8 5zM200 56l8 -5 3 4 -9 5zM128 218l4 -3 3 4 -5 3zM324 230l4 -3 2 4 -4 3zM513 261l8 -5 3 4 -8 5zM546 467l6 -4 2 3 -6 4zM174 299l7 -5 2 4 -6 4zM376 456l7 -4 3 5 -7 4zM747 513l9 -5 3 4 -9 6zM513 182l9 -6 3 4 -9 6zM452 154l5 -4 3 4 -5 4zM485 389l5 -3 3 5 -5 3zM559 260l9 -6 3 5 -9 6zM213 345l8 -5 4 5 -8 6zM127 476l7 -5 4 6 -7 4zM529 408l5 -3 3 4 -5 3zM397 600l7 -5 3 4 -7 4zM344 87l6 -4 3 4 -6 4zM82 339l6 -3 2 3 -5 4zM680 451l4 -3 3 5 -5 2zM381 686l7 -5 4 6 -7 4zM472 210l9 -6 3 6 -8 6zM595 264l8 -6 3 5 -8 6zM557 389l4 -3 4 5 -4 3zM471 504l5 -3 2 3 -5 3zM588 305l8 -5 2 3 -8 6zM117 187l8 -6 2 4 -8 5zM188 339l9 -6 4 6 -9 6zM751 563l5 -3 4 6 -5 3zM489 25l7 -5 3 5 -7 5zM377 167l9 -6 4 6 -9 6zM648 662l9 -6 2 4 -8 6zM371 470l8 -5 4 5 -8 5zM399 203l5 -3 3 4 -5 4zM196 342l7 -5 3 5 -7 5zM509 537l7 -5 3 4 -8 5zM191 41l7 -5 2 3 -7 5zM435 128l5 -3 4 5 -6 4zM222 297l4 -3 2 3 -4 3zM635 296l7 -5 3 5 -7 5zM391 359l5 -3 3 4 -6 3zM453 24l6 -4 2 5 -5 3zM341 155l5 -3 3 3 -6 4zM317 35l4 -4 4 6 -5 3zM731 606l6 -4 3 4 -7 4zM156 332l7 -5 2 3 -7 5zM390 133l5 -4 4 6 -6 3zM210 388l8 -5 2 3 -8 5zM418 646l8 -5 4 5 -9 5zM327 25l5 -4 3 5 -5 3zM368 468l8 -6 3 5 -8 5zM671 595l4 -3 3 4 -5 3zM613 405l8 -5 3 4 -8 6zM346 118l8 -6 2 3 -8 6zM280 528l6 -4 3 4 -6 4zM110 11l5 -4 2 3 -5 4zM427 71l9 -6 3 5 -8 6zM206 275l8 -6 3 6 -8 5zM5 116l7 -4 3 6 -6 4zM735 623l7 -4 3 4 -7 5zM610 245l6 -3 2 4 -5 3zM451 490l8 -5 2 3 -7 5zM636 392l8 -5 2 3 -8 5zM101 122l8 -6 4 6 -8 5zM259 21l4 -3 2 3 -4 3zM380 196l9 -6 2 3 -9 6zM297 459l9 -6 2 3 -9 6zM159 254l7 -5 3 3 -8 6zM342 241l9 -6 3 5 -9 6zM296 81l8 -5 4 5 -8 5zM89 124l4 -2 3 4 -4 2zM240 63l9 -5 3 5 -8 6zM183 374l6 -4 2 3 -5 4zM403 154l6 -4 3 3 -6 4zM104 308l9 -6 3 4 -9 6zM367 371l4 -3 3 4 -5 3zM165 349l7 -4 2 3 -6 4zM241 567l5 -3 3 6 -4 3zM619 639l7 -5 3 4 -8 5zM651 357l6 -3 3 4 -5 4zM578 559l6 -4 2 4 -6 4zM107 199l6 -4 3 4 -6 4zM346 87l9 -6 3 5 -9 6zM204 266l5 -3 3 5 -5 3zM275 648l7 -5 3 5 -7 5zM283 473l6 -4 4 6 -7 4zM502 291l8 -6 3 5 -8 5zM142 459l6 -3 2 3 -6 3zM220 470l7 -4 2 4 -6 5zM623 283l8 -5 3 4 -8 5zM100 367l6 -4 3 4 -6 5zM427 109l5 -3 4 5 -5 3zM715 570l7 -5 4 6 -7 4zM31 160l7 -5 3 4 -8 5zM362 604l6 -4 3 5 -6 3zM651 467l7 -4 3 5 -7 4zM178 171l4 -3 3 5 -4 2zM223 274l5 -4 2 5 -4 3zM304 341l7 -4 3 5 -7 4zM162 162l6 -4 3 5 -6 4zM190 15l7 -5 4 6 -7 4zM457 217l6 -4 4 5 -7 4zM94 357l7 -4 2 4 -7 5zM200 20l9 -6 3 4 -9 6zM142 430l7 -5 3 5 -7 4zM220 456l5 -3 3 6 -4 2zM290 690l8 -5 3 4 -8 5zM441 301l7 -4 3 5 -7 4zM346 684l9 -6 2 5 -8 5zM410 53l7 -5 2 3 -7 5zM487 371l5 -3 2 3 -5 3zM73 253l6 -4 2 4 -6 4zM160 39l5 -3 4 5 -5 3zM366 180l5 -3 3 5 -5 3zM591 244l4 -3 2 4 -4 3zM666 327l4 -3 3 5 -4 3zM254 280l7 -5 3 5 -7 5zM244 30l8 -5 3 5 -8 4zM377 221l5 -3 2 3 -5 3zM496 95l7 -5 3 4 -7 5zM521 368l9 -6 3 5 -9 6zM533 156l8 -5 4 5 -8 6zM361 168l6 -3 2 4 -5 4zM648 456l9 -5 2 3 -9 5zM386 122l9 -6 2 3 -9 6zM391 342l6 -4 4 6 -6 3zM199 364l6 -4 3 5 -6 4zM344 265l6 -4 3 4 -6 5zM423 611l7 -5 3 4 -8 5zM200 312l8 -5 3 6 -8 5zM301 105l7 -5 3 4 -7 5zM269 420l5 -3 4 5 -5 3zM466 233l9 -6 3 4 -9 6zM361 570l4 -3 3 4 -5 3zM21 133l7 -4 2 4 -6 4zM362 492l4 -3 3 5 -4 2zM639 484l6 -4 3 3 -7 5zM374 240l8 -5 3 4 -9 6zM398 395l6 -4 4 5 -6 4zM351 570l5 -3 3 4 -5 3zM156 64l8 -6 3 5 -8 5zM387 611l6 -4 3 4 -6 4zM241 628l6 -4 4 5 -7 4zM205 283l7 -4 3 3 -8 5zM294 372l9 -6 2 3 -9 6zM127 395l8 -5 3 6 -7 5zM269 545l8 -6 3 4 -8 6zM214 66l6 -4 2 3 -6 4zM307 614l7 -5 3 5 -7 4zM583 441l9 -6 3 5 -9 6zM590 594l6 -3 3 4 -6 4zM435 535l6 -3 2 3 -6 3zM128 517l9 -5 3 4 -9 6zM234 18l8 -6 3 6 -8 5zM301 215l7 -5 4 5 -8 5zM337 470l7 -5 3 5 -6 5zM483 222l9 -6 2 4 -9 6zM260 374l9 -6 3 5 -9 6zM488 248l7 -4 2 3 -7 4zM363 457l5 -3 2 4 -4 3zM200 444l5 -3 2 3 -5 4zM461 472l8 -5 4 5 -8 5zM523 532l6 -4 3 5 -5 3zM88 163l5 -3 3 6 -5 3zM696 438l6 -4 3 5 -6 4zM629 342l6 -4 3 5 -6 4zM296 537l5 -3 3 5 -5 3zM486 116l4 -3 2 4 -4 3zM146 31l5 -3 3 4 -5 3zM324 516l8 -6 3 4 -9 6zM279 679l4 -3 4 5 -5 3zM712 469l7 -4 3 6 -6 4zM455 296l5 -3 3 5 -5 3zM319 424l8 -6 2 3 -8 6zM340 395l7 -4 3 5 -7 4zM437 176l9 -5 3 4 -9 6zM289 637l7 -5 2 4 -7 4zM48 224l8 -6 2 4 -8 5zM426 35l5 -3 3 5 -5 3zM483 546l6 -3 3 4 -6 4zM329 305l7 -5 3 5 -7 5zM628 372l9 -6 4 5 -9 6zM74 110l8 -5 4 5 -8 5zM380 212l6 -3 3 5 -5 4zM694 361l9 -6 2 3 -9 6zM417 145l7 -4 2 3 -6 5zM496 469l9 -6 2 5 -9 5zM357 296l8 -5 2 4 -8 4zM542 384l5 -3 3 4 -5 3zM378 312l5 -4 3 4 -6 3zM446 548l5 -3 4 6 -5 3zM54 198l9 -6 2 5 -8 5zM375 415l8 -6 3 4 -8 6zM618 427l10 -6 2 3 -9 6zM420 262l7 -4 3 5 -7 5zM689 516l8 -5 3 5 -8 5zM512 280l5 -3 3 5 -4 3zM240 134l8 -5 3 5 -8 5zM396 613l8 -5 2 3 -7 5zM291 615l7 -5 3 5 -7 5zM319 144l6 -4 3 5 -6 4zM154 226l7 -4 3 4 -7 4zM172 52l6 -4 2 4 -6 4zM535 207l6 -4 4 6 -6 4zM648 304l6 -3 3 5 -6 4zM455 581l6 -5 3 5 -6 4zM354 518l5 -3 2 4 -5 3zM593 299l6 -3 3 5 -6 3zM502 92l4 -3 3 3 -5 3zM427 388l6 -4 3 4 -7 4zM373 617l8 -5 3 5 -8 5zM295 502l5 -4 3 4 -6 3zM633 267l5 -4 2 4 -5 3zM295 532l8 -5 3 3 -9 6zM391 35l6 -4 3 5 -6 4zM290 436l8 -5 3 4 -8 6zM153 406l8 -5 3 6 -8 5zM545 292l6 -3 2 4 -5 3zM164 220l4 -3 3 4 -5 2zM714 463l6 -4 3 5 -6 4zM374 472l6 -4 3 4 -6 4zM329 219l5 -3 2 4 -4 3zM266 574l7 -5 3 5 -7 4zM340 582l8 -6 3 5 -8 5zM225 426l8 -6 4 6 -8 6zM711 506l9 -6 3 5 -9 5zM376 214l9 -6 2 4 -9 5zM267 451l7 -5 3 4 -8 5zM459 394l9 -6 3 4 -9 6zM344 239l6 -4 2 3 -6 4zM229 640l5 -3 3 5 -5 4zM365 229l10 -6 2 4 -9 6zM549 152l6 -4 2 4 -5 4zM344 279l8 -6 4 5 -9 6zM352 355l4 -3 3 4 -5 3zM91 360l6 -3 3 5 -5 3zM445 411l5 -4 4 6 -6 3zM462 78l5 -3 3 4 -5 3zM312 216l6 -4 4 6 -6 4zM555 467l5 -4 2 4 -5 3zM246 460l8 -5 2 3 -8 5zM575 608l8 -5 3 4 -9 5zM330 499l7 -4 2 3 -7 5zM323 257l9 -5 3 4 -9 6zM128 137l7 -5 3 4 -8 5zM531 251l8 -5 3 6 -8 5zM291 199l6 -4 3 6 -6 3zM646 644l6 -4 4 5 -6 4zM84 122l4 -3 2 4 -4 3zM307 72l9 -6 3 5 -9 5zM191 344l5 -3 2 4 -5 3zM210 614l9 -5 3 4 -9 6zM134 266l6 -4 2 4 -6 4zM21 162l8 -5 3 5 -8 6zM541 146l6 -4 4 6 -7 4zM335 285l7 -5 4 5 -8 5zM248 280l9 -6 3 5 -9 6zM102 125l7 -5 3 5 -7 5zM574 480l7 -4 2 4 -6 4zM266 495l6 -4 4 5 -6 4zM303 220l6 -3 3 5 -6 3zM268 94l9 -5 2 4 -9 5zM8 99l6 -4 3 5 -6 4zM437 390l9 -5 3 4 -9 5zM151 300l5 -3 3 4 -5 3zM121 270l5 -3 2 3 -5 4zM273 602l7 -5 3 6 -7 4zM600 531l7 -4 3 4 -8 5zM268 543l9 -6 3 6 -8 5zM122 399l7 -5 3 4 -8 6zM487 237l8 -5 2 3 -8 5zM225 2l6 -4 3 5 -6 4zM501 289l6 -4 2 3 -6 5zM619 565l7 -4 1 3 -6 4zM375 189l6 -4 3 5 -6 4zM514 503l5 -4 2 4 -5 3zM258 462l9 -6 2 4 -9 6zM501 114l7 -4 4 5 -7 4zM138 441l8 -6 4 5 -9 5zM38 119l8 -5 3 3 -9 6zM646 673l8 -5 2 4 -7 5zM259 521l9 -6 3 4 -9 6zM744 646l9 -6 3 3 -10 6zM95 152l7 -5 3 4 -8 5zM408 626l8 -5 3 5 -8 5zM148 286l7 -5 3 5 -7 5zM557 226l6 -4 3 6 -5 4zM379 635l6 -4 3 4 -6 4zM374 159l5 -4 3 5 -6 3zM339 73l4 -3 3 4 -5 3zM656 698l8 -6 2 4 -8 5zM142 188l9 -6 4 5 -9 6zM474 485l7 -5 3 4 -7 5zM749 647l6 -4 3 6 -5 3zM311 126l6 -4 2 3 -6 4zM700 674l7 -5 3 4 -7 5zM223 339l7 -5 3 4 -7 5zM157 317l9 -6 3 5 -9 6zM645 358l6 -4 2 4 -6 4zM115 408l5 -4 3 3 -6 4zM496 456l4 -3 3 4 -5 3zM517 198l5 -3 3 4 -6 3zM342 690l7 -5 3 5 -7 5zM457 120l7 -5 3 5 -7 5zM245 41l8 -5 3 5 -7 5zM166 245l7 -5 2 5 -6 4zM579 613l8 -5 3 5 -8 5zM346 494l6 -4 3 3 -7 5zM447 426l8 -6 3 4 -9 6zM356 133l7 -5 2 5 -6 4zM620 502l5 -3 3 5 -5 3zM139 413l8 -5 3 6 -7 5zM381 312l8 -5 3 4 -8 5zM103 437l7 -5 2 4 -7 5zM210 179l8 -4 3 4 -8 5zM351 702l9 -5 3 4 -9 6zM552 419l5 -3 2 3 -5 3zM268 531l5 -3 4 6 -5 3zM473 61l8 -5 2 3 -7 5zM486 107l5 -4 3 5 -5 3zM259 560l6 -4 3 6 -5 3zM160 248l9 -5 3 4 -9 6zM150 205l5 -3 2 3 -5 4zM346 46l9 -5 3 5 -9 5zM348 124l8 -5 3 4 -9 6zM224 373l7 -5 3 5 -7 4zM359 412l6 -4 4 5 -6 5zM551 144l4 -3 3 5 -4 3zM264 583l8 -6 3 4 -9 6zM747 651l7 -5 3 4 -7 5zM524 354l5 -3 4 5 -5 3zM527 193l8 -5 3 6 -7 5zM466 222l8 -5 2 3 -8 5zM358 298l6 -4 4 6 -6 3zM407 139l6 -5 3 5 -6 4zM309 471l8 -6 3 4 -9 5zM486 82l4 -2 3 5 -4 3zM387 540l4 -3 4 5 -5 3zM370 204l9 -6 3 6 -9 6zM419 627l7 -5 2 4 -7 5zM336 119l7 -4 3 3 -8 5zM49 128l9 -6 2 4 -8 6zM99 307l6 -4 3 5 -6 4zM173 72l6 -4 4 5 -6 4zM363 497l6 -5 2 4 -6 4zM405 185l7 -5 3 5 -7 4zM396 130l4 -3 3 4 -5 3zM371 223l7 -4 4 5 -8 5zM469 294l8 -5 3 5 -7 5zM660 402l6 -4 2 3 -6 4zM662 694l6 -4 3 6 -5 4zM93 346l5 -4 3 4 -6 4zM702 544l8 -5 2 4 -8 5zM503 506l7 -4 2 4 -6 4zM242 184l8 -5 3 5 -8 5zM234 574l8 -6 2 4 -8 5zM706 543l8 -5 4 5 -8 6zM288 250l9 -6 2 4 -9 5zM292 614l9 -5 2 3 -8 6zM516 521l9 -6 3 5 -9 6zM271 122l5 -3 3 6 -5 3zM525 213l9 -6 2 4 -9 5zM329 667l6 -4 4 5 -7 4zM525 202l9 -6 3 6 -9 6zM503 50l5 -4 3 4 -6 4zM378 472l9 -6 4 6 -9 6zM460 453l6 -4 3 3 -7 4zM272 121l4 -3 2 3 -4 3zM274 484l8 -5 3 5 -7 5zM484 18l6 -4 2 4 -6 4zM253 500l9 -6 3 5 -9 6zM309 595l6 -5 4 5 -7 5zM423 55l8 -5 2 3 -8 5zM312 353l8 -5 3 5 -8 5zM321 437l7 -4 3 5 -7 5zM377 53l9 -6 3 5 -9 6zM152 149l6 -4 3 4 -6 4zM178 471l9 -6 3 6 -8 5zM379 203l9 -6 3 6 -9 5zM580 209l4 -2 2 3 -4 2zM86 286l8 -5 3 4 -8 5zM286 214l8 -6 3 4 -9 6zM172 571l7 -5 3 5 -7 4zM452 585l9 -5 2 3 -8 6zM470 89l7 -5 3 4 -8 5zM305 514l5 -3 4 6 -5 3zM263 177l8 -5 4 5 -8 6zM612 345l6 -4 3 6 -6 3zM287 57l6 -4 3 5 -6 4zM391 23l8 -5 3 4 -8 6zM110 191l8 -4 3 5 -7 5zM591 308l9 -6 3 5 -9 6zM572 182l5 -3 2 3 -5 4zM220 281l8 -5 2 4 -8 4zM193 42l7 -4 3 4 -7 5zM677 550l5 -3 3 5 -5 3zM651 508l5 -3 3 5 -4 3zM100 344l6 -4 2 5 -6 3zM373 550l5 -3 3 5 -5 3zM546 246l5 -3 3 4 -6 3zM475 529l7 -5 3 4 -8 5zM123 503l6 -4 4 5 -6 3zM129 405l9 -6 3 4 -9 6zM335 23l5 -3 3 4 -5 3zM217 174l5 -4 3 5 -5 4zM523 528l7 -5 3 5 -7 5zM279 182l4 -3 2 3 -4 3zM264 215l7 -5 4 5 -8 5zM373 382l5 -4 2 4 -5 3zM107 34l5 -4 3 5 -5 4zM377 207l6 -4 3 5 -6 4zM567 488l6 -4 3 4 -6 4zM477 447l8 -5 3 4 -8 6zM446 544l9 -5 2 3 -9 5zM370 355l6 -4 3 3 -6 4zM148 64l7 -4 2 4 -6 4zM712 696l4 -3 4 6 -5 3zM566 262l6 -4 3 4 -7 4zM324 318l4 -2 2 3 -4 2zM615 585l7 -5 3 4 -7 5zM334 656l8 -5 2 4 -8 5zM192 285l9 -5 2 3 -9 6zM136 142l8 -6 2 4 -8 5zM468 228l4 -2 3 4 -5 3zM228 436l8 -5 2 4 -7 5zM379 277l6 -4 2 3 -6 4zM542 415l5 -3 2 4 -5 3zM551 261l6 -4 4 5 -7 4zM333 571l6 -3 3 4 -6 4zM595 579l6 -4 4 5 -7 4zM263 233l6 -4 3 5 -6 4zM609 334l9 -5 2 4 -8 5zM406 662l9 -5 2 3 -8 6zM272 561l8 -5 3 6 -7 4zM291 584l9 -6 3 5 -9 6zM193 -1l5 -3 4 6 -5 3zM331 65l9 -6 3 4 -9 6zM363 484l6 -4 2 4 -6 4zM118 116l6 -5 3 5 -7 4zM225 571l6 -4 3 6 -5 4zM293 644l5 -4 3 5 -5 3zM329 179l9 -6 2 4 -9 6zM558 502l6 -4 4 6 -7 4zM568 434l6 -3 2 3 -6 4zM324 13l6 -4 3 5 -6 4zM534 179l9 -5 4 5 -9 6zM248 204l6 -4 2 4 -6 4zM172 32l7 -5 2 4 -7 5zM399 115l6 -5 3 5 -6 4zM667 672l9 -6 3 5 -9 6zM746 655l6 -3 3 5 -5 3zM364 36l8 -5 4 5 -8 5zM240 557l8 -5 4 6 -8 5zM231 562l8 -5 3 5 -7 5zM651 379l5 -4 4 5 -6 4zM298 95l5 -4 3 4 -6 4zM101 61l5 -3 4 5 -6 4zM459 485l9 -6 2 4 -8 6zM706 626l6 -4 3 5 -6 3zM431 168l9 -5 3 5 -9 6zM587 250l8 -5 3 5 -8 5zM269 428l7 -5 4 6 -8 4zM360 221l6 -4 2 3 -6 4zM530 520l5 -3 3 4 -5 3zM595 527l8 -5 2 3 -8 5zM298 278l9 -5 3 4 -9 6zM196 56l6 -4 4 6 -6 3zM51 208l6 -4 3 6 -6 4zM431 569l7 -5 2 4 -7 4zM328 393l5 -4 3 5 -5 4zM344 692l8 -5 3 5 -8 5zM476 311l10 -6 1 3 -9 6zM242 193l8 -5 2 4 -8 5zM268 158l8 -6 3 5 -8 6zM423 341l9 -6 3 5 -9 6zM185 404l6 -4 4 6 -6 4zM361 505l5 -4 3 4 -6 4zM173 39l7 -4 3 4 -7 4zM503 487l6 -4 3 4 -6 5zM286 361l7 -4 4 5 -7 5zM422 450l6 -4 3 5 -7 4zM633 646l4 -2 2 3 -4 2zM248 109l5 -3 2 3 -5 3zM116 226l8 -5 3 5 -8 5zM566 210l5 -3 2 3 -5 3zM95 13l5 -4 3 4 -5 4zM83 133l8 -4 2 4 -7 4zM467 95l4 -2 4 5 -5 3zM146 134l7 -4 2 3 -7 4zM343 336l7 -5 2 4 -6 4zM431 223l6 -3 3 5 -5 3zM557 403l9 -6 3 4 -9 6zM375 407l6 -4 3 4 -6 4zM356 598l5 -4 4 6 -5 3zM426 597l8 -5 2 4 -7 5zM429 10l7 -5 4 6 -7 4zM318 274l5 -4 3 5 -5 3zM370 625l7 -5 3 4 -8 5zM57 204l7 -5 3 5 -7 5zM452 420l7 -4 3 4 -7 5zM2 54l7 -4 2 4 -6 4zM413 526l6 -4 3 5 -6 4zM196 200l9 -6 3 5 -9 6zM292 92l7 -5 4 6 -8 5zM438 164l4 -3 3 5 -4 3zM629 648l8 -5 2 4 -7 5zM242 302l4 -3 3 5 -4 3zM502 523l5 -4 2 4 -5 3zM356 258l6 -4 2 4 -6 4zM159 153l8 -6 3 5 -8 5zM609 279l9 -6 3 4 -9 6zM467 529l8 -5 3 5 -7 5zM296 6l5 -4 2 4 -5 3zM368 468l6 -4 3 4 -6 4zM486 93l7 -5 4 6 -7 4zM241 466l8 -5 3 4 -8 6zM429 244l9 -5 3 5 -8 6zM335 303l7 -5 3 5 -7 4zM410 48l5 -3 3 4 -5 3zM393 294l8 -5 3 6 -7 5zM665 507l5 -3 2 4 -5 3zM188 17l8 -6 2 4 -8 5zM216 159l5 -3 3 4 -5 4zM285 572l6 -3 2 4 -5 3zM529 168l9 -6 2 3 -9 6zM460 558l6 -5 3 4 -7 4zM424 294l4 -3 3 5 -4 3zM518 373l5 -3 4 5 -6 3zM657 547l9 -6 3 5 -9 5zM319 9l8 -5 3 5 -8 5zM287 361l8 -5 4 5 -8 5zM373 54l8 -5 3 6 -7 5zM117 209l6 -4 3 6 -5 3zM349 294l4 -3 3 4 -4 3zM307 347l5 -3 4 5 -5 3zM382 501l8 -6 3 4 -9 5zM303 649l5 -3 3 5 -5 3zM423 115l5 -3 3 5 -5 3zM346 57l9 -5 4 5 -9 6zM443 331l7 -5 3 4 -7 5zM495 282l8 -6 3 5 -8 5zM373 438l9 -6 3 5 -8 6zM359 12l10 -6 2 4 -9 6zM628 392l9 -6 3 6 -8 6zM610 539l6 -4 3 6 -5 3zM441 276l8 -5 4 6 -9 5zM431 175l4 -3 3 5 -5 3zM585 224l5 -3 2 3 -5 3zM364 352l4 -3 4 5 -4 3zM472 241l5 -3 3 3 -5 4zM290 233l6 -5 2 4 -6 4zM604 590l7 -5 4 5 -7 5zM470 215l5 -4 3 5 -5 3zM456 566l6 -4 2 4 -6 4zM193 457l5 -4 2 4 -5 3zM189 292l8 -5 3 5 -8 5zM133 75l7 -5 3 5 -7 4zM713 468l5 -3 3 5 -5 2zM388 577l5 -4 4 6 -6 3zM375 258l5 -3 4 6 -5 3zM405 583l6 -4 2 3 -6 4zM513 433l8 -5 3 5 -8 5zM192 277l8 -5 3 4 -8 6zM379 676l8 -6 3 5 -7 6zM231 316l8 -6 3 4 -8 6zM304 536l8 -5 4 5 -8 5zM431 279l6 -4 2 4 -6 4zM366 323l9 -5 2 4 -8 5zM282 623l8 -6 2 3 -8 6zM531 523l7 -5 2 4 -7 5z" fill="#8c8680"/>
<path d="M681 590l7 -5 3 5 -7 5zM471 358l5 -3 4 6 -5 3zM373 586l6 -4 3 4 -6 4zM227 164l7 -5 3 4 -7 5zM93 331l6 -3 2 3 -6 4zM358 164l5 -4 4 6 -6 3zM253 296l7 -5 3 4 -8 4zM234 576l5 -4 2 4 -5 3zM542 223l6 -4 2 3 -6 3zM279 608l7 -4 2 4 -6 4zM513 130l6 -4 2 4 -6 4zM708 478l9 -5 2 3 -9 6zM270 537l7 -4 2 3 -7 5zM232 209l4 -2 4 5 -5 3zM172 27l6 -4 4 5 -6 4zM375 78l7 -5 2 3 -7 5zM501 520l5 -3 2 4 -5 4zM71 270l9 -6 4 5 -9 6zM291 23l6 -4 4 5 -6 4zM391 71l7 -5 3 5 -7 5zM478 9l5 -3 3 6 -4 3zM187 71l5 -3 2 3 -5 4zM384 342l8 -6 2 3 -8 6zM379 190l6 -4 4 5 -7 5zM688 429l7 -4 3 4 -7 5zM132 26l8 -5 4 5 -8 5zM93 13l8 -5 2 4 -7 5zM346 653l6 -3 4 6 -6 3zM230 302l8 -6 3 4 -9 6zM568 556l7 -4 2 3 -7 4zM711 475l6 -4 3 5 -6 3zM548 208l9 -6 2 3 -9 6zM431 96l5 -3 4 5 -6 3zM447 604l5 -3 3 4 -5 3zM331 43l6 -4 3 5 -6 4zM643 576l6 -4 4 5 -7 4zM625 359l5 -3 4 5 -5 3zM124 367l9 -5 3 4 -9 6zM380 160l7 -4 2 3 -6 4zM60 125l9 -5 2 3 -8 6zM501 246l6 -4 3 5 -6 4zM321 361l9 -6 2 3 -9 6zM310 142l5 -4 3 3 -6 4zM124 49l4 -3 4 6 -4 3zM647 553l7 -5 2 4 -6 4zM388 295l6 -3 2 4 -5 4zM414 562l5 -3 3 6 -4 3zM347 692l4 -3 2 4 -4 3zM711 478l5 -4 4 5 -6 4zM125 46l5 -3 3 4 -6 3zM193 16l5 -3 2 3 -5 4zM669 687l4 -3 2 4 -4 3zM367 96l6 -4 3 3 -7 4zM260 151l9 -6 4 6 -9 6zM637 552l9 -6 2 3 -9 6zM316 35l5 -4 4 6 -6 4zM423 562l6 -5 3 5 -6 5zM311 462l6 -4 4 6 -6 3zM338 175l7 -6 3 4 -8 5zM436 164l7 -5 3 5 -7 5zM161 232l9 -5 4 5 -9 6zM542 244l5 -3 4 5 -5 4zM174 346l9 -5 3 4 -8 6zM608 474l7 -4 3 6 -6 4zM572 330l7 -5 3 5 -7 5zM228 453l9 -6 3 5 -9 6zM597 588l5 -4 3 5 -5 4zM162 556l5 -3 3 5 -5 3zM381 297l4 -3 3 5 -4 2zM735 525l9 -6 4 6 -9 6zM442 265l4 -3 4 5 -4 3zM508 500l6 -3 3 5 -5 3zM169 276l8 -6 3 5 -8 6zM628 570l6 -4 3 3 -7 4zM460 456l8 -6 4 5 -9 6zM242 66l7 -5 3 6 -6 4zM704 535l9 -5 3 5 -8 6zM245 541l8 -6 3 6 -8 5zM328 482l8 -5 3 5 -7 5zM276 367l4 -3 3 3 -5 4zM483 332l9 -5 2 3 -9 6zM274 369l8 -5 2 3 -8 5zM60 113l5 -3 3 5 -5 3zM705 393l4 -3 2 4 -4 3zM289 502l6 -3 3 5 -5 4zM548 155l5 -4 3 5 -5 3zM351 435l6 -4 2 3 -6 4zM455 202l7 -4 3 5 -6 4zM672 529l5 -3 4 5 -6 4zM642 616l5 -3 3 5 -5 3zM413 319l6 -4 3 6 -6 3zM353 64l5 -3 2 4 -4 3zM148 411l8 -5 3 5 -7 5zM303 249l6 -4 3 4 -6 4zM264 517l4 -3 3 4 -4 3zM423 100l6 -4 2 4 -5 4zM281 189l9 -6 3 6 -9 5zM621 696l7 -5 3 4 -8 5zM659 311l8 -5 2 3 -8 6zM301 667l7 -4 2 3 -6 5zM622 676l8 -5 3 3 -9 6zM371 188l6 -4 3 4 -6 4zM718 445l7 -5 4 6 -7 4zM153 355l4 -3 4 5 -5 3zM720 698l10 -6 3 5 -9 6zM290 236l8 -5 2 4 -8 5zM382 234l5 -3 3 5 -4 3zM384 118l8 -5 2 5 -7 5zM199 470l5 -3 3 4 -5 4zM526 407l9 -6 2 3 -9 6zM662 699l6 -4 3 5 -6 4zM207 353l6 -4 3 4 -7 4zM137 373l5 -4 4 5 -6 4zM571 515l6 -4 2 4 -5 3zM645 626l6 -5 2 4 -6 4zM514 439l5 -4 2 3 -5 4zM596 322l9 -6 2 4 -8 6zM385 351l4 -3 3 5 -4 3zM354 357l8 -6 3 4 -8 5zM639 330l5 -4 2 4 -5 3zM244 419l6 -3 2 3 -6 4zM338 613l5 -3 3 4 -5 3zM193 432l6 -3 2 4 -5 3zM299 134l8 -5 3 5 -8 5zM184 405l6 -4 3 4 -6 4zM260 563l5 -3 3 5 -5 3zM247 109l5 -3 3 4 -5 3zM244 586l9 -5 2 3 -8 6zM651 623l5 -3 3 5 -5 3zM580 215l5 -3 3 3 -5 3zM619 264l8 -6 3 4 -9 5zM531 210l8 -5 3 4 -8 5zM292 541l6 -4 2 3 -6 4zM502 537l8 -5 2 4 -7 5zM505 145l7 -5 3 5 -7 4zM436 313l6 -4 3 5 -6 3zM412 660l5 -4 3 6 -5 3zM526 513l8 -5 3 4 -8 5zM86 147l5 -4 3 6 -5 3zM387 395l9 -6 3 5 -9 6zM597 553l8 -5 3 6 -8 5zM219 598l8 -5 2 4 -7 5zM245 655l9 -5 3 5 -8 6zM241 287l7 -5 2 3 -7 5zM385 524l9 -5 3 4 -9 5zM513 214l8 -5 3 4 -8 5zM618 343l5 -4 3 4 -5 3zM203 364l9 -5 4 5 -9 6zM653 619l5 -3 2 3 -5 3zM472 319l9 -6 2 4 -8 5zM506 259l5 -3 3 5 -4 3zM165 443l7 -5 3 4 -8 5zM325 91l10 -6 2 4 -9 6zM392 538l6 -3 3 4 -6 4zM71 219l4 -4 2 4 -4 3zM594 256l5 -3 3 6 -4 2zM633 608l9 -5 2 3 -9 6zM540 448l9 -6 4 6 -9 6zM330 163l8 -5 2 3 -8 6zM263 225l8 -6 2 5 -8 5zM194 187l9 -6 2 3 -8 6zM190 358l7 -4 3 4 -7 4zM333 479l5 -3 2 4 -5 3zM541 160l5 -3 3 4 -5 3zM45 192l9 -6 3 3 -10 6zM228 60l6 -5 4 6 -7 4zM269 52l6 -5 4 6 -7 4zM491 102l5 -3 3 4 -5 3zM325 223l7 -4 3 4 -7 4zM515 405l6 -3 3 5 -5 3zM427 12l5 -3 2 3 -5 3zM529 122l8 -5 3 5 -8 5zM514 279l9 -6 3 6 -8 5zM606 318l7 -4 3 6 -6 4zM210 329l8 -6 3 5 -8 5zM606 481l6 -4 4 6 -6 4zM193 593l9 -5 3 5 -9 5zM277 317l9 -6 3 5 -9 5zM238 369l5 -3 3 5 -4 3zM357 149l9 -5 3 4 -9 6zM605 236l5 -3 2 3 -5 3zM350 181l8 -6 3 5 -8 6zM634 630l6 -4 3 4 -6 4zM451 132l5 -3 3 5 -4 3zM132 52l7 -5 4 6 -7 5zM364 535l9 -5 3 4 -9 6zM160 449l9 -6 2 3 -9 5zM141 441l7 -5 3 5 -7 5zM705 465l9 -6 3 5 -9 6zM196 185l9 -6 3 5 -9 5zM405 590l7 -5 4 6 -8 4zM428 504l6 -4 3 4 -6 4zM491 109l9 -6 3 5 -9 6zM201 397l8 -5 3 4 -8 5zM469 59l8 -5 3 4 -8 5zM101 117l9 -6 3 5 -9 6zM608 347l6 -4 3 4 -6 4zM597 393l8 -5 2 4 -7 5zM215 262l8 -5 2 4 -7 5zM366 37l8 -5 3 4 -8 5zM301 117l7 -4 2 4 -7 4zM571 340l9 -5 2 3 -9 6zM522 512l8 -5 2 3 -8 5zM653 627l5 -4 2 3 -6 4zM340 36l5 -3 3 5 -4 3zM260 434l9 -6 2 3 -9 6zM395 592l4 -3 4 6 -5 3zM567 180l6 -4 3 4 -6 4zM525 209l5 -4 2 4 -5 3zM310 47l8 -6 3 4 -9 5zM369 311l5 -2 2 3 -4 3zM416 274l6 -4 4 5 -6 4zM350 257l8 -5 3 4 -8 5zM577 369l5 -4 4 6 -6 4zM524 270l9 -6 4 6 -9 6zM305 537l5 -3 2 5 -4 3zM737 526l8 -5 2 3 -8 6zM383 203l4 -3 4 5 -5 3zM114 346l6 -4 3 4 -7 4zM156 200l9 -5 2 3 -8 6zM628 391l8 -5 3 5 -8 5zM182 344l5 -4 3 4 -5 3zM425 258l5 -3 3 3 -6 4zM262 672l9 -6 2 4 -8 5zM329 258l9 -5 4 5 -9 6zM252 457l8 -6 3 5 -7 5zM339 437l7 -4 3 5 -6 5zM441 467l7 -4 3 5 -7 4zM336 181l4 -3 4 5 -5 3zM295 59l5 -3 4 5 -6 3zM293 15l5 -3 3 6 -5 3zM196 22l7 -5 4 6 -8 4zM687 701l8 -6 3 5 -9 5zM498 169l5 -4 4 6 -6 3zM373 630l6 -4 3 5 -6 4zM127 422l6 -4 4 5 -6 4zM739 641l6 -3 3 4 -6 4zM208 397l7 -4 2 3 -6 4zM629 450l5 -3 2 4 -4 3zM205 202l7 -4 3 6 -6 4zM322 263l8 -5 2 3 -8 5zM387 361l5 -3 3 4 -5 4zM338 408l6 -4 3 6 -6 4zM103 337l5 -3 3 4 -5 4zM290 147l6 -4 3 5 -6 5zM222 466l9 -6 4 6 -9 5zM237 198l7 -5 2 3 -7 5zM590 215l4 -3 4 5 -4 3zM723 448l4 -2 4 5 -4 3zM369 41l8 -5 3 3 -9 6zM100 375l6 -4 3 5 -6 4zM676 447l8 -5 3 5 -8 5zM435 592l6 -4 2 3 -6 4zM429 558l9 -6 2 5 -8 5zM317 458l7 -5 3 4 -8 5zM490 470l7 -5 3 4 -8 4zM22 141l6 -4 3 4 -7 5zM285 559l5 -3 3 4 -5 3zM475 335l5 -2 3 5 -4 2zM702 442l6 -3 3 4 -6 4zM257 455l8 -4 3 5 -7 5zM504 383l9 -6 3 5 -9 6zM465 366l8 -5 2 4 -8 5zM701 462l8 -5 2 4 -7 5zM105 361l8 -5 2 3 -8 5zM228 52l6 -4 3 5 -6 3zM658 635l7 -4 3 5 -7 5zM320 410l9 -6 2 3 -9 6zM408 281l7 -4 2 3 -6 4zM523 73l6 -4 2 4 -6 4zM357 176l8 -6 2 4 -8 5zM169 333l5 -4 3 4 -6 4zM402 90l7 -5 3 6 -7 4zM442 613l8 -5 2 3 -8 5zM138 428l5 -3 2 3 -5 3zM380 26l5 -3 2 4 -5 3zM175 469l9 -6 3 5 -8 6zM466 6l6 -4 2 4 -5 3zM189 409l8 -5 3 4 -8 5zM499 478l6 -3 3 3 -6 4zM480 148l4 -3 4 5 -5 3zM224 302l7 -4 2 3 -7 4zM613 514l6 -4 2 3 -6 4zM458 561l9 -6 3 5 -9 6zM207 633l7 -5 3 6 -6 5zM285 441l7 -4 4 5 -8 5zM114 224l7 -5 2 3 -7 5zM87 135l6 -3 3 4 -6 4zM433 288l5 -3 2 4 -4 3zM749 657l7 -4 3 5 -6 5zM246 217l9 -6 3 4 -9 6zM471 285l7 -4 3 4 -7 5zM469 70l7 -4 3 4 -7 5zM288 316l5 -4 4 6 -5 3zM215 159l6 -4 3 4 -6 4zM614 556l4 -3 3 4 -5 3zM558 279l6 -4 3 5 -5 4zM329 57l6 -4 3 5 -6 3zM750 506l5 -3 4 6 -5 3zM366 556l4 -2 3 4 -5 2zM610 521l4 -3 3 5 -4 3zM208 176l6 -4 3 5 -6 4zM322 502l8 -5 3 5 -7 5zM543 402l4 -3 4 5 -5 3zM594 381l8 -4 2 3 -8 5zM195 283l8 -5 2 4 -8 5zM551 204l5 -4 3 4 -6 4zM253 77l6 -3 2 4 -6 3zM416 26l7 -4 2 3 -7 5zM587 525l9 -6 2 3 -9 6zM408 189l5 -3 3 3 -6 4zM431 107l4 -3 4 6 -4 3zM383 405l5 -3 3 5 -5 3zM385 468l6 -4 4 5 -7 4zM466 274l4 -3 3 3 -5 3zM335 575l6 -4 3 5 -7 4zM621 600l9 -6 3 6 -8 5zM248 45l5 -3 4 6 -5 3zM147 341l7 -4 3 5 -7 4zM242 281l9 -6 3 5 -9 6zM128 492l6 -5 4 6 -7 4zM491 2l7 -5 2 4 -7 5zM41 121l6 -4 3 6 -5 3zM405 206l7 -5 2 3 -7 5zM285 651l5 -3 3 4 -5 4zM202 60l9 -6 3 6 -8 6zM375 78l7 -5 3 6 -6 4zM256 444l5 -3 3 4 -6 4zM442 614l7 -5 3 4 -8 5zM692 452l6 -5 3 5 -7 4zM126 476l4 -3 4 6 -5 3zM561 545l9 -6 3 4 -9 6zM598 572l7 -5 4 6 -8 4zM526 238l6 -4 2 4 -5 3zM639 662l5 -3 3 5 -5 3zM232 37l7 -4 2 3 -7 4zM95 300l7 -4 3 5 -6 4zM252 391l6 -4 2 4 -6 4zM250 293l5 -3 4 5 -6 4zM502 455l5 -4 3 4 -6 4zM440 526l8 -6 2 3 -8 6zM321 162l7 -5 4 6 -8 5zM370 618l5 -3 4 6 -6 3zM306 682l9 -6 3 5 -9 6zM451 28l6 -4 3 5 -6 3zM76 290l6 -4 4 5 -6 4zM697 555l5 -3 2 3 -5 4zM477 6l6 -4 2 4 -6 4zM526 84l5 -3 2 3 -5 3zM146 115l5 -3 3 5 -5 3zM614 661l6 -4 3 4 -6 4zM602 553l6 -3 3 5 -5 4zM625 304l5 -4 3 6 -5 3zM480 329l6 -3 3 5 -5 4zM651 307l8 -5 2 4 -8 5zM613 512l4 -3 3 4 -5 3zM273 32l9 -5 2 4 -8 5zM455 154l4 -3 3 5 -4 3zM338 405l5 -4 4 6 -6 3zM379 365l5 -3 2 4 -5 3zM23 157l9 -5 3 4 -8 6zM368 495l7 -4 3 4 -7 4zM185 185l8 -6 3 5 -8 5zM499 170l8 -5 3 4 -8 6zM88 337l5 -4 4 6 -6 3zM260 345l8 -5 3 6 -7 5zM143 443l8 -5 2 4 -7 5zM292 212l7 -4 2 3 -7 4zM281 567l9 -6 2 3 -9 6zM588 253l5 -3 2 3 -4 3zM443 277l9 -6 2 4 -9 6zM728 627l9 -6 3 5 -9 5zM340 647l8 -6 3 4 -9 6zM24 143l7 -4 2 4 -7 4zM707 677l5 -3 2 3 -5 3zM221 566l7 -5 3 5 -7 4zM627 516l4 -3 3 3 -5 3zM162 447l7 -5 2 3 -7 5zM593 216l9 -5 4 5 -9 6zM304 518l5 -4 4 6 -5 3zM139 378l5 -3 2 3 -5 3zM701 415l9 -6 2 3 -9 6zM457 210l8 -5 2 3 -8 5zM668 441l7 -4 2 3 -7 4zM483 539l6 -4 3 3 -6 4zM301 480l6 -3 2 3 -6 4zM575 534l6 -4 4 5 -6 4zM646 644l7 -4 3 4 -7 5zM402 589l6 -4 2 4 -6 4zM613 274l5 -3 3 3 -5 3zM344 54l5 -3 4 5 -5 4zM99 345l5 -4 2 4 -5 3zM215 91l7 -4 3 5 -7 5zM461 351l6 -3 2 3 -5 4zM391 615l5 -3 2 3 -5 3zM691 549l8 -5 2 5 -7 5zM227 55l7 -5 3 6 -6 4zM210 351l6 -4 2 4 -6 4zM529 235l5 -3 2 3 -5 3zM179 324l8 -6 4 6 -9 5zM109 233l8 -5 3 4 -8 5zM400 48l4 -3 3 5 -4 3zM259 536l7 -4 2 5 -6 4zM279 475l9 -6 3 4 -9 6zM103 141l8 -5 3 5 -8 5zM499 157l5 -3 3 4 -6 4zM474 521l4 -3 3 5 -4 3zM259 322l5 -3 3 4 -5 3zM723 514l7 -5 3 4 -7 5zM367 138l6 -3 3 5 -6 3zM352 488l7 -5 3 5 -7 4zM339 222l4 -3 3 5 -4 3zM355 153l7 -5 2 4 -7 4zM379 157l9 -6 3 5 -9 5zM580 481l8 -5 3 4 -8 5zM745 658l6 -4 4 5 -6 5zM292 19l7 -5 4 6 -7 5zM51 196l4 -3 4 5 -5 3zM280 614l6 -4 3 5 -6 4zM254 323l5 -3 2 3 -5 3zM239 36l8 -5 3 4 -8 5zM323 459l7 -4 2 3 -6 5zM99 339l5 -4 3 5 -5 3zM518 412l5 -3 3 3 -6 4zM177 327l6 -4 4 5 -6 5zM447 123l8 -5 2 5 -7 5zM624 571l6 -4 3 6 -6 3zM183 70l7 -4 3 5 -6 5zM410 378l4 -3 4 6 -5 3zM729 623l4 -2 2 3 -4 3zM359 426l9 -5 4 5 -9 6zM246 426l5 -3 3 5 -5 3zM134 197l5 -3 3 5 -5 3zM580 441l4 -3 4 5 -5 3zM402 150l8 -5 3 5 -8 5zM290 487l5 -3 3 5 -4 3zM425 178l5 -3 2 3 -5 4zM271 533l6 -4 3 5 -6 4zM255 382l7 -5 3 6 -7 4zM128 434l5 -3 3 5 -5 3zM141 460l8 -4 2 3 -7 5zM608 535l5 -3 2 3 -5 3zM216 458l6 -4 2 5 -5 3zM203 25l8 -6 4 6 -8 5zM386 469l4 -3 3 4 -4 3zM589 530l9 -6 3 4 -9 6zM72 256l5 -3 2 4 -5 3zM619 618l6 -5 3 4 -7 4zM100 421l7 -4 3 6 -6 4zM225 407l9 -5 3 5 -9 5zM174 173l7 -4 2 3 -7 4zM254 431l9 -6 2 4 -8 6zM614 343l8 -5 3 5 -7 5zM462 191l6 -4 2 4 -6 3zM344 56l6 -4 3 5 -6 4zM199 98l8 -5 2 4 -8 5zM672 362l5 -3 3 5 -4 3zM317 10l9 -5 3 5 -9 5zM125 361l9 -6 3 6 -8 5zM290 362l6 -4 3 6 -6 4zM213 371l6 -3 3 3 -6 4zM386 185l8 -4 2 3 -7 5zM127 185l9 -6 3 6 -8 5zM123 486l8 -5 3 6 -8 5zM192 31l5 -3 3 5 -5 3zM679 692l8 -5 3 4 -8 5zM126 291l7 -4 4 5 -7 5zM679 463l8 -5 4 5 -9 5zM441 419l8 -5 2 3 -8 5zM41 204l5 -3 2 3 -5 3zM208 638l7 -5 4 5 -8 5zM256 450l9 -6 2 3 -9 6zM563 280l9 -6 2 3 -9 6zM587 623l7 -5 2 4 -7 5zM343 508l7 -5 3 4 -7 5zM262 195l9 -6 3 5 -9 6zM521 240l9 -5 4 5 -9 6zM400 600l9 -6 3 6 -8 6zM332 504l5 -4 3 4 -6 3zM479 472l6 -4 3 5 -6 3zM373 286l5 -3 3 3 -6 4zM248 320l8 -5 3 5 -8 5zM234 67l9 -5 3 5 -8 5zM469 474l5 -4 3 5 -5 4zM175 216l6 -4 3 4 -6 4zM351 2l4 -3 2 4 -4 2zM506 337l8 -6 2 3 -8 6zM429 631l8 -5 4 5 -8 6zM214 362l8 -6 3 5 -8 6zM429 79l8 -5 4 5 -8 5zM219 351l7 -4 3 4 -7 4zM261 204l7 -5 3 6 -7 5zM133 158l6 -4 2 5 -5 3zM642 695l9 -6 3 4 -9 6zM161 161l5 -4 2 3 -6 4zM476 77l8 -6 4 5 -9 6zM563 230l8 -5 4 5 -8 6zM677 589l5 -3 2 4 -5 4zM126 161l5 -4 3 4 -6 4zM329 415l8 -5 3 4 -8 5zM163 451l5 -3 2 3 -5 3zM266 239l8 -5 3 6 -7 5zM225 324l7 -4 2 3 -6 5zM709 583l5 -3 3 5 -5 3zM133 121l6 -4 3 4 -6 4zM72 279l9 -5 4 5 -9 6zM267 412l6 -4 3 4 -6 4zM494 393l7 -5 2 4 -7 5zM319 423l7 -4 2 4 -7 5zM312 401l9 -6 3 6 -8 5zM287 197l5 -4 2 4 -4 3zM307 82l8 -5 3 4 -8 5zM373 143l6 -4 3 4 -6 4zM652 330l5 -3 3 5 -5 4zM565 333l5 -3 2 3 -5 4zM438 600l6 -4 3 5 -6 3zM133 134l5 -4 3 4 -6 3zM343 160l7 -4 3 4 -7 5zM431 378l6 -3 2 4 -6 3zM300 343l5 -3 3 4 -5 3zM677 379l6 -4 3 5 -6 4zM630 591l7 -5 2 3 -7 5zM382 312l5 -3 3 5 -5 3zM429 126l7 -5 3 5 -7 4zM354 80l9 -6 2 4 -8 6zM158 417l9 -6 4 6 -9 6zM361 306l7 -4 2 4 -6 4zM168 452l7 -5 2 3 -7 5zM427 25l9 -6 2 3 -9 6zM384 598l6 -3 3 5 -5 4zM3 92l8 -5 2 3 -8 5zM291 384l8 -5 2 3 -7 5zM306 423l7 -5 3 3 -8 5zM91 332l8 -5 3 4 -8 5zM190 425l9 -6 2 3 -9 6zM281 544l7 -4 3 5 -7 4zM659 509l6 -4 3 5 -6 3zM402 112l7 -4 4 5 -7 5zM128 404l6 -3 3 4 -6 3zM116 186l5 -3 2 4 -4 3zM246 254l4 -3 4 5 -5 3zM222 336l4 -3 4 6 -4 2zM332 701l7 -5 2 4 -7 5zM726 506l8 -5 3 5 -8 5zM184 399l5 -3 2 4 -4 3zM635 447l7 -4 3 5 -7 4zM297 657l6 -4 3 4 -6 5zM352 304l6 -4 2 3 -6 5zM514 289l7 -4 3 4 -7 5zM339 666l9 -6 3 5 -9 6zM153 37l5 -3 3 4 -5 3zM486 194l8 -5 3 4 -8 5zM552 417l7 -5 2 3 -7 5zM529 99l9 -6 3 4 -9 6zM647 482l6 -3 3 4 -6 4zM447 530l8 -6 4 6 -9 5zM475 443l6 -5 2 4 -6 4zM329 96l6 -3 3 5 -5 3zM493 542l7 -4 4 5 -7 5zM672 664l8 -5 4 6 -8 5zM113 74l4 -3 4 4 -5 3zM384 514l5 -3 3 4 -5 4zM525 523l9 -6 3 5 -9 6zM128 395l5 -3 4 6 -5 3zM589 241l7 -4 3 4 -7 5zM384 288l5 -3 3 3 -5 4zM693 672l9 -6 3 6 -8 5zM236 195l6 -4 3 4 -6 4zM539 185l9 -5 3 5 -9 5zM468 160l5 -3 4 5 -5 4zM439 481l8 -5 3 5 -8 5zM263 140l8 -5 3 5 -7 5zM225 57l7 -5 2 3 -7 5zM451 210l6 -4 4 6 -6 3zM381 378l6 -4 3 4 -7 4zM585 459l8 -5 3 5 -7 5zM618 488l5 -4 4 6 -5 3zM187 389l5 -3 3 4 -6 4zM391 359l8 -6 3 4 -9 6zM469 62l7 -5 3 5 -7 5zM97 336l7 -5 3 5 -7 5zM395 77l7 -5 2 4 -7 5zM245 319l9 -6 2 3 -9 6zM101 31l7 -5 2 3 -7 5zM155 210l9 -5 2 3 -9 6zM621 416l7 -5 2 4 -6 4zM511 499l9 -5 3 4 -9 6zM99 303l6 -3 4 5 -6 4zM154 562l8 -5 4 6 -8 5zM485 250l6 -4 2 5 -5 3zM289 565l9 -6 2 4 -9 6zM288 181l4 -2 2 3 -4 3zM371 363l9 -6 2 4 -8 6zM523 428l8 -5 3 6 -7 5zM289 682l5 -3 3 5 -5 3zM447 141l8 -5 3 5 -8 6zM355 84l6 -4 3 6 -5 3zM466 469l4 -3 3 4 -5 3zM348 151l9 -6 4 5 -9 6zM619 263l8 -5 4 5 -9 6zM384 182l8 -5 3 4 -8 5zM402 228l7 -5 3 4 -7 5zM165 157l9 -5 2 3 -8 6zM148 1l9 -6 3 4 -9 6zM555 272l6 -4 3 5 -6 4zM249 433l7 -4 2 3 -7 4zM613 430l5 -3 3 5 -5 4zM635 366l6 -5 3 5 -7 4zM625 549l7 -4 3 5 -6 4zM515 113l7 -5 2 4 -7 5zM253 496l9 -5 2 4 -8 5zM112 9l9 -6 3 4 -9 6zM400 571l5 -3 2 4 -4 3zM603 585l8 -6 3 4 -9 6zM527 289l6 -4 2 3 -6 4zM641 352l6 -4 3 4 -6 4zM295 280l7 -5 2 5 -6 4zM233 350l7 -5 2 3 -7 5zM473 455l9 -6 3 6 -8 5zM469 52l9 -5 3 5 -8 6zM602 636l6 -5 3 6 -6 4zM433 256l4 -3 4 6 -5 3zM421 233l9 -6 3 5 -9 6zM274 175l5 -3 3 4 -5 3zM79 185l7 -4 2 3 -7 5zM474 348l4 -2 2 4 -4 2zM474 407l9 -5 2 3 -8 6zM351 442l6 -4 2 4 -6 3zM536 216l6 -4 3 5 -6 4zM482 307l9 -6 2 3 -9 6zM448 471l9 -6 3 5 -9 6zM544 258l5 -3 2 4 -5 3zM144 196l9 -5 2 4 -9 5zM365 568l9 -6 3 5 -8 6zM112 43l7 -4 3 4 -7 5zM504 31l8 -5 2 5 -7 5zM574 191l6 -4 4 5 -6 4zM525 148l7 -5 4 6 -7 5zM376 529l4 -3 4 5 -4 3zM273 248l8 -6 3 5 -8 6zM583 353l5 -3 3 4 -5 4zM271 342l5 -4 2 3 -5 4zM456 431l6 -4 3 4 -6 4zM301 591l8 -4 2 4 -7 5zM296 505l4 -3 3 4 -4 3zM186 346l5 -3 3 4 -6 3zM89 111l9 -6 3 4 -9 6zM445 277l6 -4 3 4 -7 4zM581 371l6 -4 2 4 -6 4zM105 235l9 -6 4 6 -9 6zM191 431l6 -3 2 4 -5 3zM220 330l6 -4 3 5 -6 4zM644 569l5 -4 4 6 -6 3zM656 314l7 -4 4 5 -7 5zM652 600l7 -4 2 3 -7 5zM451 375l4 -3 4 6 -4 2zM145 214l4 -3 4 5 -5 3zM325 209l9 -6 3 4 -9 6zM329 414l8 -5 2 3 -8 6zM410 591l6 -4 3 6 -5 3zM288 167l5 -3 3 4 -5 4zM753 580l8 -6 4 6 -9 6zM332 472l5 -3 2 3 -5 4zM160 364l6 -5 3 5 -6 4zM140 318l10 -6 2 3 -10 6zM421 420l8 -6 3 6 -8 5zM224 300l6 -4 3 4 -6 4zM365 442l4 -3 2 3 -4 3zM604 644l7 -5 4 6 -8 5zM348 401l9 -6 2 4 -8 6zM425 433l5 -3 3 4 -5 3zM435 368l8 -5 2 4 -8 5zM620 694l8 -6 3 5 -8 5zM234 417l9 -6 3 6 -8 5zM540 135l5 -4 4 5 -5 4zM129 391l6 -4 2 4 -5 3zM99 304l7 -4 3 5 -7 4zM88 271l7 -5 4 6 -7 4zM427 392l7 -5 3 5 -7 5zM221 470l4 -3 3 5 -5 3zM633 523l8 -5 3 5 -8 5zM607 582l8 -5 3 4 -8 5zM356 444l5 -3 2 4 -5 3zM589 383l10 -5 2 4 -9 6zM484 70l5 -3 3 5 -4 3zM105 308l7 -4 4 5 -8 5zM223 165l8 -5 3 5 -8 5zM393 601l6 -3 2 4 -5 3zM468 534l5 -3 4 5 -6 3zM689 684l9 -6 4 5 -9 6zM305 142l5 -3 3 4 -5 3zM269 596l5 -3 3 4 -5 3zM231 629l8 -5 4 5 -8 5zM282 105l9 -6 2 4 -8 5zM14 120l6 -4 3 6 -5 3zM518 505l6 -4 3 5 -6 4zM340 489l5 -3 4 6 -5 3zM728 577l5 -3 3 4 -6 3zM257 518l9 -6 3 5 -8 6zM513 358l8 -5 3 6 -7 4zM272 58l6 -4 4 5 -6 4zM434 480l7 -5 3 5 -7 5zM158 35l8 -5 2 3 -8 5zM161 413l7 -5 3 3 -8 5zM288 161l6 -4 2 4 -6 4zM718 580l4 -3 4 5 -5 3zM627 463l5 -3 3 5 -5 3zM180 20l5 -3 3 5 -5 3zM317 520l6 -4 4 6 -6 4zM140 109l7 -5 2 3 -7 5zM637 609l7 -4 3 5 -7 4zM440 166l9 -5 3 4 -9 6zM359 620l7 -4 3 4 -7 5zM369 384l7 -5 2 3 -7 5zM662 483l5 -4 3 5 -6 4zM22 146l9 -6 3 4 -9 6zM489 298l9 -6 2 4 -9 6zM569 535l6 -3 3 5 -6 4zM216 382l9 -6 2 3 -9 6zM377 554l4 -3 4 5 -5 3zM232 609l8 -6 2 5 -8 5zM529 127l7 -4 3 5 -7 4zM576 461l4 -2 2 3 -4 3zM242 297l5 -4 3 4 -5 4zM345 166l4 -3 2 3 -4 3zM265 192l7 -4 2 3 -7 4zM392 183l8 -5 2 3 -8 5zM630 466l4 -3 3 3 -5 3zM385 89l5 -3 3 4 -5 3zM402 218l8 -5 4 5 -9 5zM531 548l9 -5 3 4 -9 6zM310 126l6 -3 2 4 -5 3zM669 648l9 -6 3 5 -9 6zM577 425l4 -3 4 6 -4 2zM402 648l6 -4 3 5 -6 4zM692 406l9 -5 4 5 -9 6zM581 305l8 -5 2 4 -8 5zM174 74l7 -4 3 3 -7 5zM614 434l5 -3 3 5 -5 3zM587 438l8 -5 3 5 -8 5zM348 602l6 -4 3 4 -7 4zM596 531l6 -4 4 5 -7 4zM488 107l4 -3 3 3 -5 3zM405 232l8 -5 4 5 -9 5zM276 561l7 -4 3 5 -7 4zM560 203l5 -3 4 5 -5 3zM464 409l4 -3 4 5 -5 3zM87 110l4 -3 2 3 -4 3zM703 700l5 -3 4 5 -5 3zM576 363l5 -3 3 4 -5 3zM221 422l7 -4 4 5 -8 5zM316 83l6 -4 3 4 -6 4zM75 291l6 -4 2 3 -6 4zM576 577l6 -4 3 4 -6 4zM196 349l5 -3 3 4 -5 3zM583 223l8 -5 3 6 -7 5zM615 654l4 -3 3 4 -4 3zM684 430l7 -5 3 5 -7 5zM507 32l5 -3 2 4 -5 3zM309 655l6 -4 3 4 -7 4zM137 407l5 -3 3 5 -4 3zM514 141l6 -4 4 5 -6 4zM592 483l6 -4 3 4 -6 4zM134 423l9 -6 3 4 -9 6zM580 259l9 -6 4 6 -10 6zM388 579l6 -4 2 4 -5 3zM385 91l5 -3 3 4 -5 3zM455 432l5 -3 2 4 -5 3zM278 47l4 -2 2 3 -4 3zM147 7l9 -6 3 5 -9 6zM77 26l5 -3 3 5 -5 4zM435 169l8 -6 3 6 -8 5zM636 518l5 -3 2 3 -5 3zM297 594l6 -4 3 6 -5 4zM452 492l7 -4 3 4 -7 4zM246 293l8 -6 4 6 -8 5zM442 386l8 -5 4 6 -8 5zM723 582l5 -3 4 4 -6 4zM281 225l8 -5 2 3 -8 5zM424 482l7 -5 3 5 -7 4zM463 271l5 -3 3 5 -4 3zM111 202l7 -5 3 5 -7 4zM431 31l9 -6 2 4 -8 5zM292 427l9 -6 3 5 -9 6zM411 651l8 -5 3 6 -8 5zM355 569l6 -4 4 6 -7 4zM716 659l7 -5 3 6 -7 4zM105 428l8 -5 4 6 -8 5zM596 480l7 -5 4 5 -8 5zM238 77l6 -4 4 6 -6 4zM425 555l8 -5 2 3 -8 5zM568 326l6 -4 2 3 -6 4zM197 434l8 -6 2 4 -8 5zM426 379l7 -5 3 5 -7 4zM212 54l6 -4 4 6 -6 4zM411 175l8 -4 3 5 -7 5zM200 26l7 -4 3 4 -7 5zM242 509l7 -4 3 4 -7 5zM226 450l6 -4 2 4 -6 4zM481 150l6 -4 4 5 -6 4zM271 430l7 -5 4 6 -7 5zM159 407l5 -3 3 5 -4 3zM199 334l8 -5 3 5 -7 5zM420 416l9 -5 3 5 -8 6zM362 614l9 -6 4 6 -9 6zM385 616l8 -5 3 6 -7 4zM56 145l7 -5 3 6 -6 4zM112 362l7 -4 3 5 -6 5zM478 294l9 -5 2 3 -8 6zM427 81l9 -6 4 6 -9 6zM341 78l8 -5 3 4 -8 5zM181 258l7 -5 4 5 -8 5zM353 506l4 -3 4 5 -5 3zM314 279l5 -3 2 4 -5 3zM311 367l8 -6 3 4 -9 5zM224 611l8 -5 3 4 -8 6zM355 240l6 -4 4 5 -7 4zM386 92l8 -6 3 5 -8 5zM220 593l6 -4 2 4 -6 4zM466 426l8 -6 3 5 -8 6zM565 483l8 -5 3 5 -8 5zM299 603l7 -5 3 4 -8 5zM410 257l6 -4 3 5 -6 4zM319 85l5 -4 2 3 -5 4zM210 62l8 -5 2 3 -8 5zM103 239l7 -4 2 3 -7 5zM508 332l5 -3 3 4 -5 4zM616 332l5 -4 4 6 -6 3zM279 655l6 -4 3 4 -7 4zM278 387l9 -5 2 3 -9 5zM623 327l9 -6 2 4 -9 6zM693 475l4 -3 3 3 -5 3zM141 416l6 -4 3 6 -5 3zM373 610l9 -6 2 4 -9 6zM519 289l8 -6 2 4 -8 5zM350 262l8 -5 2 4 -8 5zM381 667l8 -5 3 5 -8 4zM315 218l4 -3 3 5 -4 3zM440 139l5 -4 3 5 -5 4zM738 526l8 -5 3 5 -8 5zM367 370l5 -4 3 6 -5 3zM297 244l5 -3 2 3 -5 3zM691 513l5 -3 4 5 -5 3zM332 659l5 -3 2 3 -5 3zM103 389l9 -5 3 4 -9 6zM508 533l5 -4 4 5 -6 4zM455 132l9 -6 4 6 -9 6zM235 153l6 -3 2 3 -5 4zM711 414l9 -6 3 5 -9 6zM395 45l6 -4 2 4 -6 4zM107 214l8 -5 2 4 -7 4zM580 229l8 -5 3 4 -8 5zM559 520l6 -4 4 6 -6 4zM649 486l8 -5 4 5 -9 5zM558 255l8 -5 3 5 -8 5zM309 555l8 -5 2 4 -7 5zM374 578l8 -5 4 5 -8 5zM479 488l8 -5 2 3 -8 5zM226 435l5 -2 3 4 -4 3zM471 123l8 -5 2 5 -7 4zM62 207l6 -4 3 6 -5 4zM676 585l7 -5 3 5 -7 5zM256 230l6 -3 3 5 -5 4zM397 675l6 -4 3 6 -6 4zM83 192l6 -3 3 5 -5 3zM220 276l5 -3 4 5 -6 3zM254 435l9 -6 2 3 -9 6zM263 474l7 -4 4 5 -7 5zM400 390l5 -3 2 3 -5 3zM573 193l6 -5 3 5 -6 4zM415 656l8 -5 4 5 -9 5zM167 350l9 -6 2 3 -9 6zM76 283l6 -4 3 4 -7 4zM654 382l5 -3 2 4 -5 3zM407 533l8 -6 2 4 -8 5zM516 352l5 -3 3 4 -5 4zM485 26l4 -3 3 6 -4 3zM214 328l6 -4 4 5 -7 5zM340 254l6 -3 4 5 -6 4zM207 17l6 -4 3 4 -7 4zM220 409l6 -4 3 4 -7 4zM508 513l6 -4 2 4 -6 4zM624 467l9 -6 4 5 -10 6zM579 417l8 -5 3 4 -9 5zM316 14l5 -3 3 4 -5 4zM284 174l6 -3 2 4 -6 3zM370 162l7 -4 3 4 -7 5zM488 449l5 -3 3 5 -5 3zM324 600l9 -6 3 5 -9 6zM674 679l6 -3 3 4 -6 4zM304 427l8 -5 3 5 -7 5zM39 194l6 -4 3 6 -6 3zM292 345l4 -3 3 4 -4 3zM390 107l4 -3 2 4 -4 3zM471 507l5 -3 3 5 -5 3zM78 21l7 -5 3 4 -8 5zM177 572l4 -3 2 4 -4 2zM645 617l4 -3 4 5 -5 3zM543 138l9 -6 3 6 -8 5zM441 271l5 -3 3 5 -5 3zM112 104l9 -5 2 4 -9 6zM557 466l8 -5 3 5 -8 5zM544 421l9 -6 3 5 -9 6zM122 186l8 -5 3 5 -8 5zM443 528l7 -5 2 3 -8 5zM236 338l8 -5 3 5 -8 5zM284 678l5 -3 3 3 -5 4zM493 23l6 -4 2 3 -6 4zM207 177l9 -6 2 4 -8 6zM434 388l9 -6 2 3 -9 6zM351 428l5 -4 3 4 -6 4zM66 215l5 -3 3 4 -5 3zM691 446l5 -3 2 3 -5 3zM673 507l9 -6 3 3 -10 6zM482 171l6 -4 2 4 -5 4zM695 676l8 -6 3 4 -9 6zM502 51l7 -4 3 6 -6 4zM278 607l7 -5 3 4 -8 4zM742 609l5 -4 3 5 -5 3zM177 377l7 -4 3 4 -7 5zM299 284l6 -3 3 5 -6 3zM48 197l7 -5 2 4 -7 5zM482 166l5 -4 3 5 -5 4zM367 150l9 -6 3 4 -9 6zM160 3l7 -5 4 5 -8 5zM249 255l7 -5 3 4 -7 5zM481 104l6 -3 3 5 -5 3zM432 541l8 -6 3 3 -9 6zM634 434l8 -5 2 3 -7 5zM146 352l9 -6 3 4 -9 6zM622 562l7 -5 2 3 -7 5zM451 304l4 -2 4 5 -5 2zM664 695l7 -5 2 4 -7 5zM515 208l4 -3 3 5 -4 2zM458 475l9 -6 3 5 -9 6zM443 496l9 -5 3 4 -9 5zM192 332l5 -3 2 4 -4 3zM68 251l8 -5 2 3 -8 6zM590 601l9 -5 3 5 -8 6zM479 480l6 -4 3 5 -6 4zM315 319l6 -4 3 3 -7 4zM467 67l7 -4 3 5 -7 4zM118 406l5 -3 4 6 -6 3zM559 172l6 -4 2 4 -6 4zM90 316l9 -6 3 5 -9 6zM219 343l9 -6 3 4 -9 6zM123 352l7 -5 3 6 -7 4zM323 650l6 -3 2 3 -5 4zM365 18l7 -5 4 6 -7 5zM160 158l6 -4 3 5 -6 4zM702 695l7 -4 2 4 -6 4zM307 635l6 -4 3 6 -5 3zM125 60l8 -5 3 5 -7 5zM349 516l7 -5 3 4 -8 5zM176 18l8 -5 3 4 -8 5zM258 587l9 -5 2 4 -8 5zM434 87l4 -3 3 5 -4 3zM280 439l5 -3 2 4 -5 3zM241 420l9 -6 3 6 -8 6zM197 395l7 -5 3 4 -7 4zM425 558l7 -5 3 5 -7 5zM240 170l6 -4 3 5 -5 4zM631 333l5 -3 2 4 -5 3zM471 247l8 -6 3 4 -8 6zM283 61l6 -4 2 4 -6 4zM639 579l8 -5 3 4 -8 6zM372 601l7 -5 2 4 -7 4zM668 657l8 -5 3 4 -8 5zM740 508l8 -5 4 6 -8 5zM74 253l5 -4 2 3 -5 4zM720 581l8 -6 3 5 -8 5zM260 291l5 -3 4 5 -6 4zM662 506l10 -6 3 5 -9 6zM119 364l7 -5 3 5 -7 4zM301 222l6 -3 3 4 -6 4zM295 2l9 -6 3 5 -9 6zM466 463l8 -6 4 6 -9 5zM498 29l9 -6 3 5 -9 6zM432 485l6 -4 3 5 -6 4zM347 3l6 -4 3 4 -6 4zM348 618l8 -5 2 5 -7 5zM167 386l6 -4 3 4 -7 5zM258 127l6 -4 3 4 -6 4zM353 510l9 -6 3 3 -9 6zM150 230l8 -5 2 4 -7 5zM631 605l6 -4 3 5 -5 4zM443 365l8 -6 3 4 -9 5zM727 661l6 -4 2 4 -6 4zM181 244l5 -4 2 4 -5 3zM417 614l5 -3 3 4 -5 4zM345 198l5 -3 2 3 -5 4zM566 432l7 -5 3 5 -7 5zM328 58l9 -5 2 4 -8 5zM181 250l7 -5 3 4 -7 5zM253 314l7 -4 2 3 -7 5zM130 197l6 -4 3 5 -6 4zM503 380l5 -3 2 3 -5 3zM371 678l7 -4 2 3 -7 4zM439 192l8 -5 2 4 -7 5zM361 639l7 -4 2 3 -7 5zM407 305l7 -4 2 4 -7 4zM664 311l4 -3 3 4 -5 3zM725 600l5 -3 3 4 -5 4zM515 214l6 -4 4 5 -6 4zM520 545l6 -5 4 6 -7 4zM360 266l6 -4 4 5 -6 4zM454 585l8 -5 2 3 -8 5zM430 174l4 -3 4 6 -4 3zM411 54l8 -5 3 4 -8 6zM507 515l4 -3 4 5 -5 3zM316 609l4 -3 3 3 -5 3zM195 363l9 -5 2 3 -8 6zM546 577l6 -4 3 5 -6 4zM327 444l7 -4 2 4 -6 4zM347 520l6 -4 2 4 -5 4zM414 384l8 -6 2 3 -8 6zM715 452l6 -3 3 4 -6 4zM647 380l8 -5 3 4 -8 5zM253 350l9 -6 2 4 -9 6z" fill="#615a54"/>
<path d="M528 171l7 -4 3 4 -7 5zM525 417l7 -4 3 4 -7 5zM400 336l9 -6 3 5 -8 6zM548 450l4 -3 4 6 -5 3zM383 623l7 -5 3 4 -8 5zM237 589l4 -3 4 5 -5 3zM224 324l9 -6 3 5 -9 6zM149 5l9 -6 3 4 -9 6zM362 38l9 -5 3 4 -9 5zM618 577l8 -6 2 3 -8 6zM78 144l5 -3 2 3 -5 3zM474 250l6 -4 3 4 -6 4zM626 637l8 -5 2 3 -8 5zM673 427l9 -5 3 5 -8 5zM636 328l7 -4 3 5 -7 4zM480 549l4 -2 4 5 -5 2zM515 87l10 -6 2 3 -9 6zM137 35l8 -5 3 5 -8 5zM56 219l8 -5 2 4 -8 5zM392 13l4 -3 4 6 -4 3zM199 289l5 -3 3 3 -5 4zM250 118l7 -4 2 4 -6 4zM203 144l8 -4 3 5 -7 5zM359 612l6 -3 2 3 -5 4zM708 444l8 -5 4 6 -8 5zM419 269l5 -4 4 6 -6 3zM469 174l4 -3 4 5 -5 3zM293 504l5 -3 3 4 -5 3zM290 283l5 -3 2 3 -4 3zM302 638l8 -5 3 5 -8 5zM503 420l6 -4 4 5 -7 4zM640 650l5 -4 4 6 -5 3zM362 454l6 -3 2 4 -5 3zM427 278l5 -3 2 3 -5 4zM562 240l8 -5 4 5 -8 5zM479 254l6 -4 3 6 -6 3zM340 408l8 -6 3 4 -9 5zM269 548l9 -5 2 3 -9 6zM409 385l7 -5 4 6 -7 5zM409 157l7 -4 3 3 -8 5zM345 450l8 -6 4 6 -9 5zM312 410l9 -6 4 6 -9 6zM113 41l8 -5 2 3 -8 5zM466 486l8 -5 3 4 -9 5zM568 446l6 -3 3 4 -5 4zM625 284l5 -3 3 5 -5 3zM270 158l9 -6 3 5 -9 6zM522 194l5 -3 3 4 -5 4zM601 243l5 -3 3 4 -5 4zM475 183l8 -5 2 3 -8 5zM659 373l7 -4 3 5 -7 4zM436 284l7 -5 2 4 -7 5zM375 631l9 -6 3 5 -8 6zM606 253l8 -5 2 4 -8 5zM594 626l9 -6 2 3 -9 6zM263 66l8 -5 3 5 -8 5zM561 395l9 -6 3 6 -8 6zM123 411l7 -4 2 4 -6 4zM732 611l6 -4 3 4 -6 4zM180 462l8 -5 3 5 -7 5zM224 180l8 -6 3 5 -8 6zM83 182l8 -5 4 5 -8 6zM93 137l9 -6 2 4 -9 6zM255 131l7 -4 3 5 -6 4zM433 8l8 -6 3 5 -8 5zM353 632l8 -5 3 4 -8 5zM242 337l6 -4 3 4 -7 4zM430 568l8 -5 3 4 -8 5zM281 203l6 -4 4 5 -7 4zM276 189l7 -4 3 5 -6 4zM461 205l5 -3 4 5 -5 4zM444 264l4 -3 3 5 -4 3zM371 262l8 -6 3 4 -9 6zM496 373l6 -3 2 4 -5 3zM707 683l7 -5 3 4 -8 5zM217 606l8 -5 3 4 -8 6zM310 358l5 -4 3 4 -5 3zM357 377l7 -4 3 5 -7 4zM416 513l4 -3 4 6 -5 3zM6 65l4 -3 3 4 -5 3zM659 694l8 -6 2 4 -8 5zM501 194l8 -5 4 5 -9 6zM201 347l9 -5 2 3 -9 6zM621 575l5 -3 4 5 -6 4zM325 696l7 -5 2 4 -6 5zM36 111l6 -4 4 5 -6 4zM504 483l6 -4 4 6 -7 4zM336 163l5 -3 2 4 -5 3zM69 177l7 -4 2 3 -7 5zM248 225l5 -3 3 4 -6 3zM411 18l7 -4 2 3 -7 4zM754 519l6 -3 2 3 -5 4zM313 25l9 -6 2 5 -8 5zM450 544l5 -3 2 4 -5 3zM214 327l6 -4 2 3 -6 4zM289 164l9 -5 3 5 -8 5zM516 268l5 -4 3 4 -6 3zM464 131l8 -6 4 6 -9 5zM259 48l10 -6 3 5 -9 6zM207 450l7 -5 3 4 -7 5zM111 348l5 -3 2 4 -4 3zM633 422l5 -3 2 4 -5 3zM349 569l6 -4 2 4 -6 3zM530 122l10 -6 3 5 -10 6zM190 289l6 -4 2 3 -6 4zM165 470l6 -4 4 5 -6 4zM272 195l9 -6 2 4 -9 5zM517 358l9 -6 4 6 -9 5zM107 385l6 -4 2 4 -6 3zM260 198l5 -3 4 6 -5 3zM349 69l8 -5 2 3 -8 6zM154 45l5 -4 2 4 -5 3zM412 217l8 -5 3 5 -7 5zM459 128l5 -4 3 5 -5 4zM259 518l6 -5 4 6 -7 5zM232 295l5 -3 4 4 -6 4zM605 616l5 -3 3 5 -4 3zM437 323l6 -5 3 5 -6 5zM116 443l9 -6 2 4 -9 6zM312 245l6 -4 4 5 -7 5zM232 594l5 -3 3 5 -5 3zM365 98l8 -5 3 4 -8 6zM476 504l7 -5 3 4 -8 5zM485 92l7 -4 4 5 -8 5zM586 264l8 -5 3 4 -8 5zM343 688l7 -5 4 6 -7 5zM353 555l6 -4 4 6 -6 4zM441 316l9 -5 3 5 -8 5zM317 683l5 -3 2 3 -5 3zM746 651l8 -5 2 3 -8 5zM388 302l4 -3 2 3 -4 3zM449 265l7 -5 4 5 -8 5zM61 14l9 -5 2 3 -9 6zM454 38l4 -3 2 4 -4 2zM254 387l9 -6 3 5 -9 6zM329 329l8 -5 2 3 -8 5zM411 655l8 -6 4 5 -9 6zM204 287l7 -4 2 4 -6 4zM568 221l6 -3 2 5 -5 3zM488 77l6 -4 2 4 -6 4zM670 428l8 -5 2 3 -8 5zM117 337l7 -5 4 5 -8 6zM173 19l8 -6 2 4 -8 5zM416 460l5 -3 2 3 -5 3zM397 385l6 -4 3 5 -7 4zM706 546l6 -3 2 4 -5 4zM300 240l5 -4 4 6 -6 3zM689 634l6 -3 2 3 -5 4zM131 495l4 -3 2 3 -4 3zM169 213l6 -4 2 3 -6 4zM597 588l9 -6 2 4 -9 6zM233 314l4 -3 2 4 -4 2zM169 565l4 -3 4 5 -5 3zM349 570l5 -3 3 4 -6 3zM125 194l8 -5 2 3 -8 5zM292 406l10 -6 2 4 -9 6zM152 4l4 -3 3 6 -4 2zM315 569l5 -3 3 4 -5 3zM58 127l9 -6 2 5 -8 5zM522 308l7 -4 3 5 -6 4zM373 448l9 -6 3 5 -8 6zM430 454l7 -5 4 6 -8 5zM212 322l5 -3 3 5 -5 3zM198 149l7 -5 3 5 -7 4zM397 222l8 -5 2 4 -7 5zM402 592l10 -6 2 3 -9 6zM505 107l7 -5 2 4 -6 4zM484 435l5 -3 3 5 -5 3zM461 133l7 -5 3 6 -7 4zM556 251l4 -3 4 6 -5 3zM333 599l9 -6 3 5 -9 6zM755 506l7 -4 2 3 -6 5zM669 526l7 -5 3 4 -8 5zM676 434l7 -5 3 4 -7 5zM694 549l8 -5 4 5 -8 5zM213 18l8 -5 3 5 -8 4zM580 448l6 -3 2 3 -6 3zM314 385l7 -5 3 4 -8 5zM357 618l5 -2 2 4 -4 3zM271 154l7 -4 2 4 -6 4zM663 450l9 -6 3 5 -9 6zM166 450l7 -4 3 5 -6 4zM366 610l7 -5 3 5 -8 5zM261 326l8 -5 3 4 -8 5zM523 270l7 -5 3 4 -7 5zM212 149l7 -5 4 6 -7 4zM109 202l5 -3 2 4 -4 3zM369 679l9 -6 3 5 -9 6zM468 300l7 -5 3 4 -7 5zM411 489l8 -5 3 5 -8 5zM340 490l9 -6 3 5 -9 5zM469 254l8 -5 2 4 -8 5zM324 97l9 -6 2 4 -8 5zM4 63l7 -4 3 5 -7 4zM60 161l9 -6 2 3 -8 6zM92 352l7 -5 3 5 -7 4zM308 141l9 -6 3 4 -9 6zM129 124l6 -4 2 4 -5 4zM110 337l6 -4 2 3 -6 4zM604 531l5 -3 3 5 -5 3zM276 579l7 -5 3 4 -8 5zM600 297l6 -4 3 4 -6 4zM261 150l6 -4 4 5 -7 4zM117 21l5 -3 3 5 -4 3zM495 457l4 -3 2 4 -4 3zM325 438l7 -5 4 6 -7 4zM293 649l4 -3 3 5 -4 3zM343 162l6 -3 2 4 -5 3zM372 18l8 -5 2 3 -8 6zM189 481l8 -5 3 5 -7 5zM309 644l8 -5 4 5 -9 6zM651 473l8 -5 4 6 -8 5zM488 93l5 -4 4 6 -5 3zM742 551l4 -3 2 3 -4 3zM193 371l4 -3 3 4 -5 3zM323 9l9 -5 2 3 -9 6zM341 458l7 -4 3 5 -6 4zM292 153l8 -6 3 4 -8 6zM373 227l8 -5 2 4 -7 5zM345 171l7 -5 3 4 -7 5zM226 269l8 -5 3 4 -8 5zM482 392l7 -4 3 4 -7 5zM165 370l8 -5 3 4 -8 5zM267 376l5 -3 2 4 -5 3zM179 455l5 -3 4 6 -6 3zM635 674l7 -4 3 5 -6 4zM544 318l8 -6 3 3 -9 6zM172 397l8 -5 4 5 -9 5zM377 286l8 -6 2 4 -8 5zM98 363l6 -4 2 3 -6 4zM514 135l5 -3 3 4 -5 4zM162 16l7 -5 3 5 -7 5zM478 30l8 -5 3 5 -8 5zM370 107l7 -5 3 5 -7 5zM526 165l5 -4 2 4 -5 3zM339 123l4 -3 4 6 -4 3zM416 2l4 -3 2 3 -4 3zM320 191l7 -4 3 5 -7 5zM677 520l8 -5 3 5 -8 4zM163 354l5 -3 4 5 -6 3zM192 12l9 -6 3 4 -9 6zM49 221l9 -6 4 6 -9 6zM387 49l8 -6 2 4 -8 5zM173 360l7 -4 4 4 -8 5zM265 620l5 -4 3 5 -5 4zM391 146l5 -4 3 5 -5 3zM308 643l6 -4 4 5 -6 4zM705 547l5 -3 2 4 -4 3zM463 523l4 -3 3 5 -4 3zM260 612l7 -5 3 4 -7 5zM369 13l9 -6 3 4 -10 6zM550 506l7 -5 3 5 -7 5zM437 265l5 -3 3 4 -5 3zM587 587l5 -3 3 4 -5 3zM512 511l7 -5 3 6 -6 4zM691 700l9 -6 3 5 -9 6zM404 561l6 -3 3 5 -5 4zM125 384l6 -3 3 6 -5 3zM636 678l8 -5 3 5 -8 5zM107 368l9 -5 4 5 -10 6zM513 217l5 -4 4 5 -6 4zM139 395l6 -5 3 5 -7 4zM654 358l6 -4 2 4 -5 4zM366 2l5 -3 2 4 -4 3zM298 359l5 -4 3 5 -5 3zM186 380l9 -6 3 5 -9 6zM211 327l7 -5 2 5 -6 4zM439 106l4 -3 3 6 -4 3zM499 244l7 -4 3 5 -6 4zM22 162l8 -5 3 4 -9 5zM126 425l7 -5 4 6 -8 4zM441 422l7 -4 2 4 -6 4zM488 34l6 -4 2 4 -6 3zM388 38l6 -4 2 3 -6 4zM83 121l9 -6 2 4 -9 6zM320 477l9 -6 3 5 -8 6zM566 530l6 -4 2 3 -6 4zM385 498l5 -3 3 6 -5 3zM288 478l8 -5 2 3 -8 6zM385 225l8 -5 3 5 -7 5zM316 408l4 -3 3 4 -5 3zM411 275l9 -6 3 4 -9 6zM661 304l8 -6 3 5 -8 5zM340 589l5 -4 3 5 -5 3zM330 263l7 -4 2 3 -7 4zM499 57l7 -5 3 4 -7 5zM350 423l5 -3 3 4 -5 3zM95 136l6 -4 2 3 -6 5zM318 51l7 -4 2 3 -7 5zM265 234l7 -5 3 5 -7 5zM210 576l6 -4 2 5 -6 3zM422 262l7 -4 4 5 -8 5zM435 261l9 -6 4 6 -9 6zM111 390l5 -3 3 4 -6 3zM647 637l5 -3 4 5 -5 3zM284 234l5 -3 3 5 -4 3zM643 287l5 -3 3 5 -5 3zM473 63l8 -4 2 4 -7 4zM301 329l6 -4 3 6 -6 4zM539 455l8 -6 2 4 -8 5zM577 535l9 -5 3 5 -8 6zM599 287l6 -3 3 5 -5 4zM449 334l7 -5 3 4 -7 5zM530 88l5 -3 3 4 -5 3zM740 596l8 -5 3 5 -8 5zM572 467l7 -5 2 4 -7 5zM298 461l9 -6 3 5 -9 5zM280 654l5 -3 3 5 -5 3zM415 462l5 -3 3 4 -5 3zM525 337l7 -4 2 5 -6 4zM28 154l5 -3 2 4 -4 3zM381 8l8 -5 2 2 -8 6zM178 581l9 -6 3 5 -9 6zM465 196l8 -6 2 3 -8 6zM532 399l9 -5 3 4 -9 6zM259 423l5 -3 3 5 -5 3zM475 166l7 -5 4 6 -7 4zM586 266l7 -5 3 5 -7 5zM405 657l5 -4 4 6 -5 3zM511 531l5 -4 3 5 -5 4zM275 328l8 -6 3 5 -8 5zM585 466l8 -6 4 6 -9 6zM107 6l5 -3 2 3 -5 4zM337 137l6 -4 4 6 -7 4zM324 278l7 -4 2 4 -6 4zM693 425l6 -3 2 4 -5 3zM99 376l7 -4 3 4 -7 5zM558 387l4 -3 3 5 -4 3zM706 684l4 -2 3 3 -5 3zM627 380l6 -4 3 4 -6 4zM736 491l8 -6 2 4 -8 5zM470 78l4 -3 2 4 -4 2zM456 0l4 -3 3 4 -5 3zM143 48l9 -5 3 6 -8 5zM403 540l6 -4 3 4 -7 4zM528 354l8 -5 3 4 -8 5zM607 306l6 -3 2 3 -6 3zM494 375l7 -5 2 3 -7 5zM415 495l6 -5 3 4 -7 4zM370 9l4 -3 3 4 -5 3zM194 364l8 -5 3 5 -8 5zM302 545l5 -2 3 4 -5 3zM266 439l6 -4 3 4 -7 4zM653 486l8 -5 4 5 -9 6zM450 584l7 -5 2 4 -7 5zM740 652l6 -4 3 4 -7 4zM688 397l6 -4 3 5 -6 3zM120 343l7 -4 3 3 -7 5zM405 377l7 -5 4 6 -8 5zM264 632l5 -3 2 3 -5 4zM526 311l6 -4 2 3 -6 4zM341 550l4 -2 3 5 -4 3zM192 388l8 -5 3 4 -8 5zM140 224l7 -5 2 4 -7 4zM397 397l5 -3 3 4 -5 4zM433 452l4 -3 3 4 -5 3zM587 488l8 -5 2 3 -8 5zM596 220l8 -5 2 4 -8 5zM402 66l7 -5 3 5 -8 5zM496 438l8 -5 3 3 -9 6zM128 508l6 -4 3 4 -7 4zM441 538l6 -4 2 3 -6 4zM382 311l9 -6 2 4 -8 6zM127 395l7 -5 3 5 -7 4zM681 669l8 -5 3 5 -8 5zM579 456l5 -3 2 3 -5 3zM75 256l8 -6 4 6 -9 6zM106 18l7 -5 3 5 -7 5zM324 54l8 -6 3 5 -8 5zM678 415l8 -5 2 4 -8 5zM55 249l8 -5 3 4 -8 5zM401 478l6 -4 4 5 -6 4zM161 281l8 -5 2 5 -7 4zM608 567l4 -3 2 3 -4 3zM80 137l8 -5 2 3 -8 5zM519 402l6 -4 2 4 -5 3zM76 27l6 -4 4 6 -6 4zM145 380l5 -4 3 4 -6 4zM337 524l8 -5 4 5 -8 5zM486 295l5 -3 2 4 -5 3zM576 537l8 -5 3 6 -8 5zM255 184l8 -5 3 5 -8 5zM377 59l8 -5 4 5 -8 6zM142 404l4 -3 3 3 -5 3zM83 305l5 -4 4 6 -5 3zM478 290l9 -6 2 4 -8 6zM351 632l8 -5 3 4 -8 5zM522 70l6 -4 2 3 -6 4zM319 513l8 -6 2 3 -8 6zM317 92l7 -5 4 6 -7 5zM650 603l8 -4 3 4 -7 5zM325 456l8 -5 3 6 -7 5zM394 48l7 -5 3 4 -8 5zM275 35l9 -6 2 3 -9 6zM309 532l6 -4 4 6 -6 4zM360 3l7 -5 3 4 -8 5zM221 42l8 -6 3 6 -8 5zM581 434l6 -3 3 6 -5 3zM387 405l8 -5 3 4 -8 5zM667 560l6 -4 3 4 -6 4zM568 443l5 -3 4 6 -5 3zM558 381l5 -4 4 6 -6 3zM579 579l7 -5 4 6 -8 4zM496 541l6 -5 4 6 -7 4zM302 114l5 -3 4 5 -5 4zM61 14l7 -4 2 3 -7 5zM483 545l8 -6 4 5 -9 6zM400 331l4 -3 2 3 -4 3zM262 442l6 -4 2 3 -6 4zM253 107l5 -3 3 4 -5 3zM214 348l9 -6 2 3 -9 6zM613 397l7 -5 3 5 -7 5zM634 585l8 -5 2 3 -8 5zM485 484l9 -6 2 4 -9 6zM376 465l5 -3 4 6 -5 3zM317 34l7 -5 3 6 -7 4zM442 124l6 -5 3 5 -7 4zM471 52l6 -4 3 4 -6 4zM256 167l8 -5 4 5 -9 6zM214 75l7 -5 3 5 -7 4zM70 226l6 -4 3 4 -6 5zM211 433l4 -3 4 5 -5 3zM303 270l7 -4 2 3 -7 5zM413 356l8 -5 3 4 -9 5zM328 668l4 -3 3 4 -4 3zM477 110l8 -5 3 5 -8 5zM254 180l4 -3 3 4 -4 3zM340 332l5 -3 3 4 -5 4zM337 242l8 -5 3 6 -7 5zM55 147l5 -4 3 5 -5 3zM393 368l6 -4 2 4 -6 4zM679 687l4 -3 2 3 -4 3zM227 335l5 -4 4 6 -5 3zM382 187l8 -6 2 3 -8 6zM317 268l8 -6 3 4 -8 6zM267 673l6 -4 3 5 -6 4zM655 659l8 -6 2 4 -8 5zM658 561l6 -4 4 5 -7 5zM495 201l8 -5 2 3 -8 5zM311 388l6 -3 3 5 -5 3zM296 618l8 -5 3 5 -8 5zM66 133l8 -5 2 3 -8 5zM528 94l8 -5 2 3 -8 5zM756 579l8 -6 4 5 -9 6zM510 418l5 -3 3 5 -5 3zM459 558l7 -5 4 5 -8 5zM370 308l5 -3 3 5 -5 3zM251 497l9 -6 3 4 -9 6zM321 650l6 -3 2 3 -6 4zM639 451l9 -6 2 3 -9 6zM258 35l7 -4 2 3 -7 4zM363 75l8 -5 3 6 -7 5zM277 641l7 -5 3 5 -7 4zM60 128l6 -4 4 5 -6 4zM153 221l8 -5 3 4 -8 6zM607 245l7 -5 2 5 -6 4zM616 350l8 -6 2 4 -8 5zM543 461l8 -5 3 4 -8 5zM385 65l9 -5 2 4 -8 5zM334 323l8 -6 3 4 -9 6zM331 596l5 -3 4 6 -5 3zM346 190l6 -4 3 4 -6 4zM228 370l6 -4 3 5 -5 4zM481 22l7 -4 2 3 -6 4zM537 563l7 -4 2 3 -7 4zM305 284l7 -4 3 5 -7 4zM679 664l4 -3 3 5 -4 2zM426 77l5 -4 4 6 -6 3zM62 275l9 -6 3 4 -9 6zM310 275l6 -4 2 3 -6 4zM642 567l6 -4 3 5 -6 3zM239 218l5 -3 3 5 -5 3zM301 163l5 -2 2 3 -5 2zM202 438l5 -3 3 5 -5 4zM258 442l6 -3 4 6 -6 3zM299 216l6 -4 3 4 -7 5zM548 278l9 -6 3 5 -9 5zM334 685l5 -4 3 5 -5 3zM250 478l5 -4 2 3 -5 3zM32 141l5 -3 3 4 -5 3zM130 352l8 -5 3 6 -7 5zM350 321l5 -4 2 4 -5 3zM163 350l9 -6 3 6 -9 5zM178 452l9 -6 2 5 -8 5zM87 309l8 -5 3 5 -8 5zM331 519l7 -5 3 5 -7 5zM345 577l7 -5 2 4 -7 5zM327 393l9 -5 2 3 -9 6zM460 458l7 -4 4 5 -8 5zM717 696l9 -6 3 5 -9 6zM586 519l5 -4 3 4 -6 4zM405 642l4 -3 3 5 -4 3zM150 57l8 -5 2 3 -8 5zM374 293l9 -6 3 4 -9 5zM139 123l9 -5 3 4 -9 6zM405 32l4 -3 2 4 -4 2zM574 433l6 -4 2 5 -5 3zM310 590l4 -3 3 4 -5 3zM265 502l6 -4 2 3 -6 4zM123 15l7 -4 2 4 -6 4zM581 214l9 -6 4 6 -9 5zM145 410l8 -5 3 6 -8 5zM494 302l8 -4 3 4 -8 5zM634 285l5 -3 3 5 -5 3zM556 576l4 -2 3 4 -4 3zM290 461l7 -4 4 5 -7 5zM532 524l5 -3 3 5 -5 3zM415 526l7 -4 4 5 -7 5zM75 135l6 -5 2 4 -6 4zM437 611l7 -5 3 5 -7 5zM400 306l7 -5 3 4 -7 5zM378 60l6 -4 4 5 -6 4zM205 6l7 -5 3 5 -7 4zM319 209l8 -5 3 5 -7 5zM270 679l9 -6 2 4 -8 5zM684 633l6 -4 2 3 -6 4zM647 370l5 -4 3 5 -5 3zM410 356l8 -6 4 6 -9 5zM586 628l6 -4 3 4 -6 4zM227 478l6 -4 4 5 -7 4zM597 574l5 -3 3 5 -4 3zM382 343l8 -5 2 3 -8 5zM303 594l6 -4 2 3 -6 5zM375 220l6 -3 2 4 -5 3zM192 254l6 -3 3 3 -6 4zM496 381l8 -5 2 3 -8 5zM441 408l5 -3 4 5 -5 4zM296 482l4 -2 2 3 -4 3zM9 113l6 -3 3 5 -6 3zM488 463l7 -5 3 5 -7 5zM235 596l8 -5 3 4 -9 5zM380 504l6 -4 3 4 -6 4zM491 338l9 -5 3 4 -9 6zM489 274l8 -5 2 3 -8 5zM613 508l6 -4 3 6 -6 3zM611 515l8 -5 3 6 -7 5zM126 450l6 -4 4 5 -6 4zM464 561l5 -3 3 4 -5 3zM506 126l9 -5 3 4 -9 5zM505 111l9 -6 4 6 -9 6zM710 563l9 -6 3 4 -9 6zM225 433l4 -3 2 4 -4 3zM608 472l7 -4 3 5 -6 4zM510 341l7 -5 3 5 -7 5zM593 534l6 -4 3 4 -7 4zM414 252l8 -5 3 4 -8 5zM333 239l6 -4 3 4 -6 4zM165 387l9 -6 3 5 -9 6zM268 24l8 -6 4 6 -9 6zM347 560l9 -6 3 5 -9 6zM414 85l7 -4 2 3 -7 5zM175 162l8 -5 2 3 -8 5zM444 283l8 -5 3 4 -8 6zM398 28l6 -5 3 5 -6 4zM270 183l6 -4 2 3 -6 4zM691 673l6 -4 2 4 -6 4zM577 523l7 -4 3 5 -6 5zM348 163l6 -4 2 4 -5 4zM223 18l8 -5 3 4 -8 6zM701 446l8 -4 3 4 -7 5zM105 424l4 -3 3 4 -4 3zM137 394l7 -5 3 5 -7 4zM304 5l5 -3 2 3 -4 3zM374 326l9 -6 2 5 -9 6zM385 496l9 -5 3 4 -9 5zM201 479l5 -3 2 3 -5 3zM638 516l5 -3 3 3 -5 3zM69 147l6 -4 3 5 -6 4zM323 688l8 -6 3 5 -9 5zM246 643l7 -5 4 5 -8 5zM476 241l4 -3 3 4 -5 2zM668 637l9 -6 3 5 -8 6zM438 275l8 -6 2 3 -9 6zM455 301l9 -6 3 6 -9 6zM380 286l5 -3 3 5 -5 3zM163 454l7 -5 2 4 -7 4zM330 570l6 -3 2 3 -6 4zM627 693l8 -5 2 4 -8 5zM144 55l4 -3 4 4 -5 3zM629 379l6 -4 3 5 -6 3zM282 536l9 -6 3 4 -9 6zM259 624l7 -4 4 6 -7 4zM89 353l7 -5 3 5 -7 5zM608 482l5 -4 3 4 -5 3zM219 187l6 -5 3 4 -7 4zM517 87l8 -5 3 5 -8 6zM245 470l5 -3 2 3 -5 3zM168 393l6 -3 2 4 -5 4zM683 540l8 -6 3 5 -9 5zM646 676l9 -6 2 4 -9 6zM455 584l7 -5 3 4 -8 5zM248 54l8 -6 3 5 -8 5zM533 532l4 -4 3 5 -5 3zM561 544l8 -5 3 4 -8 6zM492 339l6 -4 2 3 -6 4zM335 441l5 -4 4 6 -6 3zM453 186l9 -6 3 4 -9 6zM389 688l8 -6 3 5 -8 6zM469 58l5 -4 3 4 -5 4zM396 402l7 -4 4 5 -7 5zM577 387l7 -4 4 6 -7 4zM275 341l4 -3 4 5 -5 3zM365 591l5 -4 4 6 -6 3zM164 579l9 -6 2 4 -9 6zM433 188l9 -5 4 5 -9 6zM66 7l6 -4 2 3 -6 4zM359 205l4 -3 4 5 -4 3zM674 593l9 -6 2 3 -9 6zM294 100l7 -5 3 5 -7 4zM483 188l5 -3 2 4 -5 3zM443 602l5 -3 3 5 -5 3zM236 17l6 -4 3 5 -6 4zM657 324l5 -3 3 5 -4 3zM632 574l8 -5 3 5 -8 5zM516 448l8 -5 3 4 -9 6zM648 342l8 -5 2 3 -8 5zM335 456l5 -4 3 4 -6 4zM606 477l8 -6 4 6 -9 6zM510 424l4 -3 4 6 -5 3zM693 570l6 -4 3 4 -6 4zM379 29l8 -5 2 4 -8 5zM412 437l7 -5 3 6 -7 4zM650 513l8 -5 2 3 -8 5zM218 373l6 -4 3 6 -6 3zM499 379l4 -3 3 5 -4 3zM457 477l8 -5 2 4 -7 5zM367 290l9 -5 4 6 -9 5zM533 178l7 -5 3 4 -7 5zM422 109l8 -6 2 4 -8 5zM145 9l9 -5 2 4 -8 5zM516 296l5 -4 3 4 -6 4zM581 366l6 -4 4 5 -6 4zM154 12l6 -4 3 5 -6 4zM382 286l8 -4 3 5 -7 4zM653 505l6 -4 2 3 -6 4zM408 55l9 -6 3 4 -9 6zM630 593l5 -3 3 4 -5 3zM653 678l7 -5 2 4 -7 4zM295 398l6 -4 3 5 -5 4zM213 388l5 -3 2 3 -4 3zM461 396l6 -3 4 5 -6 4zM184 386l7 -5 2 4 -7 4zM594 231l5 -3 3 5 -5 3zM338 496l5 -3 2 3 -5 3zM213 212l7 -4 4 5 -7 5z" fill="#a08068"/>
<path d="M501 43l7 -5 4 4 -8 6zM541 462l5 -3 4 6 -5 3zM653 318l6 -4 3 5 -6 4zM350 84l9 -5 2 3 -9 6zM157 408l5 -4 2 5 -4 3zM199 358l5 -3 2 4 -5 3zM686 348l5 -4 4 6 -5 3zM78 108l7 -4 3 5 -7 4zM756 654l6 -4 2 4 -6 4zM380 102l6 -4 3 5 -6 3zM206 572l5 -3 2 4 -4 3zM151 438l7 -4 2 4 -7 4zM423 246l8 -5 3 5 -8 4zM686 443l8 -5 3 5 -8 5zM126 0l5 -3 3 5 -5 3zM245 134l8 -5 2 3 -8 5zM342 436l6 -4 4 5 -7 4zM516 276l8 -5 3 4 -8 5zM321 448l8 -5 3 4 -8 5zM479 20l8 -5 3 5 -7 5zM475 293l6 -4 4 5 -7 4zM594 398l6 -3 2 3 -6 3zM303 363l5 -3 2 3 -5 3zM319 664l8 -5 3 5 -8 6zM637 608l7 -5 2 3 -7 5zM316 590l6 -5 3 4 -7 5zM198 476l6 -4 3 5 -6 3zM469 176l6 -4 3 4 -7 4zM573 334l8 -6 4 5 -9 6zM373 646l9 -5 2 5 -8 5zM400 572l5 -3 3 4 -5 3zM545 266l9 -6 2 3 -9 6zM208 64l9 -6 3 4 -9 6zM326 134l7 -4 2 2 -7 5zM345 682l8 -6 4 6 -9 5zM511 427l6 -4 3 5 -6 4zM414 503l8 -6 3 4 -8 5zM671 437l9 -6 3 5 -9 5zM376 184l7 -5 3 5 -7 5zM577 544l6 -4 3 5 -6 4zM13 80l9 -6 2 3 -9 6zM377 79l6 -4 3 4 -6 4zM242 454l7 -5 3 4 -7 5zM613 247l6 -4 3 5 -6 4zM107 235l6 -4 2 3 -7 4zM536 564l8 -5 2 4 -7 5zM219 149l9 -5 2 3 -8 6zM154 70l4 -3 4 5 -5 3zM243 590l5 -4 3 6 -5 3zM512 81l8 -5 3 3 -9 6zM659 354l8 -6 2 3 -8 6zM293 550l8 -5 3 5 -8 5zM295 351l9 -5 2 4 -9 6zM120 370l5 -3 2 3 -4 3zM733 675l5 -3 3 4 -6 3zM158 156l5 -3 3 5 -4 3zM197 249l5 -4 3 5 -5 4zM76 108l8 -5 3 5 -8 5zM186 15l9 -5 3 5 -9 5zM161 472l9 -6 3 5 -9 6zM310 14l5 -4 4 6 -6 3zM489 379l9 -6 3 4 -9 6zM358 360l9 -6 2 4 -9 6zM468 153l8 -6 3 4 -9 5zM174 302l5 -3 2 4 -5 3zM306 295l4 -3 3 4 -4 3zM321 237l5 -3 2 4 -5 3zM254 174l6 -4 2 4 -5 4zM563 562l5 -4 4 6 -5 3zM412 352l7 -5 3 3 -8 5zM679 633l9 -6 3 4 -9 6zM194 260l6 -4 3 4 -6 4zM38 185l8 -5 3 5 -7 5zM458 473l9 -6 3 4 -9 6zM327 274l6 -3 2 3 -6 4zM251 278l8 -6 4 6 -9 6zM402 601l6 -5 2 4 -6 4zM443 115l9 -6 3 4 -9 6zM89 200l8 -5 3 4 -8 5zM490 297l6 -4 3 5 -6 3zM653 413l9 -5 3 4 -9 6zM497 286l7 -5 2 4 -7 4zM312 86l6 -4 3 4 -7 4zM492 482l4 -3 2 4 -4 3zM430 361l5 -4 3 6 -5 3zM579 542l7 -4 3 5 -7 5zM696 450l9 -5 3 4 -9 5zM494 276l7 -4 2 3 -7 5zM431 573l9 -6 3 4 -10 6zM567 489l7 -5 2 4 -7 4zM91 153l8 -5 3 4 -8 5zM252 280l9 -6 2 4 -9 6zM510 298l9 -5 4 5 -10 6zM276 167l4 -3 4 5 -5 3zM611 467l7 -5 4 6 -7 4zM622 411l6 -4 3 4 -7 4zM516 198l5 -3 2 3 -5 3zM230 422l6 -4 4 6 -6 4zM90 297l9 -6 3 5 -9 6zM196 393l7 -4 3 5 -6 4zM527 245l5 -4 2 4 -5 3zM394 295l7 -4 3 5 -6 5zM311 542l8 -6 3 5 -8 5zM650 576l8 -6 3 4 -9 6zM367 300l8 -5 3 5 -7 5zM289 678l6 -4 3 4 -6 4zM229 585l9 -6 4 6 -9 6zM146 438l7 -5 2 5 -6 4zM423 518l5 -4 4 6 -5 3zM717 588l4 -3 2 4 -4 2zM451 184l9 -6 3 6 -8 5zM603 561l9 -5 2 3 -8 6zM567 557l5 -3 3 4 -5 4zM464 273l10 -6 2 4 -9 6zM253 294l7 -4 4 6 -7 4zM167 9l6 -4 3 4 -7 4zM701 529l6 -5 4 6 -7 4zM211 206l7 -4 2 4 -7 4zM97 303l6 -4 4 5 -6 4zM602 225l4 -3 3 5 -4 3zM647 281l6 -5 3 6 -6 4zM569 495l9 -6 3 6 -8 5zM255 290l9 -5 2 3 -9 6zM419 520l7 -5 4 5 -8 5zM191 22l5 -3 2 3 -5 3zM448 200l9 -6 2 5 -8 5zM570 481l5 -3 3 5 -5 3zM345 619l8 -5 3 5 -8 5zM283 492l8 -5 3 4 -8 5zM326 540l6 -5 4 6 -7 4zM502 98l9 -6 3 5 -9 6zM101 289l9 -5 3 5 -8 5zM108 417l7 -4 3 4 -7 5zM-5 83l8 -6 4 6 -8 5zM211 209l6 -4 2 4 -6 4zM239 247l9 -6 3 6 -9 5zM581 581l7 -5 4 5 -8 5zM606 425l8 -6 3 5 -8 5zM212 215l8 -5 3 5 -8 5zM396 351l7 -5 3 4 -8 5zM614 475l5 -3 4 5 -5 4zM414 246l6 -3 3 4 -6 4zM505 27l9 -6 2 3 -9 6zM101 145l5 -3 3 4 -5 3zM314 265l5 -2 2 3 -5 3zM429 244l8 -6 4 5 -9 6zM96 124l6 -4 2 4 -6 3zM299 491l8 -5 3 6 -7 5zM296 482l9 -6 3 5 -9 6zM254 33l6 -5 4 6 -7 4zM490 12l6 -4 2 4 -6 4zM232 76l7 -5 2 4 -7 4zM249 135l7 -5 3 4 -7 5zM291 53l8 -5 4 5 -9 5zM262 329l7 -4 3 4 -7 5zM368 319l7 -5 3 4 -7 5zM541 301l5 -3 3 4 -5 4zM603 551l5 -3 2 3 -5 3zM156 410l6 -4 3 5 -6 4zM98 177l6 -3 3 5 -6 4zM217 379l7 -4 2 3 -7 5zM267 510l4 -3 3 5 -4 3zM419 277l9 -6 3 5 -9 6zM665 316l8 -5 3 5 -8 5zM524 97l9 -5 4 5 -9 6zM273 685l6 -4 2 4 -5 4zM286 425l4 -3 4 6 -4 2zM346 265l8 -5 3 4 -8 6zM314 629l9 -6 3 4 -9 6zM65 140l6 -4 3 5 -6 4zM587 324l7 -4 2 3 -6 5zM710 515l6 -5 3 4 -7 5zM477 363l8 -5 3 6 -7 4zM345 119l7 -4 2 3 -6 4zM444 83l6 -3 2 4 -5 3zM287 678l7 -5 4 5 -8 5zM355 560l8 -6 2 3 -9 6zM436 607l7 -5 4 6 -8 4zM181 132l9 -6 3 4 -9 5zM356 364l9 -6 2 4 -8 5zM448 108l5 -3 3 4 -5 3zM417 635l7 -5 3 5 -7 5zM312 684l9 -6 4 6 -9 6zM382 312l7 -5 4 5 -7 5zM231 349l8 -5 3 5 -8 5zM286 255l8 -5 4 5 -9 6zM254 188l7 -5 2 3 -7 5zM120 220l5 -3 3 5 -5 3zM258 39l4 -3 4 6 -5 2zM171 454l7 -4 4 5 -8 5zM20 139l4 -2 3 4 -4 3zM537 225l7 -4 4 5 -8 5zM595 303l8 -5 2 3 -8 5zM486 443l8 -5 3 5 -8 6zM402 526l6 -4 2 3 -6 4zM356 330l5 -4 3 5 -5 3zM655 483l5 -3 3 6 -5 3zM194 610l8 -5 3 4 -9 6zM98 183l8 -5 2 3 -7 5zM97 217l9 -6 4 6 -9 5zM669 449l6 -5 4 6 -7 4zM460 265l7 -4 3 5 -6 4zM659 474l7 -4 2 3 -6 5zM342 404l8 -5 2 3 -8 5zM379 553l7 -5 3 4 -7 5zM275 320l4 -3 2 3 -4 3zM461 553l9 -6 3 3 -9 6zM308 241l5 -3 4 6 -5 3zM608 571l7 -4 3 4 -7 5zM334 568l7 -5 2 4 -6 4zM301 110l5 -3 4 5 -6 4zM404 152l7 -4 2 3 -7 4zM270 235l6 -4 3 5 -6 4zM425 79l5 -4 3 5 -5 3zM430 371l6 -4 3 6 -6 4zM272 67l7 -5 3 4 -8 5zM434 257l6 -4 2 4 -6 3zM391 435l7 -5 3 3 -8 5zM595 316l9 -6 2 4 -8 6zM191 284l5 -3 4 6 -6 3zM80 143l5 -4 3 6 -5 3zM448 317l5 -3 3 4 -5 3zM337 402l6 -5 3 5 -6 4zM578 470l4 -3 4 5 -5 3zM263 110l8 -6 3 5 -8 5zM260 303l8 -5 4 6 -8 4zM185 577l8 -5 3 4 -8 5zM239 202l4 -3 4 5 -5 3zM371 668l5 -3 3 5 -5 3zM184 13l8 -5 2 3 -8 5zM627 329l7 -5 2 3 -7 5zM216 330l5 -3 3 4 -5 3zM161 269l5 -2 2 4 -4 3zM289 481l9 -6 3 5 -8 5zM280 311l6 -4 2 4 -5 3zM597 408l5 -3 3 5 -5 3zM407 632l7 -5 3 4 -8 5zM588 306l5 -3 3 4 -5 3zM278 93l7 -4 2 3 -7 4zM248 46l8 -6 4 6 -9 5zM531 486l5 -4 3 4 -5 4zM149 51l5 -3 3 5 -4 3zM613 608l7 -4 2 3 -7 4zM199 22l4 -3 4 6 -4 2zM293 90l4 -3 4 6 -5 3zM398 237l10 -5 3 5 -9 6zM382 636l8 -5 3 3 -8 6zM463 119l7 -5 3 5 -8 5zM283 61l9 -6 3 4 -9 5zM641 564l6 -4 4 6 -6 4zM319 659l7 -4 3 4 -8 5zM385 399l5 -4 3 5 -5 4zM309 177l8 -5 2 4 -8 5zM489 52l9 -6 4 5 -10 6zM542 392l8 -5 4 6 -9 5zM373 524l8 -5 3 4 -9 5zM296 353l5 -4 2 4 -5 4zM575 495l6 -4 4 6 -6 3zM311 6l5 -3 2 3 -5 4zM361 312l6 -4 3 5 -6 3zM357 267l10 -6 3 5 -9 6zM149 233l8 -6 3 5 -8 5zM361 210l7 -5 3 6 -6 4zM708 662l9 -6 3 4 -9 6zM388 590l5 -4 4 6 -6 3zM517 514l8 -5 3 5 -8 5zM451 142l8 -6 3 4 -8 6zM318 11l8 -5 3 4 -8 5zM489 446l6 -4 3 5 -6 3zM357 380l8 -5 4 6 -8 5zM531 257l9 -5 3 6 -8 5zM69 7l6 -4 2 3 -6 4zM211 625l8 -5 2 3 -7 5zM752 509l6 -4 3 4 -7 4zM432 393l8 -5 4 6 -8 5zM404 592l7 -5 3 6 -7 4zM472 60l7 -4 3 6 -6 4zM508 518l6 -4 3 5 -6 4zM277 503l9 -5 3 4 -9 6zM481 195l8 -4 2 4 -7 5zM221 182l6 -4 3 5 -6 4zM243 547l8 -5 2 4 -8 5zM340 195l6 -3 2 3 -6 4zM484 390l9 -6 4 5 -9 6zM212 481l5 -3 3 6 -5 3zM466 462l7 -4 2 3 -7 4zM332 63l7 -4 3 4 -7 5zM277 547l9 -6 4 5 -9 6zM296 52l8 -5 3 5 -8 5zM235 417l8 -6 4 5 -9 6zM446 173l7 -5 4 5 -8 5zM548 347l8 -6 2 4 -8 6zM238 209l4 -3 2 3 -4 3zM305 356l8 -5 2 3 -8 5zM459 155l7 -4 3 4 -7 5zM105 334l9 -5 3 4 -9 6zM263 195l6 -4 3 4 -6 4zM559 258l6 -3 3 5 -5 4zM404 337l7 -5 3 5 -7 5zM454 400l7 -5 4 6 -8 5zM303 142l8 -5 3 5 -8 5zM425 167l4 -3 3 5 -4 2zM539 332l8 -5 2 3 -8 6zM518 513l9 -5 2 3 -8 6zM408 96l4 -4 3 5 -4 3zM304 529l7 -5 4 5 -8 5zM473 63l6 -4 3 4 -7 5zM456 423l8 -5 3 5 -8 5zM277 364l5 -3 3 5 -4 3zM316 263l7 -5 3 4 -8 5zM364 23l6 -4 3 5 -5 4zM380 211l5 -3 2 4 -5 3zM264 289l8 -5 3 4 -8 5zM113 380l6 -4 3 5 -6 4zM101 402l6 -4 2 3 -6 4zM404 412l6 -4 2 3 -6 5zM537 399l8 -6 4 5 -9 6zM384 65l6 -4 3 4 -6 4zM713 512l5 -3 3 5 -5 3zM693 369l5 -4 4 6 -6 4zM330 498l5 -4 3 5 -5 4zM715 613l9 -6 2 3 -9 6zM176 176l7 -5 2 4 -6 5zM117 414l8 -6 3 4 -9 6zM611 428l8 -5 4 5 -9 5zM433 421l7 -4 3 5 -6 4zM556 440l7 -5 4 6 -8 4zM371 362l8 -5 2 4 -8 5zM636 585l6 -4 2 5 -5 3zM131 146l4 -3 3 5 -4 3zM336 270l5 -3 4 5 -5 4zM335 270l7 -5 2 3 -7 5zM525 122l8 -5 2 3 -7 5zM303 422l5 -3 3 6 -4 3zM375 357l6 -4 3 5 -6 4zM394 667l7 -5 2 3 -7 5zM693 468l8 -5 3 4 -8 5zM115 425l4 -3 3 3 -5 3zM373 35l8 -6 3 4 -9 6zM583 294l7 -5 2 3 -7 5zM304 409l7 -4 4 5 -8 5zM345 82l6 -4 2 4 -5 4zM595 246l6 -5 3 4 -6 4zM491 434l6 -4 3 3 -7 5zM540 415l8 -5 3 4 -8 5zM331 167l6 -4 2 3 -6 4zM399 429l4 -3 3 5 -4 3zM305 341l9 -5 2 3 -9 6zM655 354l6 -4 3 3 -7 4zM371 147l6 -3 2 3 -6 4zM405 156l5 -3 2 4 -4 2zM181 361l5 -4 3 4 -6 4zM192 613l5 -2 3 5 -5 2zM145 224l8 -5 3 4 -8 6zM83 263l5 -3 3 6 -5 3zM276 648l5 -3 3 4 -5 3zM623 343l6 -4 4 6 -7 4zM404 229l4 -3 3 5 -4 3zM629 265l9 -5 2 4 -8 5zM490 164l5 -3 3 5 -4 3zM350 84l4 -3 3 4 -5 2zM336 695l8 -5 2 4 -7 5zM611 340l5 -2 3 5 -4 3zM306 559l5 -3 2 3 -5 3zM73 155l8 -5 3 5 -7 5zM644 576l6 -4 3 4 -6 4zM410 625l7 -4 3 5 -7 4zM519 413l7 -4 3 4 -7 5zM314 390l7 -5 4 5 -7 5zM479 283l6 -4 3 4 -6 4zM136 435l7 -5 4 6 -7 4zM223 322l5 -3 3 4 -5 3zM611 533l7 -4 3 5 -6 5zM344 196l6 -4 3 5 -6 4zM336 223l8 -6 3 5 -9 5zM371 438l8 -5 3 5 -7 5zM595 284l8 -5 3 4 -9 5zM333 221l7 -4 2 3 -7 4zM499 466l4 -3 3 4 -5 2zM579 359l7 -5 3 5 -7 5zM272 340l7 -4 3 4 -7 5zM586 427l8 -5 4 5 -9 5zM497 47l6 -3 2 4 -5 3zM537 536l5 -3 3 5 -5 3zM389 72l8 -5 2 3 -8 5zM191 599l9 -6 3 5 -9 6zM191 42l7 -4 4 5 -7 5zM230 598l8 -5 3 5 -8 5zM516 276l4 -3 4 6 -4 2zM273 691l5 -3 3 4 -6 3zM230 444l7 -5 4 6 -8 5zM630 630l6 -4 3 6 -6 4zM399 638l6 -4 3 4 -6 4zM675 457l9 -6 2 4 -9 6zM163 142l7 -5 3 4 -7 5zM88 333l6 -4 3 4 -7 4zM270 559l5 -3 3 5 -5 3zM60 145l7 -5 4 6 -7 4zM354 131l4 -3 4 5 -5 3zM516 501l6 -3 3 5 -6 3zM250 183l5 -3 3 5 -5 3zM406 209l6 -4 3 4 -6 4zM168 235l9 -5 3 4 -9 6zM349 689l4 -3 4 6 -4 2zM191 407l8 -5 3 4 -8 5zM292 353l6 -4 3 4 -6 4zM242 361l7 -4 4 5 -7 5zM363 620l7 -5 3 5 -7 5zM584 474l9 -6 3 6 -8 6zM741 550l5 -4 2 4 -5 3zM313 136l9 -6 2 4 -9 6zM337 59l5 -4 4 6 -6 4zM141 79l7 -4 2 3 -7 4zM193 111l5 -3 4 5 -5 3zM414 499l6 -4 3 5 -6 4zM390 9l5 -3 3 3 -6 4zM445 465l8 -5 4 6 -8 5zM401 46l6 -4 2 3 -6 4zM312 221l5 -4 2 4 -5 3zM667 480l6 -4 2 4 -6 4zM352 624l5 -4 3 5 -5 3zM150 58l6 -4 4 6 -6 4zM107 414l7 -4 3 4 -7 4zM390 364l7 -5 3 5 -7 4zM289 415l8 -5 2 3 -7 5zM425 382l8 -5 3 6 -7 5zM245 457l9 -6 2 4 -9 6zM524 269l8 -5 4 5 -8 5zM200 262l4 -3 3 5 -4 3zM600 587l4 -3 4 5 -5 3zM614 356l8 -6 4 6 -8 5zM606 386l4 -3 3 4 -4 3zM307 573l4 -3 3 5 -4 3zM604 306l7 -5 3 5 -6 5zM471 354l7 -5 4 6 -7 5zM651 481l9 -6 2 3 -9 6zM472 351l4 -3 4 6 -5 3zM459 235l7 -4 4 5 -7 4zM235 179l7 -4 3 4 -7 4zM466 531l5 -4 3 4 -6 4zM721 623l6 -3 3 5 -5 4zM280 213l5 -3 3 4 -5 3zM296 691l4 -3 3 3 -5 3zM454 312l8 -5 4 5 -8 6zM81 280l6 -4 3 4 -7 4zM260 420l8 -5 3 5 -7 6zM207 431l5 -3 2 3 -5 3zM212 114l6 -3 4 5 -6 4zM318 368l5 -3 3 5 -5 3zM323 140l7 -4 3 4 -8 4zM298 554l6 -4 3 4 -6 4zM187 269l9 -5 3 4 -9 6zM317 586l7 -4 3 4 -7 5zM596 301l9 -5 2 3 -9 5zM149 407l7 -4 2 3 -7 4zM541 552l4 -3 3 4 -5 3zM474 529l8 -5 2 3 -8 5zM118 481l5 -4 2 3 -5 4zM66 202l6 -4 4 5 -7 5zM181 38l8 -6 2 4 -8 5zM705 496l5 -4 3 3 -6 4zM94 348l9 -5 3 4 -9 6zM275 221l6 -4 2 4 -6 4zM173 461l7 -4 2 3 -7 4zM131 199l6 -4 3 5 -6 4zM268 438l8 -6 4 6 -8 5zM165 415l4 -3 4 5 -5 3zM116 190l9 -6 3 4 -9 6zM368 677l5 -3 3 4 -5 3zM184 40l5 -3 2 3 -5 3zM493 108l9 -6 3 5 -9 6zM121 116l5 -3 2 3 -5 3zM357 659l8 -6 2 4 -7 5zM648 385l10 -6 3 5 -9 6zM101 222l7 -5 3 5 -7 5zM263 318l9 -6 4 6 -9 5zM119 435l4 -3 4 6 -4 3zM123 409l7 -5 3 5 -7 5zM455 38l8 -5 4 6 -8 5zM477 102l7 -5 4 6 -8 4zM535 160l6 -4 3 4 -6 4zM325 604l8 -5 3 4 -8 5zM255 336l5 -4 2 4 -5 3zM364 304l10 -6 3 5 -9 6zM439 115l7 -5 4 5 -8 5zM247 186l5 -4 4 6 -6 3zM116 127l6 -4 3 5 -6 4zM296 565l8 -6 2 4 -8 5zM362 612l6 -5 3 5 -6 4zM482 528l8 -6 3 5 -8 5zM382 389l6 -4 4 5 -7 4zM142 211l8 -6 3 5 -8 5zM663 481l5 -4 3 5 -5 4zM263 512l9 -6 2 4 -9 5zM295 555l9 -6 3 4 -9 6zM242 408l6 -3 2 3 -6 3zM418 288l9 -6 2 3 -9 6zM343 280l5 -3 2 3 -5 3zM512 508l6 -4 2 4 -5 4zM252 657l7 -5 3 4 -8 5zM143 218l6 -3 3 4 -6 3zM653 554l5 -3 2 4 -4 3zM261 417l4 -3 4 5 -5 3zM703 438l6 -4 3 5 -6 4zM696 681l8 -6 2 3 -8 6zM663 327l7 -5 3 4 -7 5zM678 445l7 -5 3 5 -7 4zM645 442l5 -4 3 4 -6 4zM188 426l9 -6 2 4 -8 5zM592 364l8 -5 3 4 -8 5zM100 299l5 -3 2 4 -5 3zM330 226l5 -4 3 3 -6 4zM298 493l9 -5 2 4 -8 6zM593 567l9 -6 2 4 -8 6zM68 153l5 -4 4 6 -6 3zM647 539l9 -6 3 5 -9 6zM291 8l7 -4 3 6 -6 4zM471 360l8 -5 4 6 -9 5zM612 662l6 -3 3 5 -5 3zM661 311l5 -3 4 5 -5 3zM540 554l4 -3 3 5 -5 3zM320 581l6 -4 2 3 -6 4zM707 409l6 -4 4 5 -6 4zM575 313l8 -5 4 5 -9 6zM678 520l5 -4 3 5 -5 4zM662 324l4 -2 3 4 -4 3zM650 691l4 -2 2 3 -4 2zM135 323l9 -6 4 6 -9 6zM169 360l5 -3 2 3 -4 3zM452 251l6 -4 2 4 -6 3zM412 157l6 -4 3 4 -7 4zM342 699l6 -4 3 4 -6 4zM537 471l8 -5 3 5 -8 5zM722 658l7 -4 3 5 -7 4zM433 123l8 -5 3 5 -8 5zM676 365l9 -5 3 5 -8 5zM212 443l9 -6 2 4 -9 6zM78 183l5 -3 3 4 -5 4zM382 606l6 -4 3 3 -7 5zM320 14l9 -6 3 4 -9 6zM100 216l9 -6 2 3 -9 6zM290 256l5 -3 2 3 -5 3zM698 672l7 -4 3 6 -6 4zM220 429l8 -5 3 4 -8 6zM324 320l6 -4 3 3 -7 4zM221 169l5 -3 3 4 -5 3zM698 578l6 -4 3 4 -6 4zM650 490l9 -5 3 5 -8 6zM320 405l8 -5 3 4 -8 6zM219 176l5 -4 2 3 -5 4zM412 55l7 -5 4 6 -7 5zM358 612l5 -3 2 4 -4 3zM207 630l6 -4 3 4 -7 4zM118 197l4 -3 3 5 -4 3zM649 362l9 -6 3 5 -8 6zM378 14l5 -4 2 4 -5 3zM417 505l5 -4 4 5 -5 4zM203 21l7 -4 3 4 -8 4zM318 463l6 -4 2 3 -6 4zM434 613l8 -6 2 3 -8 6zM299 548l7 -5 3 6 -7 4zM580 431l4 -3 4 4 -5 3zM478 15l5 -3 3 4 -5 3zM367 194l5 -3 3 4 -6 3zM310 687l9 -6 4 5 -9 6zM164 55l7 -5 3 4 -8 4zM340 327l7 -4 2 3 -7 5zM65 1l4 -3 3 4 -5 3zM197 374l6 -4 3 6 -5 3zM248 406l9 -6 2 4 -9 6zM206 74l6 -4 3 4 -6 4zM595 552l6 -4 3 4 -6 4zM680 541l9 -6 4 6 -9 6zM665 401l8 -5 2 3 -8 5zM311 680l7 -4 4 5 -7 4zM76 146l8 -6 3 4 -9 5zM606 513l8 -5 3 4 -8 5zM717 469l5 -3 3 5 -4 3zM295 470l5 -3 2 4 -4 3zM190 458l7 -5 3 5 -7 5zM703 444l9 -6 2 3 -9 6zM462 322l8 -5 2 4 -7 5zM532 415l8 -5 3 4 -8 5zM228 439l9 -5 2 4 -8 5zM180 51l9 -6 2 3 -9 6zM160 20l8 -5 3 3 -9 6zM590 370l8 -6 3 5 -8 5zM524 96l8 -6 3 4 -9 6zM642 319l9 -6 3 4 -10 6zM463 434l6 -3 2 3 -6 3zM298 278l5 -3 3 6 -4 3zM138 400l5 -3 2 3 -5 3zM571 210l9 -5 3 5 -9 6zM594 406l6 -4 2 4 -6 4zM359 622l7 -5 3 5 -7 5zM486 256l8 -5 3 4 -8 5zM343 178l7 -4 2 4 -7 4zM601 460l4 -3 3 4 -4 2zM424 180l7 -4 2 3 -7 5zM564 438l8 -5 3 5 -8 5zM350 263l7 -4 2 4 -6 4zM658 686l8 -6 3 4 -8 6zM729 580l9 -6 3 5 -9 5zM573 377l7 -4 2 4 -6 4zM651 375l5 -3 4 5 -5 4z" fill="#556040"/>
</g>
<linearGradient id="gg" x1="0" y1="0" x2="1" y2="1"><stop offset="0" stop-color="#5b853c"/><stop offset="0.55" stop-color="#587a3e"/><stop offset="1" stop-color="#6a6c47"/></linearGradient>
<g filter="url(#bl2)">
<polygon points="-20,94 0,94 10,118 20,148 32,178 42,202 56,234 62,259 69,283 81,315 86,345 99,372 104,402 99,427 109,449 116,468 128,517 158,562 173,584 197,616 215,641 237,653 254,656 270,680 279,722 -20,722" fill="#233626"/>
<polygon points="12,20 49,5 74,25 99,49 109,79 99,94 74,101 49,111 30,106 20,81 12,54" fill="#1f3222"/>
<polygon points="140,148 165,162 195,192 225,228 250,260 248,278 225,262 195,230 165,200 136,172" fill="#2c3b2b"/>
<polygon points="133,473 193,481 241,499 256,525 241,555 207,573 167,558 137,525" fill="#2a4029"/>
<polygon points="377,722 402,678 427,653 447,616 464,572 490,548 508,542 533,549 552,584 570,606 587,626 602,646 617,670 631,722" fill="#25382a"/>
<polygon points="505,-20 782,-20 782,260 705,258 681,308 678,313 666,288 646,264 626,234 602,202 582,173 557,138 538,99 530,74 512,30" fill="url(#gg)"/>
<polygon points="705,258 782,254 782,530 748,480 740,468 730,436 723,407 713,372 696,343 681,308" fill="#2a432e"/>
<polygon points="-20,636 74,628 123,665 148,722 -20,722" fill="#4b6142"/>
<polygon points="470,722 490,640 530,600 570,620 600,660 620,722" fill="#4d5640"/>
<polygon points="640,60 782,40 782,250 705,250 690,200 660,140" fill="#676e45" filter="url(#bl8)"/>
<polygon points="-20,94 0,94 10,118 20,148 32,178 42,202 56,234 62,259 69,283 50,290 20,280 -20,285" fill="#3d5535"/>
<polygon points="-20,492 22,492 24,573 -20,580" fill="#466041"/>
<polyline points="540,0 553,12 545,49 535,80 530,100" fill="none" stroke="#2a3b2a" stroke-width="8"/>
<polygon points="640,250 705,245 700,300 680,305" fill="#4f6e3c"/>
<polygon points="104,462 133,473 137,525 167,558 185,603 159,566 130,514" fill="#4a4838" opacity="0.8"/>
<polygon points="212,246 254,236 264,270 252,318 234,330 220,300" fill="#34482f" opacity="0.75"/>
<polygon points="-20,234 40,234 56,260 20,280 -20,282" fill="#5d5a3c" opacity="0.6"/>
<polygon points="470,0 540,0 530,60 520,90 505,60" fill="#6a6552"/>
</g>
<polyline points="642,246 700,242 740,244 762,250" fill="none" stroke="#a89c80" stroke-width="1.3" opacity="0.8"/>
<polyline points="740,248 720,270 700,310 683,337" fill="none" stroke="#a89c80" stroke-width="1.3" opacity="0.8"/>
<g filter="url(#leaf)" opacity="0.12">
<polygon points="-20,94 0,94 10,118 20,148 32,178 42,202 56,234 62,259 69,283 81,315 86,345 99,372 104,402 99,427 109,449 116,468 128,517 158,562 173,584 197,616 215,641 237,653 254,656 270,680 279,722 -20,722" fill="#000"/>
<polygon points="12,20 49,5 74,25 99,49 109,79 99,94 74,101 49,111 30,106 20,81 12,54" fill="#000"/>
<polygon points="140,148 165,162 195,192 225,228 250,260 248,278 225,262 195,230 165,200 136,172" fill="#000"/>
<polygon points="133,473 193,481 241,499 256,525 241,555 207,573 167,558 137,525" fill="#000"/>
<polygon points="377,722 402,678 427,653 447,616 464,572 490,548 508,542 533,549 552,584 570,606 587,626 602,646 617,670 631,722" fill="#000"/>
<polygon points="505,-20 782,-20 782,260 705,258 681,308 678,313 666,288 646,264 626,234 602,202 582,173 557,138 538,99 530,74 512,30" fill="#000"/>
<polygon points="705,258 782,254 782,530 748,480 740,468 730,436 723,407 713,372 696,343 681,308" fill="#000"/>
</g>
<rect x="620.7" y="314.8" width="49" height="6.2" fill="#eceae6" opacity="0.85"/>
<text x="634" y="320" font-family="Liberation Sans" font-size="6" fill="#6a7a8a" textLength="34" lengthAdjust="spacingAndGlyphs">Report a map error</text>
<text x="299" y="331" font-family="Liberation Sans" font-size="8" fill="#fff" textLength="25" lengthAdjust="spacingAndGlyphs">Google</text>
<text x="408" y="608" font-family="Liberation Sans" font-size="8" fill="#fff" textLength="25" lengthAdjust="spacingAndGlyphs">Google</text>
</g></svg>
<!-- top line -->
<div class="a" style="left:0;top:0;width:1918px;height:1px;background:#c4c4c4"></div>
<div class="a" style="left:0;top:1px;width:1918px;height:1px;background:#f0f0f8"></div>
<!-- tabs -->
<div class="a" style="left:3px;top:5px;width:70px;height:25px;background:#f0f0f0;border:1px solid #d9d9d9;border-bottom:none"></div>
<div class="a" style="left:72px;top:5px;width:71px;height:25px;background:#f0f0f0;border:1px solid #d9d9d9;border-bottom:none"></div>
<div class="a" style="left:142px;top:5px;width:71px;height:25px;background:#f0f0f0;border:1px solid #d9d9d9;border-bottom:none"></div>
<div class="a" style="left:212px;top:5px;width:92px;height:25px;background:#f0f0f0;border:1px solid #d9d9d9;border-bottom:none"></div>
<div class="a" style="left:378px;top:5px;width:104px;height:25px;background:#f0f0f0;border:1px solid #d9d9d9;border-bottom:none"></div>
<!-- ribbon panel -->
<div class="a" style="left:1px;top:29px;width:1343px;height:102px;background:#fff;border:1px solid #dadada"></div>
<div class="a" style="left:1344px;top:30px;width:1px;height:102px;background:#f0f0f0"></div>
<div class="a" style="left:2px;top:131px;width:1343px;height:1px;background:#f0f0f0"></div>
<div class="a" style="left:303px;top:3px;width:76px;height:27px;background:#fff;border:1px solid #d9d9d9;border-bottom:none"></div>
<!-- group separators -->
<div class="a" style="left:253px;top:33px;width:1px;height:95px;background:#a8a8a8"></div>
<div class="a" style="left:384px;top:33px;width:1px;height:95px;background:#a8a8a8"></div>
<div class="a" style="left:521px;top:33px;width:1px;height:95px;background:#a8a8a8"></div>
<div class="a" style="left:668px;top:33px;width:1px;height:95px;background:#a8a8a8"></div>
<div class="a" style="left:874px;top:33px;width:1px;height:95px;background:#a8a8a8"></div>
<div class="a" style="left:1003px;top:33px;width:1px;height:95px;background:#a8a8a8"></div>
<!-- toolbar band -->
<div class="a" style="left:0;top:132px;width:1918px;height:1px;background:#f0f0fa"></div>
<div class="a" style="left:0;top:133px;width:1918px;height:1px;background:#c8c8cc"></div>
<div class="a" style="left:0;top:134px;width:1918px;height:1px;background:#a0a0a0"></div>
<div class="a" style="left:0;top:135px;width:1918px;height:34px;background:#d7d7e2"></div>
<div class="a" style="left:0;top:169px;width:1918px;height:1px;background:#fafafa"></div>
<div class="a" style="left:0;top:170px;width:1918px;height:1px;background:#d4d4d4"></div>
<!-- toolbar group box -->
<div class="a" style="left:0;top:135px;width:1496px;height:34px;border-right:1px solid #a0a0a0;border-bottom:1px solid #a0a0a0"></div>
<div class="a" style="left:0;top:135px;width:2px;height:33px;background:#fff"></div>
<div class="a" style="left:0;top:135px;width:1495px;height:1px;background:#fff"></div>
<div class="a" style="left:2px;top:139px;width:1px;height:26px;background:#a0a0a0"></div>
<div class="a" style="left:180px;top:139px;width:1px;height:26px;background:#a0a0a0"></div><div class="a" style="left:181px;top:139px;width:1px;height:26px;background:#fff"></div>
<div class="a" style="left:247px;top:139px;width:1px;height:26px;background:#a0a0a0"></div><div class="a" style="left:248px;top:139px;width:1px;height:26px;background:#fff"></div>
<div class="a" style="left:458px;top:139px;width:1px;height:26px;background:#a0a0a0"></div><div class="a" style="left:459px;top:139px;width:1px;height:26px;background:#fff"></div>
<div class="a" style="left:606px;top:139px;width:1px;height:26px;background:#a0a0a0"></div><div class="a" style="left:607px;top:139px;width:1px;height:26px;background:#fff"></div>
<div class="a" style="left:830px;top:139px;width:1px;height:26px;background:#a0a0a0"></div><div class="a" style="left:831px;top:139px;width:1px;height:26px;background:#fff"></div>
<div class="a" style="left:983px;top:139px;width:1px;height:26px;background:#a0a0a0"></div><div class="a" style="left:984px;top:139px;width:1px;height:26px;background:#fff"></div>
<div class="a" style="left:1058px;top:139px;width:1px;height:26px;background:#a0a0a0"></div><div class="a" style="left:1059px;top:139px;width:1px;height:26px;background:#fff"></div>
<div class="a" style="left:1126px;top:139px;width:1px;height:26px;background:#a0a0a0"></div><div class="a" style="left:1127px;top:139px;width:1px;height:26px;background:#fff"></div>
<div class="a" style="left:1163px;top:139px;width:1px;height:26px;background:#a0a0a0"></div><div class="a" style="left:1164px;top:139px;width:1px;height:26px;background:#fff"></div>
<div class="a" style="left:1324px;top:139px;width:1px;height:26px;background:#a0a0a0"></div><div class="a" style="left:1325px;top:139px;width:1px;height:26px;background:#fff"></div>
<div class="a" style="left:1360px;top:139px;width:1px;height:26px;background:#a0a0a0"></div><div class="a" style="left:1361px;top:139px;width:1px;height:26px;background:#fff"></div>
<div class="a" style="left:1398px;top:139px;width:1px;height:26px;background:#a0a0a0"></div><div class="a" style="left:1399px;top:139px;width:1px;height:26px;background:#fff"></div>
<!-- combos -->
<div class="a" style="left:251px;top:139px;width:204px;height:26px;background:#fff;border:1px solid #7a7a7a"></div>
<div class="a" style="left:461px;top:139px;width:143px;height:26px;background:#fff;border:1px solid #7a7a7a"></div>
<div class="a" style="left:609px;top:139px;width:218px;height:26px;background:#fff;border:1px solid #7a7a7a"></div>
<div class="a" style="left:833px;top:139px;width:147px;height:26px;background:#fff;border:1px solid #7a7a7a"></div>
<div class="a" style="left:986px;top:140px;width:69px;height:24px;background:#fff;border:1px solid #7a7a7a"></div>
<!-- left strip -->
<div class="a" style="left:0;top:171px;width:67px;height:755px;background:#d7d7e2"></div>
<div class="a" style="left:0;top:170px;width:31px;height:460px;background:#d7d7e2;border-right:1px solid #a0a0a0;border-bottom:1px solid #a0a0a0"></div>
<div class="a" style="left:31px;top:170px;width:1px;height:490px;background:#fff"></div>
<div class="a" style="left:32px;top:170px;width:34px;height:490px;background:#d7d7e2;border-right:1px solid #a0a0a0;border-bottom:1px solid #a0a0a0"></div>
<div class="a" style="left:0;top:174px;width:28px;height:1px;background:#fff"></div>
<div class="a" style="left:0;top:175px;width:28px;height:1px;background:#a0a0a0"></div>
<div class="a" style="left:34px;top:174px;width:29px;height:1px;background:#fff"></div>
<div class="a" style="left:34px;top:175px;width:29px;height:1px;background:#a0a0a0"></div>
<!-- canvas borders -->
<div class="a" style="left:1886px;top:171px;width:2px;height:731px;background:#e6e6e6"></div>
<div class="a" style="left:67px;top:901px;width:1821px;height:1px;background:#d8d8d8"></div>
<!-- right strip -->
<div class="a" style="left:1888px;top:171px;width:30px;height:755px;background:#d7d7e2"></div>
<div class="a" style="left:1888px;top:171px;width:2px;height:755px;background:#fff"></div>
<div class="a" style="left:1890px;top:171px;width:28px;height:429px;background:#d7d7e2;border-bottom:1px solid #a0a0a0"></div>
<div class="a" style="left:1892px;top:174px;width:26px;height:1px;background:#fff"></div>
<div class="a" style="left:1892px;top:175px;width:26px;height:1px;background:#a0a0a0"></div>
<!-- tab strip -->
<div class="a" style="left:67px;top:902px;width:1821px;height:24px;background:#f0f0fa"></div>
<div class="a" style="left:68px;top:903px;width:46px;height:20px;background:#cce6fb;border:1px solid #99c8f0"></div>
<div class="a" style="left:114px;top:901px;width:61px;height:24px;background:#fff;border:1px solid #dcdcdc;border-top:none"></div>
<!-- status bar -->
<div class="a" style="left:0;top:926px;width:1918px;height:22px;background:#f0f0f0"></div>
<div class="a" style="left:0;top:926px;width:1918px;height:1px;background:#fff"></div>
<div class="a" style="left:1px;top:928px;width:1px;height:20px;background:#b4b4b4"></div>
<div class="a" style="left:4px;top:928px;width:1px;height:20px;background:#a0a0a0"></div>
<div class="a" style="left:4px;top:947px;width:1016px;height:1px;background:#a0a0a0"></div>
<div class="a" style="left:217px;top:928px;width:1px;height:20px;background:#a0a0a0"></div>
<div class="a" style="left:289px;top:928px;width:1px;height:20px;background:#a0a0a0"></div>
<div class="a" style="left:361px;top:928px;width:1px;height:20px;background:#a0a0a0"></div>
<div class="a" style="left:433px;top:928px;width:1px;height:20px;background:#a0a0a0"></div>
<div class="a" style="left:506px;top:928px;width:1px;height:20px;background:#a0a0a0"></div>
<div class="a" style="left:578px;top:928px;width:1px;height:20px;background:#a0a0a0"></div>
<div class="a" style="left:649px;top:928px;width:1px;height:20px;background:#a0a0a0"></div>
<div class="a" style="left:731px;top:928px;width:1px;height:20px;background:#a0a0a0"></div>
<div class="a" style="left:804px;top:928px;width:1px;height:20px;background:#a0a0a0"></div>
<div class="a" style="left:876px;top:928px;width:1px;height:20px;background:#a0a0a0"></div>
<div class="a" style="left:948px;top:928px;width:1px;height:20px;background:#a0a0a0"></div>
<div class="a" style="left:1020px;top:928px;width:1px;height:20px;background:#a0a0a0"></div>

<svg style="left:29.6px;top:44.4px;" width="31" height="27" viewBox="0 0 31 27"><g transform="translate(0.7,10)"><text x="15" y="-2.3" font-family="Liberation Sans" font-size="9.2" fill="#2a4058" text-anchor="middle" textLength="20" lengthAdjust="spacingAndGlyphs">ECW</text><path d="M4.8,0 H24.8 L29.4,15.3 H0 Z" fill="#f58442"/><path d="M3.6,4.4 Q7,1.4 10.1,1.6 V15.3 H0 Z" fill="#fee79e"/><path d="M10.1,0 H19.6 Q20.5,3.6 25.9,3.5 L27.0,7.2 Q21,8.2 17,5.8 Q13.5,1.5 10.1,1.2 Z" fill="#fee79e"/><path d="M3.6,4.4 Q7,1.4 10.1,1.6 M10.1,0 V15.3 M10.1,1.2 Q13.5,1.5 17,5.8 Q21,8.2 27.0,7.2 M19.6,0 Q20.5,3.6 25.9,3.5" fill="none" stroke="#243a52" stroke-width="1.2"/><path d="M4.8,0.6 H24.8 L29.4,15.3 H0 Z" fill="none" stroke="#243a52" stroke-width="1.3" stroke-linejoin="round"/></g></svg>
<svg style="left:29.6px;top:75.7px;opacity:0.28;-webkit-mask-image:linear-gradient(to bottom,#000 0%,rgba(0,0,0,0) 100%)" width="31" height="9" viewBox="0 0 31 9"><g transform="matrix(1,0,0,-1,0,15.3)"><g transform="translate(0.7,0)"><path d="M4.8,0 H24.8 L29.4,15.3 H0 Z" fill="#f58442"/><path d="M3.6,4.4 Q7,1.4 10.1,1.6 V15.3 H0 Z" fill="#fee79e"/><path d="M10.1,0 H19.6 Q20.5,3.6 25.9,3.5 L27.0,7.2 Q21,8.2 17,5.8 Q13.5,1.5 10.1,1.2 Z" fill="#fee79e"/><path d="M3.6,4.4 Q7,1.4 10.1,1.6 M10.1,0 V15.3 M10.1,1.2 Q13.5,1.5 17,5.8 Q21,8.2 27.0,7.2 M19.6,0 Q20.5,3.6 25.9,3.5" fill="none" stroke="#243a52" stroke-width="1.2"/><path d="M4.8,0.6 H24.8 L29.4,15.3 H0 Z" fill="none" stroke="#243a52" stroke-width="1.3" stroke-linejoin="round"/></g></g></svg>
<svg style="left:117.39999999999999px;top:44.2px;" width="31" height="27" viewBox="0 0 31 27"><g transform="translate(0.7,10)"><text x="15" y="-2.3" font-family="Liberation Sans" font-size="9.2" fill="#2a4058" text-anchor="middle" textLength="26" lengthAdjust="spacingAndGlyphs">GTIFF</text><path d="M4.8,0 H24.8 L29.4,15.3 H0 Z" fill="#f58442"/><path d="M3.6,4.4 Q7,1.4 10.1,1.6 V15.3 H0 Z" fill="#fee79e"/><path d="M10.1,0 H19.6 Q20.5,3.6 25.9,3.5 L27.0,7.2 Q21,8.2 17,5.8 Q13.5,1.5 10.1,1.2 Z" fill="#fee79e"/><path d="M3.6,4.4 Q7,1.4 10.1,1.6 M10.1,0 V15.3 M10.1,1.2 Q13.5,1.5 17,5.8 Q21,8.2 27.0,7.2 M19.6,0 Q20.5,3.6 25.9,3.5" fill="none" stroke="#243a52" stroke-width="1.2"/><path d="M4.8,0.6 H24.8 L29.4,15.3 H0 Z" fill="none" stroke="#243a52" stroke-width="1.3" stroke-linejoin="round"/></g></svg>
<svg style="left:117.39999999999999px;top:75.7px;opacity:0.28;-webkit-mask-image:linear-gradient(to bottom,#000 0%,rgba(0,0,0,0) 100%)" width="31" height="9" viewBox="0 0 31 9"><g transform="matrix(1,0,0,-1,0,15.3)"><g transform="translate(0.7,0)"><path d="M4.8,0 H24.8 L29.4,15.3 H0 Z" fill="#f58442"/><path d="M3.6,4.4 Q7,1.4 10.1,1.6 V15.3 H0 Z" fill="#fee79e"/><path d="M10.1,0 H19.6 Q20.5,3.6 25.9,3.5 L27.0,7.2 Q21,8.2 17,5.8 Q13.5,1.5 10.1,1.2 Z" fill="#fee79e"/><path d="M3.6,4.4 Q7,1.4 10.1,1.6 M10.1,0 V15.3 M10.1,1.2 Q13.5,1.5 17,5.8 Q21,8.2 27.0,7.2 M19.6,0 Q20.5,3.6 25.9,3.5" fill="none" stroke="#243a52" stroke-width="1.2"/><path d="M4.8,0.6 H24.8 L29.4,15.3 H0 Z" fill="none" stroke="#243a52" stroke-width="1.3" stroke-linejoin="round"/></g></g></svg>
<svg style="left:201.5px;top:44.3px;" width="31" height="27" viewBox="0 0 31 27"><g transform="translate(0.7,10)"><path d="M4.8,0 H24.8 L29.4,15.3 H0 Z" fill="#f58442"/><path d="M3.6,4.4 Q7,1.4 10.1,1.6 V15.3 H0 Z" fill="#fee79e"/><path d="M10.1,0 H19.6 Q20.5,3.6 25.9,3.5 L27.0,7.2 Q21,8.2 17,5.8 Q13.5,1.5 10.1,1.2 Z" fill="#fee79e"/><path d="M3.6,4.4 Q7,1.4 10.1,1.6 M10.1,0 V15.3 M10.1,1.2 Q13.5,1.5 17,5.8 Q21,8.2 27.0,7.2 M19.6,0 Q20.5,3.6 25.9,3.5" fill="none" stroke="#243a52" stroke-width="1.2"/><path d="M4.8,0.6 H24.8 L29.4,15.3 H0 Z" fill="none" stroke="#243a52" stroke-width="1.3" stroke-linejoin="round"/></g></svg>
<svg style="left:201.5px;top:75.7px;opacity:0.28;-webkit-mask-image:linear-gradient(to bottom,#000 0%,rgba(0,0,0,0) 100%)" width="31" height="9" viewBox="0 0 31 9"><g transform="matrix(1,0,0,-1,0,15.3)"><g transform="translate(0.7,0)"><path d="M4.8,0 H24.8 L29.4,15.3 H0 Z" fill="#f58442"/><path d="M3.6,4.4 Q7,1.4 10.1,1.6 V15.3 H0 Z" fill="#fee79e"/><path d="M10.1,0 H19.6 Q20.5,3.6 25.9,3.5 L27.0,7.2 Q21,8.2 17,5.8 Q13.5,1.5 10.1,1.2 Z" fill="#fee79e"/><path d="M3.6,4.4 Q7,1.4 10.1,1.6 M10.1,0 V15.3 M10.1,1.2 Q13.5,1.5 17,5.8 Q21,8.2 27.0,7.2 M19.6,0 Q20.5,3.6 25.9,3.5" fill="none" stroke="#243a52" stroke-width="1.2"/><path d="M4.8,0.6 H24.8 L29.4,15.3 H0 Z" fill="none" stroke="#243a52" stroke-width="1.3" stroke-linejoin="round"/></g></g></svg>
<svg style="left:81.5px;top:70.8px;" width="7" height="7" viewBox="0 0 7 7"><rect x="0" y="0" width="6.5" height="1.4" fill="#111"/><path d="M0,1.2 H6.5 L3.25,6.2 Z" fill="#111"/></svg>
<svg style="left:169.7px;top:70.8px;" width="7" height="7" viewBox="0 0 7 7"><rect x="0" y="0" width="6.5" height="1.4" fill="#111"/><path d="M0,1.2 H6.5 L3.25,6.2 Z" fill="#111"/></svg>
<svg style="left:266px;top:38px;" width="40" height="36" viewBox="0 0 40 36"><rect x="6.3" y="4.2" width="29.1" height="22.8" rx="3" fill="#fff"/><path d="M6.3,27 V7 Q6.3,4.2 9,4.2 H29.5 V10.5 H35.4 Z" fill="#fee79e"/><path d="M29,4.2 L35.4,10.5 H29 Z" fill="#0b2b4c"/><path d="M9.3,4.2 H29.8 L35.4,9.8 V24 Q35.4,27 32.4,27 H9.3 Q6.3,27 6.3,24 V7.2 Q6.3,4.2 9.3,4.2 Z" fill="none" stroke="#0b2b4c" stroke-width="2.2" stroke-linejoin="round"/><path d="M15.5,18.3 L27.3,21.2 L24,24.2 L30.3,30.5 L27,33.8 L20.7,27.5 L17.6,30.6 Z" fill="#fee79e" stroke="#0b2b4c" stroke-width="1.6" stroke-linejoin="round"/></svg>
<svg style="left:266px;top:66.5px;opacity:0.25;-webkit-mask-image:linear-gradient(to bottom,#000 0%,rgba(0,0,0,0) 100%)" width="40" height="10" viewBox="0 0 40 10"><g transform="matrix(1,0,0,-1,0,28.5)"><rect x="6.3" y="4.2" width="29.1" height="22.8" rx="3" fill="#fff"/><path d="M6.3,27 V7 Q6.3,4.2 9,4.2 H29.5 V10.5 H35.4 Z" fill="#fee79e"/><path d="M29,4.2 L35.4,10.5 H29 Z" fill="#0b2b4c"/><path d="M9.3,4.2 H29.8 L35.4,9.8 V24 Q35.4,27 32.4,27 H9.3 Q6.3,27 6.3,24 V7.2 Q6.3,4.2 9.3,4.2 Z" fill="none" stroke="#0b2b4c" stroke-width="2.2" stroke-linejoin="round"/><path d="M15.5,18.3 L27.3,21.2 L24,24.2 L30.3,30.5 L27,33.8 L20.7,27.5 L17.6,30.6 Z" fill="#fee79e" stroke="#0b2b4c" stroke-width="1.6" stroke-linejoin="round"/></g></svg>
<svg style="left:330px;top:40px;" width="40" height="32" viewBox="0 0 40 32"><rect x="5.8" y="6.8" width="28.4" height="21.6" fill="#fff" stroke="#f58442" stroke-width="1.6"/><circle cx="26.3" cy="14.7" r="5.6" fill="#fff" stroke="#2a4058" stroke-width="1.2"/><path d="M22.3,18.7 A5.6,5.6 0 0 1 30.3,10.7 Z" fill="#fee79e"/><circle cx="26.3" cy="14.7" r="5.6" fill="none" stroke="#2a4058" stroke-width="1.2"/><path d="M6.6,7.4 L17.2,9.6 L14.6,12.2 L20,17.6 L17.4,20.2 L12,14.8 L9.2,17.6 Z" fill="#fee79e" stroke="#0b2b4c" stroke-width="1.3" stroke-linejoin="round"/></svg>
<svg style="left:330px;top:71.2px;opacity:0.3;-webkit-mask-image:linear-gradient(to bottom,#000 0%,rgba(0,0,0,0) 100%)" width="40" height="10" viewBox="0 0 40 10"><g transform="matrix(1,0,0,-1,0,29.200000000000003)"><rect x="5.8" y="6.8" width="28.4" height="21.6" fill="#fff" stroke="#f58442" stroke-width="1.6"/><circle cx="26.3" cy="14.7" r="5.6" fill="#fff" stroke="#2a4058" stroke-width="1.2"/><path d="M22.3,18.7 A5.6,5.6 0 0 1 30.3,10.7 Z" fill="#fee79e"/><circle cx="26.3" cy="14.7" r="5.6" fill="none" stroke="#2a4058" stroke-width="1.2"/><path d="M6.6,7.4 L17.2,9.6 L14.6,12.2 L20,17.6 L17.4,20.2 L12,14.8 L9.2,17.6 Z" fill="#fee79e" stroke="#0b2b4c" stroke-width="1.3" stroke-linejoin="round"/></g></svg>
<svg style="left:402.7px;top:38px;" width="40" height="36" viewBox="0 0 40 36"><rect x="6.3" y="4.2" width="29.1" height="22.8" rx="3" fill="#fff"/><path d="M6.3,27 V7 Q6.3,4.2 9,4.2 H29.5 V10.5 H35.4 Z" fill="#fee79e"/><path d="M29,4.2 L35.4,10.5 H29 Z" fill="#0b2b4c"/><path d="M9.3,4.2 H29.8 L35.4,9.8 V24 Q35.4,27 32.4,27 H9.3 Q6.3,27 6.3,24 V7.2 Q6.3,4.2 9.3,4.2 Z" fill="none" stroke="#0b2b4c" stroke-width="2.2" stroke-linejoin="round"/><path d="M15.5,18.3 L27.3,21.2 L24,24.2 L30.3,30.5 L27,33.8 L20.7,27.5 L17.6,30.6 Z" fill="#fee79e" stroke="#0b2b4c" stroke-width="1.6" stroke-linejoin="round"/></svg>
<svg style="left:402.7px;top:66.5px;opacity:0.25;-webkit-mask-image:linear-gradient(to bottom,#000 0%,rgba(0,0,0,0) 100%)" width="40" height="10" viewBox="0 0 40 10"><g transform="matrix(1,0,0,-1,0,28.5)"><rect x="6.3" y="4.2" width="29.1" height="22.8" rx="3" fill="#fff"/><path d="M6.3,27 V7 Q6.3,4.2 9,4.2 H29.5 V10.5 H35.4 Z" fill="#fee79e"/><path d="M29,4.2 L35.4,10.5 H29 Z" fill="#0b2b4c"/><path d="M9.3,4.2 H29.8 L35.4,9.8 V24 Q35.4,27 32.4,27 H9.3 Q6.3,27 6.3,24 V7.2 Q6.3,4.2 9.3,4.2 Z" fill="none" stroke="#0b2b4c" stroke-width="2.2" stroke-linejoin="round"/><path d="M15.5,18.3 L27.3,21.2 L24,24.2 L30.3,30.5 L27,33.8 L20.7,27.5 L17.6,30.6 Z" fill="#fee79e" stroke="#0b2b4c" stroke-width="1.6" stroke-linejoin="round"/></g></svg>
<svg style="left:466.7px;top:40px;" width="40" height="32" viewBox="0 0 40 32"><rect x="5.8" y="6.8" width="28.4" height="21.6" fill="#fff" stroke="#f58442" stroke-width="1.6"/><circle cx="26.3" cy="14.7" r="5.6" fill="#fff" stroke="#2a4058" stroke-width="1.2"/><path d="M22.3,18.7 A5.6,5.6 0 0 1 30.3,10.7 Z" fill="#fee79e"/><circle cx="26.3" cy="14.7" r="5.6" fill="none" stroke="#2a4058" stroke-width="1.2"/><path d="M6.6,7.4 L17.2,9.6 L14.6,12.2 L20,17.6 L17.4,20.2 L12,14.8 L9.2,17.6 Z" fill="#fee79e" stroke="#0b2b4c" stroke-width="1.3" stroke-linejoin="round"/></svg>
<svg style="left:466.7px;top:71.2px;opacity:0.3;-webkit-mask-image:linear-gradient(to bottom,#000 0%,rgba(0,0,0,0) 100%)" width="40" height="10" viewBox="0 0 40 10"><g transform="matrix(1,0,0,-1,0,29.200000000000003)"><rect x="5.8" y="6.8" width="28.4" height="21.6" fill="#fff" stroke="#f58442" stroke-width="1.6"/><circle cx="26.3" cy="14.7" r="5.6" fill="#fff" stroke="#2a4058" stroke-width="1.2"/><path d="M22.3,18.7 A5.6,5.6 0 0 1 30.3,10.7 Z" fill="#fee79e"/><circle cx="26.3" cy="14.7" r="5.6" fill="none" stroke="#2a4058" stroke-width="1.2"/><path d="M6.6,7.4 L17.2,9.6 L14.6,12.2 L20,17.6 L17.4,20.2 L12,14.8 L9.2,17.6 Z" fill="#fee79e" stroke="#0b2b4c" stroke-width="1.3" stroke-linejoin="round"/></g></svg>
<svg style="left:545px;top:38px;" width="40" height="36" viewBox="0 0 40 36"><rect x="6" y="5.5" width="22.6" height="28.1" rx="3" fill="#fff"/><path d="M6,33 V8 Q6,5.5 9,5.5 H20.5 L6,33 Z" fill="#fee79e"/><path d="M19.5,6 H24 V14 H20 Z" fill="#0b2b4c"/><rect x="6" y="5.5" width="22.6" height="28.1" rx="3" fill="none" stroke="#0b2b4c" stroke-width="2.2"/><text x="16.5" y="29" font-family="Liberation Sans" font-size="11" fill="#111" text-anchor="middle" textLength="18" lengthAdjust="spacingAndGlyphs">dwg</text><path d="M18,4.8 Q28.5,3.5 30.5,14.6 L33.8,14.6 L27.6,23 L21,14.6 L24.6,14.6 Q24,9.5 18,9.6 Z" fill="#f58442" stroke="#0b2b4c" stroke-width="1.4" stroke-linejoin="round"/></svg>
<svg style="left:545px;top:73.6px;opacity:0.3;-webkit-mask-image:linear-gradient(to bottom,#000 0%,rgba(0,0,0,0) 100%)" width="40" height="12" viewBox="0 0 40 12"><g transform="matrix(1,0,0,-1,0,34.599999999999994)"><rect x="6" y="5.5" width="22.6" height="28.1" rx="3" fill="#fff"/><path d="M6,33 V8 Q6,5.5 9,5.5 H20.5 L6,33 Z" fill="#fee79e"/><path d="M19.5,6 H24 V14 H20 Z" fill="#0b2b4c"/><rect x="6" y="5.5" width="22.6" height="28.1" rx="3" fill="none" stroke="#0b2b4c" stroke-width="2.2"/><text x="16.5" y="29" font-family="Liberation Sans" font-size="11" fill="#111" text-anchor="middle" textLength="18" lengthAdjust="spacingAndGlyphs">dwg</text><path d="M18,4.8 Q28.5,3.5 30.5,14.6 L33.8,14.6 L27.6,23 L21,14.6 L24.6,14.6 Q24,9.5 18,9.6 Z" fill="#f58442" stroke="#0b2b4c" stroke-width="1.4" stroke-linejoin="round"/></g></svg>
<svg style="left:612px;top:38px;" width="44" height="38" viewBox="0 0 44 38"><path d="M13.2,10 L19,4 H29 Q31,4 31,6 V18 H13.2 Z" fill="#fff"/><path d="M31,6 V18 H15 Z" fill="#fee79e"/><path d="M13.2,18 V10 L19,4 H29 Q31,4 31,6 V18" fill="none" stroke="#0b2b4c" stroke-width="2.2" stroke-linejoin="round"/><path d="M13.6,10.5 H19.5 V4.5" fill="none" stroke="#0b2b4c" stroke-width="2"/><rect x="6.1" y="15.3" width="31.9" height="16.9" rx="4" fill="#0b2b4c"/><path d="M12.9,26.9 H31.1 V33 Q31.1,35.9 28.2,35.9 H15.8 Q12.9,35.9 12.9,33 Z" fill="#fff" stroke="#0b2b4c" stroke-width="2"/><rect x="17" y="28.3" width="10.5" height="1.2" fill="#f58442"/><rect x="17" y="31.1" width="10.5" height="1.2" fill="#f58442"/></svg>
<svg style="left:612px;top:74.9px;opacity:0.35;-webkit-mask-image:linear-gradient(to bottom,#000 0%,rgba(0,0,0,0) 100%)" width="44" height="12" viewBox="0 0 44 12"><g transform="matrix(1,0,0,-1,0,35.900000000000006)"><path d="M13.2,10 L19,4 H29 Q31,4 31,6 V18 H13.2 Z" fill="#fff"/><path d="M31,6 V18 H15 Z" fill="#fee79e"/><path d="M13.2,18 V10 L19,4 H29 Q31,4 31,6 V18" fill="none" stroke="#0b2b4c" stroke-width="2.2" stroke-linejoin="round"/><path d="M13.6,10.5 H19.5 V4.5" fill="none" stroke="#0b2b4c" stroke-width="2"/><rect x="6.1" y="15.3" width="31.9" height="16.9" rx="4" fill="#0b2b4c"/><path d="M12.9,26.9 H31.1 V33 Q31.1,35.9 28.2,35.9 H15.8 Q12.9,35.9 12.9,33 Z" fill="#fff" stroke="#0b2b4c" stroke-width="2"/><rect x="17" y="28.3" width="10.5" height="1.2" fill="#f58442"/><rect x="17" y="31.1" width="10.5" height="1.2" fill="#f58442"/></g></svg>
<svg style="left:690px;top:38px;" width="40" height="36" viewBox="0 0 40 36"><path d="M6,6 H25.5 L32,12.6 V23 H6 Z" fill="#fee79e" stroke="#0b2b4c" stroke-width="2"/><rect x="4.2" y="4.2" width="3.6" height="3.6" fill="#fff4d6" stroke="#f58442" stroke-width="1.6"/><rect x="23.7" y="4.2" width="3.6" height="3.6" fill="#fff4d6" stroke="#f58442" stroke-width="1.6"/><rect x="30.2" y="10.799999999999999" width="3.6" height="3.6" fill="#fff4d6" stroke="#f58442" stroke-width="1.6"/><rect x="30.2" y="21.2" width="3.6" height="3.6" fill="#fff4d6" stroke="#f58442" stroke-width="1.6"/><rect x="4.2" y="21.2" width="3.6" height="3.6" fill="#fff4d6" stroke="#f58442" stroke-width="1.6"/><g transform="translate(3.4,0)"><path d="M0.8,28.3 V34 H28.8 V28.3" fill="none" stroke="#1c3a57" stroke-width="1.6"/><path d="M5,30.5 V34" stroke="#1c3a57" stroke-width="1.3"/><path d="M9.6,28.3 V34" stroke="#1c3a57" stroke-width="1.3"/><path d="M14.2,30.5 V34" stroke="#1c3a57" stroke-width="1.3"/><path d="M18.8,28.3 V34" stroke="#1c3a57" stroke-width="1.3"/><path d="M23.4,30.5 V34" stroke="#1c3a57" stroke-width="1.3"/></g></svg>
<svg style="left:690px;top:73.2px;opacity:0.3;-webkit-mask-image:linear-gradient(to bottom,#000 0%,rgba(0,0,0,0) 100%)" width="40" height="9" viewBox="0 0 40 9"><g transform="matrix(1,0,0,-1,0,34.2)"><path d="M6,6 H25.5 L32,12.6 V23 H6 Z" fill="#fee79e" stroke="#0b2b4c" stroke-width="2"/><rect x="4.2" y="4.2" width="3.6" height="3.6" fill="#fff4d6" stroke="#f58442" stroke-width="1.6"/><rect x="23.7" y="4.2" width="3.6" height="3.6" fill="#fff4d6" stroke="#f58442" stroke-width="1.6"/><rect x="30.2" y="10.799999999999999" width="3.6" height="3.6" fill="#fff4d6" stroke="#f58442" stroke-width="1.6"/><rect x="30.2" y="21.2" width="3.6" height="3.6" fill="#fff4d6" stroke="#f58442" stroke-width="1.6"/><rect x="4.2" y="21.2" width="3.6" height="3.6" fill="#fff4d6" stroke="#f58442" stroke-width="1.6"/><g transform="translate(3.4,0)"><path d="M0.8,28.3 V34 H28.8 V28.3" fill="none" stroke="#1c3a57" stroke-width="1.6"/><path d="M5,30.5 V34" stroke="#1c3a57" stroke-width="1.3"/><path d="M9.6,28.3 V34" stroke="#1c3a57" stroke-width="1.3"/><path d="M14.2,30.5 V34" stroke="#1c3a57" stroke-width="1.3"/><path d="M18.8,28.3 V34" stroke="#1c3a57" stroke-width="1.3"/><path d="M23.4,30.5 V34" stroke="#1c3a57" stroke-width="1.3"/></g></g></svg>
<svg style="left:759.5px;top:38px;" width="32" height="36" viewBox="0 0 32 36"><path d="M3,17 H28.5" stroke="#0b2b4c" stroke-width="2"/><rect x="0.8" y="15.3" width="3.4" height="3.4" fill="#fff4d6" stroke="#f58442" stroke-width="1.6"/><rect x="26.900000000000002" y="15.3" width="3.4" height="3.4" fill="#fff4d6" stroke="#f58442" stroke-width="1.6"/><g transform="translate(0,0)"><path d="M0.8,28.3 V34 H28.8 V28.3" fill="none" stroke="#1c3a57" stroke-width="1.6"/><path d="M5,30.5 V34" stroke="#1c3a57" stroke-width="1.3"/><path d="M9.6,28.3 V34" stroke="#1c3a57" stroke-width="1.3"/><path d="M14.2,30.5 V34" stroke="#1c3a57" stroke-width="1.3"/><path d="M18.8,28.3 V34" stroke="#1c3a57" stroke-width="1.3"/><path d="M23.4,30.5 V34" stroke="#1c3a57" stroke-width="1.3"/></g></svg>
<svg style="left:759.5px;top:73.2px;opacity:0.3;-webkit-mask-image:linear-gradient(to bottom,#000 0%,rgba(0,0,0,0) 100%)" width="32" height="9" viewBox="0 0 32 9"><g transform="matrix(1,0,0,-1,0,34.2)"><path d="M3,17 H28.5" stroke="#0b2b4c" stroke-width="2"/><rect x="0.8" y="15.3" width="3.4" height="3.4" fill="#fff4d6" stroke="#f58442" stroke-width="1.6"/><rect x="26.900000000000002" y="15.3" width="3.4" height="3.4" fill="#fff4d6" stroke="#f58442" stroke-width="1.6"/><g transform="translate(0,0)"><path d="M0.8,28.3 V34 H28.8 V28.3" fill="none" stroke="#1c3a57" stroke-width="1.6"/><path d="M5,30.5 V34" stroke="#1c3a57" stroke-width="1.3"/><path d="M9.6,28.3 V34" stroke="#1c3a57" stroke-width="1.3"/><path d="M14.2,30.5 V34" stroke="#1c3a57" stroke-width="1.3"/><path d="M18.8,28.3 V34" stroke="#1c3a57" stroke-width="1.3"/><path d="M23.4,30.5 V34" stroke="#1c3a57" stroke-width="1.3"/></g></g></svg>
<svg style="left:818px;top:38px;" width="44" height="36" viewBox="0 0 44 36"><path d="M8,7.2 H34 V30.5 H18.8 V21.8 H8 Z" fill="#fee79e"/><path d="M9,20 Q16,15 22,18.5 Q26,22 34,20.5 V30.5 H18.8 V21.8 H9 Z" fill="#f58442"/><circle cx="27.5" cy="12.7" r="3.2" fill="#f58442"/><path d="M27.5,7.8 V8.6 M27.5,16.8 V17.6 M22.6,12.7 H23.4 M31.6,12.7 H32.4" stroke="#f58442" stroke-width="0.8"/><path d="M9,9 H17 Q19.5,10.5 17.5,13 Q14,14.5 12,13.5 Q10,14 9,13 Z" fill="#0b2b4c"/><path d="M8,7.2 H34 V30.5 H18.8 V21.8 H8 Z" fill="none" stroke="#0b2b4c" stroke-width="2.2"/><rect x="6.1" y="5.1" width="4.2" height="4.2" fill="#fff1c4" stroke="#f58442" stroke-width="1.8"/><rect x="31.9" y="5.1" width="4.2" height="4.2" fill="#fff1c4" stroke="#f58442" stroke-width="1.8"/><rect x="6.1" y="19.7" width="4.2" height="4.2" fill="#fff1c4" stroke="#f58442" stroke-width="1.8"/><rect x="16.7" y="28.4" width="4.2" height="4.2" fill="#fff1c4" stroke="#f58442" stroke-width="1.8"/><rect x="31.9" y="28.4" width="4.2" height="4.2" fill="#fff1c4" stroke="#f58442" stroke-width="1.8"/></svg>
<svg style="left:818px;top:71.6px;opacity:0.3;-webkit-mask-image:linear-gradient(to bottom,#000 0%,rgba(0,0,0,0) 100%)" width="44" height="10" viewBox="0 0 44 10"><g transform="matrix(1,0,0,-1,0,32.599999999999994)"><path d="M8,7.2 H34 V30.5 H18.8 V21.8 H8 Z" fill="#fee79e"/><path d="M9,20 Q16,15 22,18.5 Q26,22 34,20.5 V30.5 H18.8 V21.8 H9 Z" fill="#f58442"/><circle cx="27.5" cy="12.7" r="3.2" fill="#f58442"/><path d="M27.5,7.8 V8.6 M27.5,16.8 V17.6 M22.6,12.7 H23.4 M31.6,12.7 H32.4" stroke="#f58442" stroke-width="0.8"/><path d="M9,9 H17 Q19.5,10.5 17.5,13 Q14,14.5 12,13.5 Q10,14 9,13 Z" fill="#0b2b4c"/><path d="M8,7.2 H34 V30.5 H18.8 V21.8 H8 Z" fill="none" stroke="#0b2b4c" stroke-width="2.2"/><rect x="6.1" y="5.1" width="4.2" height="4.2" fill="#fff1c4" stroke="#f58442" stroke-width="1.8"/><rect x="31.9" y="5.1" width="4.2" height="4.2" fill="#fff1c4" stroke="#f58442" stroke-width="1.8"/><rect x="6.1" y="19.7" width="4.2" height="4.2" fill="#fff1c4" stroke="#f58442" stroke-width="1.8"/><rect x="16.7" y="28.4" width="4.2" height="4.2" fill="#fff1c4" stroke="#f58442" stroke-width="1.8"/><rect x="31.9" y="28.4" width="4.2" height="4.2" fill="#fff1c4" stroke="#f58442" stroke-width="1.8"/></g></svg>
<svg style="left:895px;top:45.5px;" width="31" height="27" viewBox="0 0 31 27"><rect x="1" y="1" width="28.2" height="20.5" rx="2" fill="#fff"/><path d="M1,21.5 V3 Q1,1 3,1 H28 Z" fill="#fee79e"/><path d="M10,5 L22,11.3 L10,17.7 Z" fill="#e8763e"/><rect x="1" y="1" width="28.2" height="20.5" rx="2" fill="none" stroke="#1c3a57" stroke-width="1.8"/><rect x="13" y="21.5" width="4.2" height="2.5" fill="#1c3a57"/><ellipse cx="15.1" cy="24.6" rx="7" ry="1.1" fill="#1c3a57"/></svg>
<svg style="left:895px;top:72.6px;opacity:0.25;-webkit-mask-image:linear-gradient(to bottom,#000 0%,rgba(0,0,0,0) 100%)" width="31" height="12" viewBox="0 0 31 12"><g transform="matrix(1,0,0,-1,0,26.099999999999994)"><rect x="1" y="1" width="28.2" height="20.5" rx="2" fill="#fff"/><path d="M1,21.5 V3 Q1,1 3,1 H28 Z" fill="#fee79e"/><path d="M10,5 L22,11.3 L10,17.7 Z" fill="#e8763e"/><rect x="1" y="1" width="28.2" height="20.5" rx="2" fill="none" stroke="#1c3a57" stroke-width="1.8"/><rect x="13" y="21.5" width="4.2" height="2.5" fill="#1c3a57"/><ellipse cx="15.1" cy="24.6" rx="7" ry="1.1" fill="#1c3a57"/></g></svg>
<svg style="left:957px;top:42.5px;" width="27" height="31" viewBox="0 0 27 31"><rect x="1" y="4" width="20.3" height="25.7" rx="2.5" fill="#fff" stroke="#1c3a57" stroke-width="1.8"/><path d="M7,1 H20 L25.1,6 V24 Q25.1,26.1 23,26.1 H7 Q5,26.1 5,24 V3 Q5,1 7,1 Z" fill="#fff"/><path d="M5,26 V3 Q5,1 7,1 H20 V16 Z" fill="#fee79e"/><path d="M20,1 L25.1,6 H20 Z" fill="#1c3a57"/><rect x="7.2" y="4" width="12.5" height="1" fill="#8a9aa5"/><rect x="7.2" y="6.4" width="12.5" height="1" fill="#8a9aa5"/><rect x="7.2" y="8.8" width="15" height="1" fill="#8a9aa5"/><rect x="7.2" y="11.2" width="15" height="1" fill="#8a9aa5"/><path d="M7,16.5 L14.6,13.6 L22.2,16.5 L14.6,19.3 Z" fill="#e8763e"/><path d="M10,18 Q14.6,21.5 19.2,18 V20.2 Q14.6,23 10,20.2 Z" fill="#e8763e"/><path d="M21.5,16.5 V22" stroke="#e8763e" stroke-width="0.8"/><path d="M7,1 H20 L25.1,6 V24 Q25.1,26.1 23,26.1 H7 Q5,26.1 5,24 V3 Q5,1 7,1 Z" fill="none" stroke="#1c3a57" stroke-width="1.8"/></svg>
<svg style="left:957px;top:73.7px;opacity:0.25;-webkit-mask-image:linear-gradient(to bottom,#000 0%,rgba(0,0,0,0) 100%)" width="27" height="12" viewBox="0 0 27 12"><g transform="matrix(1,0,0,-1,0,30.200000000000003)"><rect x="1" y="4" width="20.3" height="25.7" rx="2.5" fill="#fff" stroke="#1c3a57" stroke-width="1.8"/><path d="M7,1 H20 L25.1,6 V24 Q25.1,26.1 23,26.1 H7 Q5,26.1 5,24 V3 Q5,1 7,1 Z" fill="#fff"/><path d="M5,26 V3 Q5,1 7,1 H20 V16 Z" fill="#fee79e"/><path d="M20,1 L25.1,6 H20 Z" fill="#1c3a57"/><rect x="7.2" y="4" width="12.5" height="1" fill="#8a9aa5"/><rect x="7.2" y="6.4" width="12.5" height="1" fill="#8a9aa5"/><rect x="7.2" y="8.8" width="15" height="1" fill="#8a9aa5"/><rect x="7.2" y="11.2" width="15" height="1" fill="#8a9aa5"/><path d="M7,16.5 L14.6,13.6 L22.2,16.5 L14.6,19.3 Z" fill="#e8763e"/><path d="M10,18 Q14.6,21.5 19.2,18 V20.2 Q14.6,23 10,20.2 Z" fill="#e8763e"/><path d="M21.5,16.5 V22" stroke="#e8763e" stroke-width="0.8"/><path d="M7,1 H20 L25.1,6 V24 Q25.1,26.1 23,26.1 H7 Q5,26.1 5,24 V3 Q5,1 7,1 Z" fill="none" stroke="#1c3a57" stroke-width="1.8"/></g></svg>
<svg style="left:5px;top:136px;" width="30" height="32" viewBox="0 0 30 32"><path d="M6.2,27.5 V6.5 Q6.2,4.2 8.5,4.2 H15 V27.5 Z" fill="#fee79e"/><path d="M15,14.5 H24.5 V25 Q24.5,27.5 22,27.5 H7.5 Z" fill="#dde6f0"/><path d="M15,4.2 H17 L24.5,11.7 V14.5 H15 Z" fill="#0b2b4c"/><path d="M8.5,4.2 H17 L24.5,11.7 V25 Q24.5,27.5 22,27.5 H8.5 Q6.2,27.5 6.2,25 V6.5 Q6.2,4.2 8.5,4.2 Z" fill="none" stroke="#0b2b4c" stroke-width="1.9"/></svg>
<svg style="left:36px;top:136px;" width="30" height="32" viewBox="0 0 30 32"><g transform="translate(-31,0)"><path d="M38.5,6.2 H50.5 L56.7,12.4 V24.5 Q56.7,26.7 54.5,26.7 H38.6 Q36.4,26.7 36.4,24.5 V8.4 Q36.4,6.2 38.6,6.2 Z" fill="#fee79e" stroke="#0b2b4c" stroke-width="1.9"/><rect x="41" y="6.6" width="7.5" height="6.6" rx="1.2" fill="#f58442" stroke="#0b2b4c" stroke-width="1.5"/><path d="M40,26.7 V19.5 Q40,17.5 42,17.5 H51 Q53,17.5 53,19.5 V26.7 Z" fill="#16304f"/></g></svg>
<svg style="left:65px;top:136px;" width="32" height="32" viewBox="0 0 32 32"><g transform="translate(-60,0)"><path d="M65.1,25.5 V9 Q65.1,7.9 66.2,7.9 H68 Q68.5,6.9 69.5,6.9 H72 Q73,6.9 73.3,7.9 H84 Q85,7.9 85,9 V14 H65.1 Z" fill="#0b2b4c"/><rect x="66.8" y="9.8" width="16.5" height="4.6" fill="#fee79e"/><path d="M66.5,15.5 V14 H84" stroke="#0b2b4c" stroke-width="0"/><path d="M65.1,25.5 L68.7,14 H89.6 L85.5,25.5 Z" fill="#0b2b4c"/><path d="M65.5,22 L67.5,14.5 H68.7 L66,22 Z" fill="#fee79e"/></g></svg>
<svg style="left:100px;top:136px;" width="30" height="30" viewBox="0 0 30 30"><path d="M17.5,14 Q24,11 27.5,16.5 Q29,21.5 25.5,24 L26.5,26 Q23,25.5 21.5,25 Q17,25.5 15,22 Z" fill="#f58442"/><ellipse cx="15" cy="13.6" rx="9.3" ry="7.4" fill="#0b2b4c"/><path d="M9,18.5 L6.8,23 L13,20.5 Z" fill="#0b2b4c"/><path d="M17,20.5 Q21.5,19 23.5,15" fill="none" stroke="#d7d7e2" stroke-width="1"/></svg>
<svg style="left:186px;top:139.5px;" width="25" height="27" viewBox="0 0 25 27"><path d="M0.6,14.8 L11,10.5 L23.6,19.6 L12.8,24.5 Z" fill="#f58442" stroke="#0b2b4c" stroke-width="1.6" stroke-linejoin="round"/><path d="M0.6,10.3 L11,6.0 L23.6,15.100000000000001 L12.8,20.0 Z" fill="#fee79e" stroke="#0b2b4c" stroke-width="1.6" stroke-linejoin="round"/><path d="M0.6,5.5 L11,1.2 L23.6,10.3 L12.8,15.2 Z" fill="#fee79e" stroke="#0b2b4c" stroke-width="1.6" stroke-linejoin="round"/><path d="M1.8,5.5 L11,1.8 L22.3,10.1 Z" fill="#fdf6dc"/><path d="M0.6,5.5 L11,1.2 L23.6,10.3 L12.8,15.2 Z" fill="none" stroke="#0b2b4c" stroke-width="1.6" stroke-linejoin="round"/><path d="M0,22 H5 M3.2,20.2 L5.2,22 L3.2,23.8" stroke="#0b2b4c" stroke-width="1.5" fill="none"/></svg>
<svg style="left:217px;top:139.5px;" width="25" height="27" viewBox="0 0 25 27"><path d="M0.6,14.8 L11,10.5 L23.6,19.6 L12.8,24.5 Z" fill="#fee79e" stroke="#0b2b4c" stroke-width="1.6" stroke-linejoin="round"/><path d="M0.6,10.3 L11,6.0 L23.6,15.100000000000001 L12.8,20.0 Z" fill="#fee79e" stroke="#0b2b4c" stroke-width="1.6" stroke-linejoin="round"/><path d="M0.6,5.5 L11,1.2 L23.6,10.3 L12.8,15.2 Z" fill="#fee79e" stroke="#0b2b4c" stroke-width="1.6" stroke-linejoin="round"/><path d="M1.8,5.5 L11,1.8 L22.3,10.1 Z" fill="#fdf6dc"/><path d="M0.6,5.5 L11,1.2 L23.6,10.3 L12.8,15.2 Z" fill="none" stroke="#0b2b4c" stroke-width="1.6" stroke-linejoin="round"/></svg>
<svg style="left:256px;top:144px;" width="60" height="17" viewBox="0 0 60 17"><rect x="0.6" y="0.6" width="15.2" height="15.2" fill="#fff" stroke="#000" stroke-width="1.2"/><circle cx="28.2" cy="8" r="3.6" fill="#fed48e" stroke="#f7a36a" stroke-width="0.8"/><path d="M33.2,8.0 L36.0,8.0" stroke="#f58442" stroke-width="1.3"/><path d="M31.73553625139613,11.535531560467788 L33.71543655217796,13.515429234329748" stroke="#f58442" stroke-width="1.3"/><path d="M28.200006633974482,12.999999999995598 L28.200010349000195,15.799999999993133" stroke="#f58442" stroke-width="1.3"/><path d="M24.66447313046678,11.535540942318251 L22.684578083528177,13.515443870016473" stroke="#f58442" stroke-width="1.3"/><path d="M23.200000000017603,8.000013267948967 L20.40000000002746,8.000020698000387" stroke="#f58442" stroke-width="1.3"/><path d="M24.664454366765852,4.46447782140757 L22.68454881215473,2.484585401395809" stroke="#f58442" stroke-width="1.3"/><path d="M28.199980098076548,3.000000000039609 L28.199968952999413,0.20000000006178986" stroke="#f58442" stroke-width="1.3"/><path d="M31.735517487645414,4.464449675856181 L33.71540728072684,2.4845414943356428" stroke="#f58442" stroke-width="1.3"/><path d="M41,7.5 V4.5 Q41,1 44.5,1 Q48,1 48,4.5 V5.5" fill="none" stroke="#0b2b4c" stroke-width="1.6"/><rect x="39.5" y="8" width="11" height="7.8" rx="1.2" fill="#fee79e" stroke="#0b2b4c" stroke-width="1.4"/><rect x="44.4" y="10.5" width="1.4" height="3.2" fill="#0b2b4c"/></svg>
<svg style="left:441.4px;top:150px;" width="10" height="6" viewBox="0 0 10 6"><path d="M0.5,0.5 L4.8,4.8 L9.1,0.5" fill="none" stroke="#333" stroke-width="1.2"/></svg>
<svg style="left:589.5px;top:150px;" width="10" height="6" viewBox="0 0 10 6"><path d="M0.5,0.5 L4.8,4.8 L9.1,0.5" fill="none" stroke="#333" stroke-width="1.2"/></svg>
<svg style="left:811.5px;top:150px;" width="10" height="6" viewBox="0 0 10 6"><path d="M0.5,0.5 L4.8,4.8 L9.1,0.5" fill="none" stroke="#333" stroke-width="1.2"/></svg>
<svg style="left:964px;top:150px;" width="10" height="6" viewBox="0 0 10 6"><path d="M0.5,0.5 L4.8,4.8 L9.1,0.5" fill="none" stroke="#333" stroke-width="1.2"/></svg>
<svg style="left:1040.5px;top:150px;" width="10" height="6" viewBox="0 0 10 6"><path d="M0.5,0.5 L4.8,4.8 L9.1,0.5" fill="none" stroke="#333" stroke-width="1.2"/></svg>
<svg style="left:465.5px;top:143.8px;" width="17" height="17" viewBox="0 0 17 17"><rect x="0.6" y="0.6" width="15.2" height="15.2" fill="#fff" stroke="#000" stroke-width="1.2"/></svg>
<svg style="left:617px;top:151px;" width="60" height="2" viewBox="0 0 60 2"><rect x="0" y="0.2" width="59" height="1.4" fill="#000"/></svg>
<svg style="left:841px;top:151px;" width="35" height="2" viewBox="0 0 35 2"><rect x="0" y="0.2" width="34" height="1.4" fill="#000"/></svg>
<svg style="left:1065px;top:140.5px;" width="22" height="22" viewBox="0 0 22 22"><path d="M18.5,3.2 Q9,2.5 7,11 L3,9.5 L6,18 L12.5,12.5 L9.2,11.8 Q11,6.5 18.5,6.8 Z" fill="#fee79e" stroke="#0b2b4c" stroke-width="1.5" stroke-linejoin="round"/></svg>
<svg style="left:1096px;top:140.5px;" width="22" height="22" viewBox="0 0 22 22"><g transform="matrix(-1,0,0,1,21.5,0)"><path d="M18.5,3.2 Q9,2.5 7,11 L3,9.5 L6,18 L12.5,12.5 L9.2,11.8 Q11,6.5 18.5,6.8 Z" fill="#fee79e" stroke="#0b2b4c" stroke-width="1.5" stroke-linejoin="round"/></g></svg>
<svg style="left:1132px;top:139.5px;" width="26" height="27" viewBox="0 0 26 27"><path d="M1.8,14.6 L7.5,20" stroke="#0b2b4c" stroke-width="4.6" stroke-linecap="round"/><path d="M4.4,3.9 L9,14" stroke="#0b2b4c" stroke-width="4.6" stroke-linecap="round"/><path d="M11.6,1.6 L12,13" stroke="#0b2b4c" stroke-width="4.6" stroke-linecap="round"/><path d="M17.8,3.9 L15.5,13" stroke="#0b2b4c" stroke-width="4.6" stroke-linecap="round"/><path d="M22.4,9.3 L18.5,15.5" stroke="#0b2b4c" stroke-width="4.6" stroke-linecap="round"/><path d="M4.5,15.5 L8.5,12 L19.5,12.5 L21.8,15.5 L18.6,23.6 L7.6,23.6 L2.2,17.5 Z" fill="#0b2b4c" stroke="#0b2b4c" stroke-width="1.8" stroke-linejoin="round"/><path d="M1.8,14.6 L7.5,20" stroke="#fee79e" stroke-width="2.2" stroke-linecap="round"/><path d="M4.4,3.9 L9,14" stroke="#fee79e" stroke-width="2.2" stroke-linecap="round"/><path d="M11.6,1.6 L12,13" stroke="#fee79e" stroke-width="2.2" stroke-linecap="round"/><path d="M17.8,3.9 L15.5,13" stroke="#fee79e" stroke-width="2.2" stroke-linecap="round"/><path d="M22.4,9.3 L18.5,15.5" stroke="#fee79e" stroke-width="2.2" stroke-linecap="round"/><path d="M5.5,15.8 L9,13.2 L19,13.6 L20.5,15.6 L17.8,22.4 L8.3,22.4 L3.8,17.4 Z" fill="#fee79e"/></svg>
<svg style="left:1169.3px;top:140.8px;" width="24" height="24" viewBox="0 0 24 24"><path d="M14.6,14.6 L21,21" stroke="#0b2b4c" stroke-width="3.6" stroke-linecap="round"/><circle cx="9" cy="9" r="7.9" fill="#ffffff"/><path d="M3.4,14.6 A7.9,7.9 0 0 1 14.6,3.4 Z" fill="#fdf0a8"/><path d="M14.6,3.4 A7.9,7.9 0 0 1 3.4,14.6 Z" fill="#e3e6ef"/><path d="M6,5.2 H10 L12.4,7.6 V12.6 H6 Z" fill="#fff" stroke="#0b2b4c" stroke-width="1.5"/><path d="M7,6 V9 Q7,6 9.5,6 Z" fill="#fee79e"/><path d="M10,5.2 V7.6 H12.4" fill="#0b2b4c" stroke="#0b2b4c" stroke-width="1"/><circle cx="9" cy="9" r="7.9" fill="none" stroke="#0b2b4c" stroke-width="2.2"/></svg>
<svg style="left:1200.3px;top:140.8px;" width="24" height="24" viewBox="0 0 24 24"><path d="M14.6,14.6 L21,21" stroke="#0b2b4c" stroke-width="3.6" stroke-linecap="round"/><circle cx="9" cy="9" r="7.9" fill="#ffffff"/><path d="M3.4,14.6 A7.9,7.9 0 0 1 14.6,3.4 Z" fill="#fdf0a8"/><path d="M14.6,3.4 A7.9,7.9 0 0 1 3.4,14.6 Z" fill="#e3e6ef"/><path d="M9,3.6 L11,6 H7 Z M9,14.4 L11,12 H7 Z M3.6,9 L6,7 V11 Z M14.4,9 L12,7 V11 Z" fill="#0b2b4c"/><circle cx="9" cy="9" r="7.9" fill="none" stroke="#0b2b4c" stroke-width="2.2"/></svg>
<svg style="left:1231.3px;top:140.8px;" width="24" height="24" viewBox="0 0 24 24"><path d="M14.6,14.6 L21,21" stroke="#0b2b4c" stroke-width="3.6" stroke-linecap="round"/><circle cx="9" cy="9" r="7.9" fill="#ffffff"/><path d="M3.4,14.6 A7.9,7.9 0 0 1 14.6,3.4 Z" fill="#fdf0a8"/><path d="M14.6,3.4 A7.9,7.9 0 0 1 3.4,14.6 Z" fill="#e3e6ef"/><path d="M9,4.5 V13.5 M4.5,9 H13.5" stroke="#0b2b4c" stroke-width="2.2"/><circle cx="9" cy="9" r="7.9" fill="none" stroke="#0b2b4c" stroke-width="2.2"/></svg>
<svg style="left:1262.3px;top:140.8px;" width="24" height="24" viewBox="0 0 24 24"><path d="M14.6,14.6 L21,21" stroke="#0b2b4c" stroke-width="3.6" stroke-linecap="round"/><circle cx="9" cy="9" r="7.9" fill="#ffffff"/><path d="M3.4,14.6 A7.9,7.9 0 0 1 14.6,3.4 Z" fill="#fdf0a8"/><path d="M14.6,3.4 A7.9,7.9 0 0 1 3.4,14.6 Z" fill="#e3e6ef"/><path d="M4.5,9 H13.5" stroke="#0b2b4c" stroke-width="2.2"/><circle cx="9" cy="9" r="7.9" fill="none" stroke="#0b2b4c" stroke-width="2.2"/></svg>
<svg style="left:1292.5px;top:140px;" width="26" height="25" viewBox="0 0 26 25"><rect x="0" y="0" width="24.5" height="23.5" fill="#9f9f9f"/><path d="M24.5,0 V24 H0" stroke="#fff" stroke-width="1.2" fill="none"/></svg>
<svg style="left:1329.5px;top:140px;" width="26" height="25" viewBox="0 0 26 25"><path d="M0.5,1 H20 L21,8 L24,14 V23.5 H10 L1,22 Z" fill="#9f9f9f"/><path d="M5,6.5 H8 M11,6.5 H13 M16,6.5 H18 M5,15 H7 M13,17 L15,19 L18,14" stroke="#e8e8e8" stroke-width="1"/><path d="M24.5,14 V24 H10" stroke="#fff" stroke-width="1" fill="none"/></svg>
<svg style="left:1367.5px;top:140.5px;" width="23" height="23" viewBox="0 0 23 23"><path d="M1.6,7.5 V1.6 H7.5 M15,1.6 H20.9 V7.5 M20.9,15 V20.9 H15 M7.5,20.9 H1.6 V15" fill="none" stroke="#0b2b4c" stroke-width="3.2"/></svg>
<svg style="left:1410.5px;top:154px;" width="11" height="4" viewBox="0 0 11 4"><rect x="0" y="0.5" width="10.5" height="2.4" fill="#0b2b4c"/></svg>
<svg style="left:1438.5px;top:146.5px;" width="17" height="12" viewBox="0 0 17 12"><rect x="0.7" y="0.7" width="9" height="7" fill="none" stroke="#0b2b4c" stroke-width="1.3"/><rect x="6.5" y="3.2" width="8.6" height="7.6" fill="#d7d7e2" stroke="#0b2b4c" stroke-width="1.3"/></svg>
<svg style="left:1473.5px;top:147.5px;" width="10" height="10" viewBox="0 0 10 10"><path d="M1,1 L8.5,8 M8.5,1 L1,8" stroke="#0b2b4c" stroke-width="2.4"/></svg>
<svg style="left:0px;top:176px;" width="30" height="455" viewBox="0 0 30 455"><path d="M4.4,26.3 L20.9,7.6" stroke="#0b2b4c" stroke-width="2"/><rect x="2.4000000000000004" y="24.3" width="4" height="4" fill="#fff4d6" stroke="#f58442" stroke-width="1.6"/><rect x="18.9" y="5.6" width="4" height="4" fill="#fff4d6" stroke="#f58442" stroke-width="1.6"/><path d="M2.8,52.2 H19 M19,42.8 Q24.5,43 24.5,47.5 Q24.5,52 19,52.2" fill="none" stroke="#0b2b4c" stroke-width="2"/><rect x="0.9999999999999998" y="50.400000000000006" width="3.6" height="3.6" fill="#fff4d6" stroke="#f58442" stroke-width="1.6"/><rect x="17.2" y="50.400000000000006" width="3.6" height="3.6" fill="#fff4d6" stroke="#f58442" stroke-width="1.6"/><rect x="17.2" y="41.0" width="3.6" height="3.6" fill="#fff4d6" stroke="#f58442" stroke-width="1.6"/><rect x="10.899999999999999" y="75.2" width="3.6" height="3.6" fill="#fff4d6" stroke="#f58442" stroke-width="1.6"/><circle cx="12.7" cy="107" r="8.6" fill="#9f9f9f"/><path d="M12.7,96.5 V99 M12.7,115 V117.5 M2.2,107 H4.7 M20.7,107 H23.2" stroke="#9f9f9f" stroke-width="2.4"/><path d="M4.4,146 Q4.4,128 20.9,127.3" fill="none" stroke="#0b2b4c" stroke-width="2"/><rect x="2.5000000000000004" y="144.1" width="3.8" height="3.8" fill="#fff4d6" stroke="#f58442" stroke-width="1.6"/><rect x="19.0" y="125.39999999999999" width="3.8" height="3.8" fill="#fff4d6" stroke="#f58442" stroke-width="1.6"/><circle cx="12.7" cy="166.8" r="10" fill="#fff"/><path d="M5.6,173.9 A10,10 0 0 1 19.8,159.7 Z" fill="#fee79e"/><circle cx="12.7" cy="166.8" r="10" fill="none" stroke="#0b2b4c" stroke-width="2"/><rect x="11.0" y="165.10000000000002" width="3.4" height="3.4" fill="#fff4d6" stroke="#f58442" stroke-width="1.6"/><ellipse cx="12.7" cy="196.6" rx="10.6" ry="6.4" fill="#fff"/><path d="M4,199.5 Q5,190 19,192.5 Z" fill="#fee79e"/><ellipse cx="12.7" cy="196.6" rx="10.6" ry="6.4" fill="none" stroke="#0b2b4c" stroke-width="2"/><rect x="11.0" y="194.9" width="3.4" height="3.4" fill="#fff4d6" stroke="#f58442" stroke-width="1.6"/><rect x="2.8" y="220" width="20" height="13.9" fill="#fff"/><path d="M2.8,233.9 V220 H22.8 Z" fill="#fee79e"/><rect x="2.8" y="220" width="20" height="13.9" fill="none" stroke="#0b2b4c" stroke-width="2"/><rect x="20.4" y="218.5" width="3.6" height="3.6" fill="#fff4d6" stroke="#f58442" stroke-width="1.6"/><rect x="1.7" y="231.79999999999998" width="3.6" height="3.6" fill="#fff4d6" stroke="#f58442" stroke-width="1.6"/><path d="M4.2,264.8 L10.6,245 H14.8 L21.2,264.8 H17.4 L15.8,259.6 H9.6 L8,264.8 Z M10.6,256.2 H14.8 L12.7,249.6 Z" fill="#0b2b4c" fill-rule="evenodd"/><path d="M11.4,255.2 L12.7,251.2 L14,255.2 Z" fill="#fee79e"/><rect x="2.8" y="266.6" width="20" height="2" fill="#f58442"/><path d="M1.5,282.5 L8,276 H14 L25,287 L16,296 L5,285 Z" fill="#9f9f9f"/><path d="M6,283 L8.5,281 M9,286 L11,288" stroke="#eee" stroke-width="0.9"/><path d="M1,306 V299 Q1,296 4,296 H14 Q18,296 18,300 V304 Q25,305 25,312 Q25,320 17,320 Q10,320 9.5,313 H1 Z" fill="#9f9f9f"/><path d="M6,307 L12,302 M12,316 L15,313 L18,313" stroke="#f4f4f4" stroke-width="1"/><path d="M1,336 V329 Q1,326 4,326 H14 Q18,326 18,330 V334 Q25,335 25,342 Q25,350 17,350 Q10,350 9.5,343 H1 Z" fill="#9f9f9f"/><path d="M6,337 L12,332 M12,346 L15,343 L18,343" stroke="#f4f4f4" stroke-width="1"/><path d="M1,366 V359 Q1,356 4,356 H16 L16,353 L24,359 L18,364 Q25,366 25,372 Q25,380 17,380 Q10,380 9.5,373 H1 Z" fill="#9f9f9f"/><path d="M12,376 L15,373 L18,373" stroke="#f4f4f4" stroke-width="1"/><path d="M2,398 H5 V395 H9 V398 H17 V395 H21 V398 H24 V402 H22 V412 H24 V416 H21 V419 H17 V416 H9 V419 H5 V416 H2 V412 H4 V402 H2 Z" fill="#9f9f9f"/><path d="M16,410 V406 M16,410 H19" stroke="#f4f4f4" stroke-width="1"/><path d="M2,428 H5 V425 H9 V428 H17 V425 H21 V428 H24 V432 H22 V442 H24 V446 H21 V449 H17 V446 H9 V449 H5 V446 H2 V442 H4 V432 H2 Z" fill="#9f9f9f"/><path d="M16,440 V436 M16,440 H19" stroke="#f4f4f4" stroke-width="1"/></svg>
<svg style="left:32px;top:176px;" width="34" height="485" viewBox="0 0 34 485"><g transform="translate(-32,0)"><path d="M36.7,23.4 H58.9" stroke="#0b2b4c" stroke-width="2.2"/><path d="M51.5,9.2 H58.9 L49,20.8 L43.6,18.6 Z" fill="#fee79e" stroke="#0b2b4c" stroke-width="1.5" stroke-linejoin="round"/><path d="M43.2,18.4 L49.2,21 L46.8,24 L42,22.2 Z" fill="#f58442" stroke="#0b2b4c" stroke-width="1.3" stroke-linejoin="round"/></g><g transform="translate(-32,0)"><circle cx="39.9" cy="41.1" r="3.4" fill="#fee79e" stroke="#0b2b4c" stroke-width="1.3"/><path d="M42.8,37.6 Q51,32 55.5,42.5" fill="none" stroke="#0b2b4c" stroke-width="1.3"/><path d="M44.5,36 Q52,34.5 53,42 L56.5,42 L52,49.5 L46.5,42.5 L49.8,42.3 Q48.5,39.8 44.5,39.5 Z" fill="#f58442" stroke="#0b2b4c" stroke-width="0.6"/><circle cx="53.6" cy="54.5" r="3" fill="#fee79e" stroke="#0b2b4c" stroke-width="1.2"/><circle cx="49.4" cy="51.9" r="3" fill="#fee79e" stroke="#0b2b4c" stroke-width="1.2"/></g><g transform="translate(-32,0)"><path d="M36.7,84.6 L45.8,69.6 V84.6 Z M49.6,69.6 L58.9,84.6 H49.6 Z" fill="#fee79e" stroke="#0b2b4c" stroke-width="1.5" stroke-linejoin="round"/><path d="M47.8,66.5 V88.6" stroke="#f58442" stroke-width="1.5"/></g><g transform="translate(-32,0)"><path d="M58.9,104.4 H51 Q50,99.5 45.5,99.8 Q41.5,100.2 41.5,104.5 Q37.5,105 37.5,109 Q37.5,113.6 42,113.6 H58.9" fill="none" stroke="#0b2b4c" stroke-width="2.2"/><path d="M58.5,107 H49 M58.5,111 H42.5 Q40,111 40,108.5" fill="none" stroke="#f58442" stroke-width="1"/></g><g transform="translate(-32,0)"><rect x="36" y="125" width="24" height="24" fill="#9f9f9f"/><path d="M60.5,125 V149.5 H36" stroke="#fff" stroke-width="1" fill="none"/></g><g transform="translate(-32,0)"><path d="M38.5,166.8 H57.7 M48.1,157.2 V176.4" stroke="#0b2b4c" stroke-width="2.6"/><path d="M48.1,155.2 L44.6,159.8 H51.6 Z M48.1,178.4 L44.6,173.8 H51.6 Z M36.5,166.8 L41,163.3 V170.3 Z M59.7,166.8 L55.2,163.3 V170.3 Z" fill="#0b2b4c"/></g><g transform="translate(-32,0)"><path d="M41.5,192.5 A8,8 0 1 1 41,200" fill="none" stroke="#0b2b4c" stroke-width="3.6"/><path d="M36.5,200.5 L42,193 L46.5,200.5 Z" fill="#0b2b4c"/></g><g transform="translate(-32,0)"><path d="M48,215 L59.5,226 L45,239.5 L37,231 L41,227 L40.5,223 Z" fill="#9f9f9f"/><path d="M45.5,239.5 L60,226" stroke="#fff" stroke-width="1"/></g><g transform="translate(-32,0)"><rect x="36.7" y="245" width="23.3" height="24" fill="#9f9f9f"/><path d="M60.5,245 V269.5 H36.7" stroke="#fff" stroke-width="1" fill="none"/></g><g transform="translate(-32,0)"><rect x="36" y="275" width="24" height="24" fill="#9f9f9f"/><path d="M60.5,275 V299.5 H36" stroke="#fff" stroke-width="1" fill="none"/></g><g transform="translate(-32,0)"><path d="M36,316.6 H46.8" stroke="#0b2b4c" stroke-width="2.2"/><path d="M48,316.6 H59.5" stroke="#0b2b4c" stroke-width="1.4" stroke-dasharray="1.5,2.5"/><path d="M44.3,326.7 L52.5,306.5" stroke="#f58442" stroke-width="1.4"/></g><g transform="translate(-32,0)"><path d="M36,346.3 H45" stroke="#0b2b4c" stroke-width="2.2"/><path d="M46.5,346.3 H57" stroke="#0b2b4c" stroke-width="1.4" stroke-dasharray="1.5,2.5"/><path d="M52.5,355.2 L59.5,337.5" stroke="#f58442" stroke-width="1.4"/></g><g transform="translate(-32,0)"><rect x="37" y="367.8" width="22.3" height="20" fill="#fee79e" stroke="#0b2b4c" stroke-width="1.5"/><rect x="41.4" y="366.20000000000005" width="2.8" height="2.8" fill="#fff4d6" stroke="#f58442" stroke-width="1.6"/><rect x="52.0" y="366.20000000000005" width="2.8" height="2.8" fill="#fff4d6" stroke="#f58442" stroke-width="1.6"/></g><g transform="translate(-32,0)"><path d="M37,397 H51 M37,397 V408" stroke="#0b2b4c" stroke-width="1.5" stroke-dasharray="1.5,2.2"/><path d="M51,396.8 H59.5" stroke="#0b2b4c" stroke-width="2.2"/><path d="M37.3,410 V418.5" stroke="#0b2b4c" stroke-width="2.2"/><path d="M37.3,410 Q37.5,397.5 51,396.8" fill="none" stroke="#f58442" stroke-width="1.5"/></g><g transform="translate(-32,0)"><path d="M37.5,447.5 V426 H59" fill="none" stroke="#0b2b4c" stroke-width="2.2"/><path d="M37.5,439.5 L50.5,426" stroke="#f58442" stroke-width="1.4"/></g><g transform="translate(-32,0)"><path d="M48.3,454 L50.5,460.5 L56.5,457.5 L54,463.5 L60,466.5 L53.5,468 L55,475 L49.5,470.5 L46,477 L44.5,470 L38.5,471 L42,466 L36.5,462 L43,461 L41.5,455.5 L46,459.5 Z" fill="#fee79e" stroke="#0b2b4c" stroke-width="1.4" stroke-linejoin="round"/><circle cx="48.3" cy="465.5" r="3.3" fill="#f58442"/></g></svg>
<svg style="left:1888px;top:176px;" width="30" height="425" viewBox="0 0 30 425"><g transform="translate(-1888,-176)"><path d="M1898.9,199.8 L1912.2,186.1" stroke="#0b2b4c" stroke-width="1.6"/><circle cx="1898.9" cy="199.8" r="2.6" fill="#fff" stroke="#f58442" stroke-width="1.4"/><circle cx="1912.2" cy="186.1" r="2.6" fill="#fff" stroke="#f58442" stroke-width="1.4"/><path d="M1897.6,230.4 L1914,214.6" stroke="#0b2b4c" stroke-width="1.6"/><circle cx="1905.8" cy="223.1" r="2.6" fill="#fff" stroke="#f58442" stroke-width="1.4"/><circle cx="1905.8" cy="252.6" r="8.5" fill="#fee79e" stroke="#0b2b4c" stroke-width="1.8"/><circle cx="1905.8" cy="252.6" r="2.4" fill="#fff" stroke="#f58442" stroke-width="1.5"/><path d="M1897.6,274.7 L1914,291.2 M1914,274.7 L1897.6,291.2" stroke="#0b2b4c" stroke-width="1.6"/><circle cx="1905.8" cy="283" r="2.6" fill="#fff" stroke="#f58442" stroke-width="1.4"/><path d="M1897,303 L1915,321 M1915,303 L1897,321" stroke="#9f9f9f" stroke-width="2.2" stroke-dasharray="3,1.5"/><rect x="1902.5" y="308.5" width="7" height="7" fill="#9f9f9f"/><circle cx="1898.3" cy="335.2" r="3" fill="#9f9f9f"/><path d="M1902,335.2 H1918" stroke="#9f9f9f" stroke-width="2" stroke-dasharray="3,2"/><path d="M1898.3,339 V355" stroke="#9f9f9f" stroke-width="2" stroke-dasharray="3,2"/><path d="M1897,376 V362.5 H1911.5 V372 Z" fill="#fee79e" stroke="#0b2b4c" stroke-width="1.5"/><circle cx="1909" cy="376.4" r="6.3" fill="#fff"/><path d="M1904.5,380.9 A6.3,6.3 0 0 1 1913.5,371.9 Z" fill="#fee79e"/><circle cx="1909" cy="376.4" r="6.3" fill="none" stroke="#0b2b4c" stroke-width="1.5"/><circle cx="1897" cy="373.2" r="2.4" fill="#fff" stroke="#f58442" stroke-width="1.4"/><path d="M1905.8,396 V408.7 M1896.4,408.7 H1916" stroke="#0b2b4c" stroke-width="1.6"/><circle cx="1905.8" cy="408.7" r="2.6" fill="#fff" stroke="#f58442" stroke-width="1.4"/><path d="M1896.7,441.3 L1912.2,426.8" stroke="#0b2b4c" stroke-width="1.6"/><circle cx="1907.1" cy="431.2" r="2.6" fill="#fff" stroke="#f58442" stroke-width="1.4"/><circle cx="1912.4" cy="436.3" r="2.3" fill="#fff" stroke="#0b2b4c" stroke-width="1.6"/><circle cx="1905.8" cy="463.1" r="2.6" fill="#fff" stroke="#f58442" stroke-width="1.4"/><circle cx="1905.8" cy="493.2" r="8.5" fill="#fee79e" stroke="#0b2b4c" stroke-width="1.6"/><circle cx="1905.8" cy="484.8" r="2.6" fill="#fff" stroke="#f58442" stroke-width="1.4"/><circle cx="1897.3" cy="493.2" r="2.6" fill="#fff" stroke="#f58442" stroke-width="1.4"/><circle cx="1914.3" cy="493.2" r="2.6" fill="#fff" stroke="#f58442" stroke-width="1.4"/><circle cx="1905.8" cy="501.7" r="2.6" fill="#fff" stroke="#f58442" stroke-width="1.4"/><circle cx="1906" cy="524" r="8.3" fill="#fee79e" stroke="#0b2b4c" stroke-width="1.6"/><path d="M1897,520 L1901,514.5" stroke="#d7d7e2" stroke-width="3"/><path d="M1896.5,521.5 L1899.5,516 M1901.5,513.5 L1904,511.5" stroke="#0b2b4c" stroke-width="1.4"/><circle cx="1900.2" cy="516.6" r="2.6" fill="#fff" stroke="#f58442" stroke-width="1.4"/><path d="M1899.8,544.8 V552.5 Q1899.8,558.5 1906,558.5 Q1912.3,558.5 1912.3,552.5 V544.8" fill="none" stroke="#0b2b4c" stroke-width="4"/><rect x="1898.5" y="545" width="2.6" height="2.6" fill="#fee79e"/><path d="M1895.3,563.3 L1916.4,542.2" stroke="#f58442" stroke-width="2.6" stroke-linecap="round"/><rect x="1913.2" y="560" width="3.5" height="3.5" fill="#fff" stroke="#0b2b4c" stroke-width="1.3"/><path d="M1899.8,574.7 V582.8 Q1899.8,588.8 1906,588.8 Q1912.3,588.8 1912.3,582.8 V574.7" fill="none" stroke="#0b2b4c" stroke-width="4"/><rect x="1898.5" y="575" width="2.6" height="2.6" fill="#fee79e"/><rect x="1911" y="575" width="2.6" height="2.6" fill="#fee79e"/><rect x="1913.2" y="589.8" width="3.5" height="3.5" fill="#fff4d6" stroke="#f58442" stroke-width="1.5"/></g></svg>
<div class='t' style='left:18.2px;top:10.5px;font-size:16px;line-height:16px;font-weight:400;color:#000;letter-spacing:0.04px;'>Início</div><div class='t' style='left:87.3px;top:10.5px;font-size:16px;line-height:16px;font-weight:400;color:#000;letter-spacing:-0.23px;'>Editar</div><div class='t' style='left:158.4px;top:10.5px;font-size:16px;line-height:16px;font-weight:400;color:#000;letter-spacing:-0.05px;'>Exibir</div><div class='t' style='left:227.2px;top:10.5px;font-size:16px;line-height:16px;font-weight:400;color:#000;letter-spacing:-0.18px;'>Formatar</div><div class='t' style='left:314.8px;top:8.5px;font-size:16px;line-height:16px;font-weight:700;color:#000;letter-spacing:0.51px;'>Raster</div><div class='t' style='left:391.0px;top:10.5px;font-size:16px;line-height:16px;font-weight:400;color:#000;letter-spacing:-0.45px;'>Meu TOPO</div><div class='t' style='left:28.4px;top:84.5px;font-size:14.5px;line-height:14.5px;font-weight:400;color:#000;letter-spacing:-1.25px;'>ECW</div><div class='t' style='left:103.0px;top:84.5px;font-size:14.5px;line-height:14.5px;font-weight:400;color:#000;letter-spacing:0.04px;'>GeoTIFF</div><div class='t' style='left:194.1px;top:84.5px;font-size:14.5px;line-height:14.5px;font-weight:400;color:#000;letter-spacing:-0.02px;'>Outras</div><div class='t' style='left:269.3px;top:84.5px;font-size:14.5px;line-height:14.5px;font-weight:400;color:#000;letter-spacing:0.10px;'>Tudo</div><div class='t' style='left:324.5px;top:84.5px;font-size:14.5px;line-height:14.5px;font-weight:400;color:#000;letter-spacing:-0.63px;'>Seleção</div><div class='t' style='left:406.2px;top:84.5px;font-size:14.5px;line-height:14.5px;font-weight:400;color:#000;letter-spacing:0.15px;'>Tudo</div><div class='t' style='left:461.0px;top:84.5px;font-size:14.5px;line-height:14.5px;font-weight:400;color:#000;letter-spacing:-0.52px;'>Seleção</div><div class='t' style='left:534.4px;top:85.1px;font-size:14.5px;line-height:14.5px;font-weight:400;color:#000;letter-spacing:0.36px;'>Importar</div><div class='t' style='left:615.8px;top:85.1px;font-size:14.5px;line-height:14.5px;font-weight:400;color:#000;letter-spacing:-0.55px;'>Plotar</div><div class='t' style='left:693.0px;top:84.3px;font-size:14.5px;line-height:14.5px;font-weight:400;color:#000;letter-spacing:-0.26px;'>Área</div><div class='t' style='left:744.9px;top:84.3px;font-size:14.5px;line-height:14.5px;font-weight:400;color:#000;letter-spacing:-0.47px;'>Distância</div><div class='t' style='left:811.7px;top:84.3px;font-size:14.5px;line-height:14.5px;font-weight:400;color:#000;letter-spacing:-0.21px;'>Clip Img</div><div class='t' style='left:888.0px;top:85.0px;font-size:14.5px;line-height:14.5px;font-weight:400;color:#000;letter-spacing:-0.66px;'>Vídeos</div><div class='t' style='left:941.2px;top:85.0px;font-size:14.5px;line-height:14.5px;font-weight:400;color:#000;letter-spacing:-0.10px;'>Tutoriais</div><div class='t' style='left:61.5px;top:110.3px;font-size:15px;line-height:15px;font-weight:700;color:#0f2b4b;letter-spacing:0.55px;-webkit-text-stroke:0.35px #0f2b4b;'>Importar Imagens</div><div class='t' style='left:257.0px;top:110.3px;font-size:15px;line-height:15px;font-weight:700;color:#0f2b4b;letter-spacing:0.15px;-webkit-text-stroke:0.35px #0f2b4b;'>Enviar para CAD</div><div class='t' style='left:412.1px;top:110.3px;font-size:15px;line-height:15px;font-weight:700;color:#0f2b4b;letter-spacing:0.30px;-webkit-text-stroke:0.35px #0f2b4b;'>Gerar DWG</div><div class='t' style='left:560.2px;top:110.3px;font-size:15px;line-height:15px;font-weight:700;color:#0f2b4b;letter-spacing:0.01px;-webkit-text-stroke:0.35px #0f2b4b;'>Desenhos</div><div class='t' style='left:725.6px;top:110.3px;font-size:15px;line-height:15px;font-weight:700;color:#0f2b4b;letter-spacing:0.40px;-webkit-text-stroke:0.35px #0f2b4b;'>Ferramentas</div><div class='t' style='left:892.3px;top:110.3px;font-size:15px;line-height:15px;font-weight:700;color:#0f2b4b;letter-spacing:0.26px;-webkit-text-stroke:0.35px #0f2b4b;'>Ajuda Raster</div><div class='t' style='left:132.7px;top:145.5px;font-size:14.3px;line-height:14.3px;font-weight:700;color:#0d3a5a;letter-spacing:-0.34px;'>CHAT</div><div class='t' style='left:315.0px;top:144.8px;font-size:17px;line-height:17px;font-weight:400;color:#000;letter-spacing:-1.97px;transform:scaleX(0.72);transform-origin:0 0;'>0</div><div class='t' style='left:484.3px;top:145.5px;font-size:13px;line-height:13px;font-weight:400;color:#000;letter-spacing:0.45px;'>DaCamada</div><div class='t' style='left:684.4px;top:145.5px;font-size:13px;line-height:13px;font-weight:400;color:#000;letter-spacing:0.38px;'>DaCamada</div><div class='t' style='left:882.2px;top:145.5px;font-size:13px;line-height:13px;font-weight:400;color:#000;letter-spacing:0.34px;'>Da Camada</div><div class='t' style='left:989.6px;top:145.5px;font-size:13px;line-height:13px;font-weight:400;color:#000;letter-spacing:-0.48px;'>1000</div><div class='t' style='left:74.4px;top:907.4px;font-size:12.5px;line-height:12.5px;font-weight:400;color:#000;letter-spacing:-0.07px;'>C A D</div><div class='t' style='left:120.5px;top:907.0px;font-size:13px;line-height:13px;font-weight:700;color:#000;letter-spacing:-0.66px;'>RASTER</div><div class='t' style='left:9.4px;top:932.4px;font-size:12.5px;line-height:12.5px;font-weight:400;color:#000;letter-spacing:0.09px;'>269496.0013 , 7473662.6320</div><div class='t' style='left:224.5px;top:932.2px;font-size:12.5px;line-height:12.5px;font-weight:400;color:#6e6e6e;letter-spacing:0.12px;'>Ortho - F8</div><div class='t' style='left:294.4px;top:932.2px;font-size:12.5px;line-height:12.5px;font-weight:400;color:#6e6e6e;letter-spacing:-0.06px;'>Osnap - F3</div><div class='t' style='left:371.6px;top:932.2px;font-size:12.5px;line-height:12.5px;font-weight:400;color:#6e6e6e;letter-spacing:0.12px;'>Atrib - F4</div><div class='t' style='left:440.3px;top:932.2px;font-size:12.5px;line-height:12.5px;font-weight:400;color:#a6a6a6;letter-spacing:0.05px;'>SGrip - F5</div><div class='t' style='left:517.0px;top:932.2px;font-size:12.5px;line-height:12.5px;font-weight:400;color:#a6a6a6;letter-spacing:-0.00px;'>Grid - F7</div><div class='t' style='left:585.7px;top:932.2px;font-size:12.5px;line-height:12.5px;font-weight:400;color:#a6a6a6;letter-spacing:0.09px;'>Snap - F9</div><div class='t' style='left:653.5px;top:932.2px;font-size:12.5px;line-height:12.5px;font-weight:400;color:#505050;letter-spacing:0.12px;'>RTexto - F10</div><div class='t' style='left:733.5px;top:932.2px;font-size:12.5px;line-height:12.5px;font-weight:400;color:#a6a6a6;letter-spacing:0.17px;'>Nome - F11</div><div class='t' style='left:808.6px;top:932.2px;font-size:12.5px;line-height:12.5px;font-weight:400;color:#a6a6a6;letter-spacing:0.21px;'>Filtro - F12</div><div class='t' style='left:886.7px;top:932.2px;font-size:12.5px;line-height:12.5px;font-weight:400;color:#a6a6a6;letter-spacing:-0.13px;'>Snap Pto</div><div class='t' style='left:960.5px;top:932.2px;font-size:12.5px;line-height:12.5px;font-weight:400;color:#a6a6a6;letter-spacing:-0.14px;'>Snap 3D</div>
</body></html>
